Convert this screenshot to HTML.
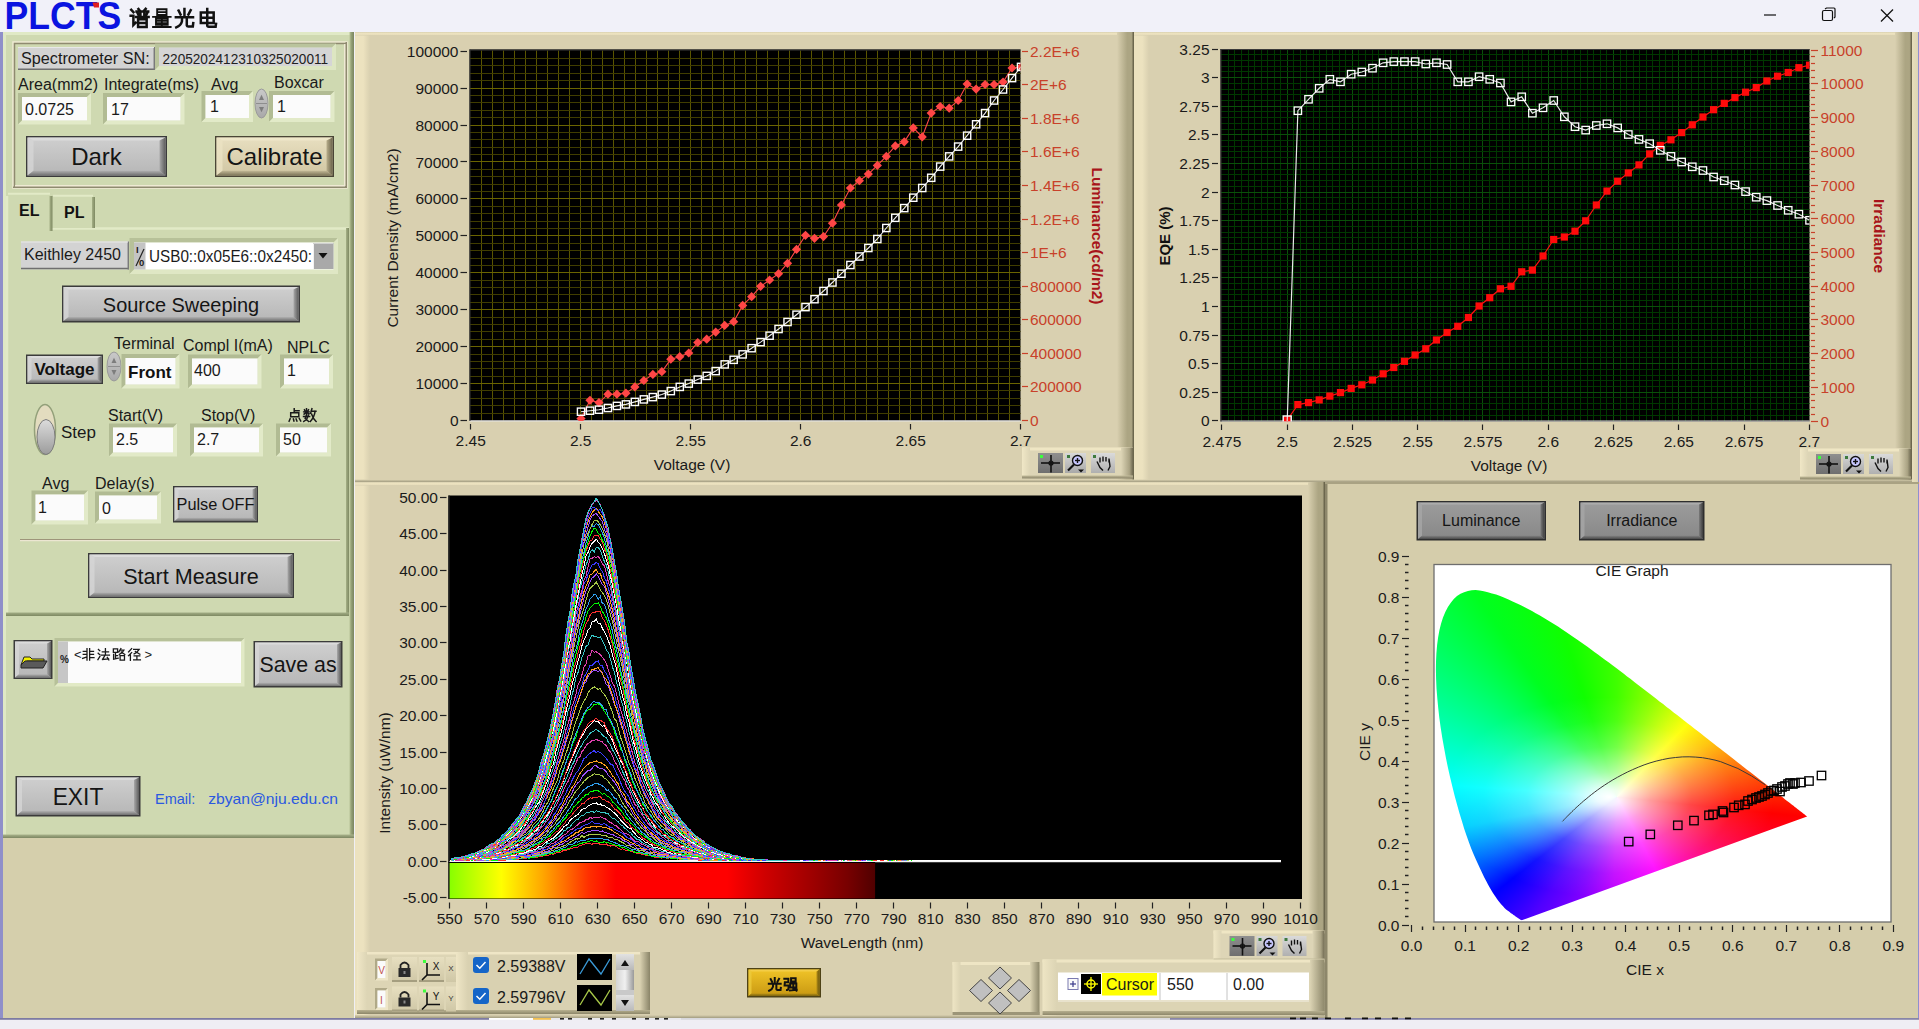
<!DOCTYPE html><html><head><meta charset="utf-8"><style>*{margin:0;padding:0}html,body{width:1919px;height:1029px;overflow:hidden;background:#f0eff5}svg text{font-family:"Liberation Sans",sans-serif}</style></head><body><svg width="1919" height="1029" viewBox="0 0 1919 1029" style="position:absolute;left:0;top:0"><defs><linearGradient id="g1" x1="0" y1="0" x2="1" y2="0"><stop offset="0" stop-color="#b7c297"/><stop offset="0.5" stop-color="#8e9a70"/><stop offset="1" stop-color="#7b8560"/></linearGradient><linearGradient id="g2" x1="0" y1="0" x2="0" y2="1"><stop offset="0" stop-color="#a9b38b"/><stop offset="1" stop-color="#7d8762"/></linearGradient><linearGradient id="g3" x1="0" y1="0" x2="0" y2="1"><stop offset="0" stop-color="#c9c9c9"/><stop offset="1" stop-color="#a9a9a9"/></linearGradient><linearGradient id="g4" x1="0" y1="0" x2="0" y2="1"><stop offset="0" stop-color="#cfcfcf"/><stop offset="1" stop-color="#b6b6b6"/></linearGradient><linearGradient id="g5" x1="0" y1="0" x2="1" y2="0"><stop offset="0" stop-color="#a8a8a8"/><stop offset="1" stop-color="#5c5c5c"/></linearGradient><linearGradient id="g6" x1="0" y1="0" x2="0" y2="1"><stop offset="0" stop-color="#b0b0b0"/><stop offset="1" stop-color="#707070"/></linearGradient><linearGradient id="g7" x1="0" y1="0" x2="0" y2="1"><stop offset="0" stop-color="#e8dfc0"/><stop offset="1" stop-color="#d0c6a3"/></linearGradient><linearGradient id="g8" x1="0" y1="0" x2="1" y2="0"><stop offset="0" stop-color="#b8ae8c"/><stop offset="1" stop-color="#6c654c"/></linearGradient><linearGradient id="g9" x1="0" y1="0" x2="0" y2="1"><stop offset="0" stop-color="#c2b896"/><stop offset="1" stop-color="#7c7458"/></linearGradient><linearGradient id="g10" x1="0" y1="0" x2="1" y2="0"><stop offset="0" stop-color="#a5b086"/><stop offset="1" stop-color="#7e8962"/></linearGradient><linearGradient id="g11" x1="0" y1="0" x2="0" y2="1"><stop offset="0" stop-color="#a2ad85"/><stop offset="1" stop-color="#7e8962"/></linearGradient><linearGradient id="g12" x1="0" y1="0" x2="1" y2="0"><stop offset="0" stop-color="#a5b086"/><stop offset="1" stop-color="#7e8962"/></linearGradient><linearGradient id="g13" x1="0" y1="0" x2="1" y2="0"><stop offset="0" stop-color="#a5b086"/><stop offset="1" stop-color="#7e8962"/></linearGradient><linearGradient id="g14" x1="0" y1="0" x2="0" y2="1"><stop offset="0" stop-color="#c9c9c9"/><stop offset="1" stop-color="#a9a9a9"/></linearGradient><linearGradient id="g15" x1="0" y1="0" x2="0" y2="1"><stop offset="0" stop-color="#dcdcdc"/><stop offset="1" stop-color="#9c9c9c"/></linearGradient><linearGradient id="g16" x1="0" y1="0" x2="1" y2="0"><stop offset="0" stop-color="#ece2bf"/><stop offset="0.55" stop-color="#ece2bf"/><stop offset="1" stop-color="#d9d0b0"/></linearGradient><linearGradient id="g17" x1="0" y1="0" x2="0" y2="1"><stop offset="0" stop-color="#d9d0b0"/><stop offset="0.4" stop-color="#ece2bf"/><stop offset="0.65" stop-color="#ece2bf"/><stop offset="1" stop-color="#d9d0b0"/></linearGradient><linearGradient id="g18" x1="0" y1="0" x2="1" y2="0"><stop offset="0" stop-color="#d9d0b0"/><stop offset="0.6" stop-color="#aca583"/><stop offset="0.85" stop-color="#aca583"/><stop offset="1" stop-color="#5c5740"/></linearGradient><linearGradient id="g19" x1="0" y1="0" x2="0" y2="1"><stop offset="0" stop-color="#d9d0b0"/><stop offset="1" stop-color="#a29c80"/></linearGradient><linearGradient id="g20" x1="0" y1="0" x2="1" y2="0"><stop offset="0" stop-color="#ece2bf"/><stop offset="0.55" stop-color="#ece2bf"/><stop offset="1" stop-color="#d9d0b0"/></linearGradient><linearGradient id="g21" x1="0" y1="0" x2="0" y2="1"><stop offset="0" stop-color="#d9d0b0"/><stop offset="0.4" stop-color="#ece2bf"/><stop offset="0.65" stop-color="#ece2bf"/><stop offset="1" stop-color="#d9d0b0"/></linearGradient><linearGradient id="g22" x1="0" y1="0" x2="1" y2="0"><stop offset="0" stop-color="#d9d0b0"/><stop offset="0.6" stop-color="#aca583"/><stop offset="0.85" stop-color="#aca583"/><stop offset="1" stop-color="#5c5740"/></linearGradient><linearGradient id="g23" x1="0" y1="0" x2="0" y2="1"><stop offset="0" stop-color="#d9d0b0"/><stop offset="1" stop-color="#a29c80"/></linearGradient><linearGradient id="g24" x1="0" y1="0" x2="1" y2="0"><stop offset="0" stop-color="#e8dfbd"/><stop offset="1" stop-color="#ddd5b3"/></linearGradient><linearGradient id="g25" x1="0" y1="0" x2="1" y2="0"><stop offset="0" stop-color="#ece2bf"/><stop offset="0.55" stop-color="#ece2bf"/><stop offset="1" stop-color="#d9d0b0"/></linearGradient><linearGradient id="g26" x1="0" y1="0" x2="0" y2="1"><stop offset="0" stop-color="#d9d0b0"/><stop offset="0.4" stop-color="#ece2bf"/><stop offset="0.65" stop-color="#ece2bf"/><stop offset="1" stop-color="#d9d0b0"/></linearGradient><linearGradient id="g27" x1="0" y1="0" x2="1" y2="0"><stop offset="0" stop-color="#d9d0b0"/><stop offset="0.6" stop-color="#aca583"/><stop offset="0.85" stop-color="#aca583"/><stop offset="1" stop-color="#5c5740"/></linearGradient><linearGradient id="g28" x1="0" y1="0" x2="0" y2="1"><stop offset="0" stop-color="#d9d0b0"/><stop offset="1" stop-color="#a29c80"/></linearGradient><linearGradient id="g29" x1="0" y1="0" x2="1" y2="0"><stop offset="0" stop-color="#f0e7c6"/><stop offset="1" stop-color="#ddd5b6"/></linearGradient><linearGradient id="g30" x1="0" y1="0" x2="1" y2="0"><stop offset="0" stop-color="#ddd5b6"/><stop offset="0.7" stop-color="#aaa384"/><stop offset="1" stop-color="#6e6850"/></linearGradient><linearGradient id="g31" x1="0" y1="0" x2="0" y2="1"><stop offset="0" stop-color="#c2bb9a"/><stop offset="1" stop-color="#8a8468"/></linearGradient><linearGradient id="g32" x1="0" y1="0" x2="0" y2="1"><stop offset="0" stop-color="#8f8f8f"/><stop offset="1" stop-color="#6f6f6f"/></linearGradient><linearGradient id="g33" x1="0" y1="0" x2="0" y2="1"><stop offset="0" stop-color="#d8d8d8"/><stop offset="1" stop-color="#a8a8a8"/></linearGradient><linearGradient id="g34" x1="0" y1="0" x2="0" y2="1"><stop offset="0" stop-color="#dadada"/><stop offset="1" stop-color="#b0b0b0"/></linearGradient><linearGradient id="g35" x1="0" y1="0" x2="1" y2="0"><stop offset="0" stop-color="#f0e7c6"/><stop offset="1" stop-color="#ddd5b6"/></linearGradient><linearGradient id="g36" x1="0" y1="0" x2="1" y2="0"><stop offset="0" stop-color="#ddd5b6"/><stop offset="0.7" stop-color="#aaa384"/><stop offset="1" stop-color="#6e6850"/></linearGradient><linearGradient id="g37" x1="0" y1="0" x2="0" y2="1"><stop offset="0" stop-color="#c2bb9a"/><stop offset="1" stop-color="#8a8468"/></linearGradient><linearGradient id="g38" x1="0" y1="0" x2="0" y2="1"><stop offset="0" stop-color="#8f8f8f"/><stop offset="1" stop-color="#6f6f6f"/></linearGradient><linearGradient id="g39" x1="0" y1="0" x2="0" y2="1"><stop offset="0" stop-color="#d8d8d8"/><stop offset="1" stop-color="#a8a8a8"/></linearGradient><linearGradient id="g40" x1="0" y1="0" x2="0" y2="1"><stop offset="0" stop-color="#dadada"/><stop offset="1" stop-color="#b0b0b0"/></linearGradient><linearGradient id="g41" x1="0" y1="0" x2="1" y2="0"><stop offset="0" stop-color="#f0e7c6"/><stop offset="1" stop-color="#ddd5b6"/></linearGradient><linearGradient id="g42" x1="0" y1="0" x2="1" y2="0"><stop offset="0" stop-color="#ddd5b6"/><stop offset="0.7" stop-color="#aaa384"/><stop offset="1" stop-color="#6e6850"/></linearGradient><linearGradient id="g43" x1="0" y1="0" x2="0" y2="1"><stop offset="0" stop-color="#c2bb9a"/><stop offset="1" stop-color="#8a8468"/></linearGradient><linearGradient id="g44" x1="0" y1="0" x2="0" y2="1"><stop offset="0" stop-color="#8f8f8f"/><stop offset="1" stop-color="#6f6f6f"/></linearGradient><linearGradient id="g45" x1="0" y1="0" x2="0" y2="1"><stop offset="0" stop-color="#d8d8d8"/><stop offset="1" stop-color="#a8a8a8"/></linearGradient><linearGradient id="g46" x1="0" y1="0" x2="0" y2="1"><stop offset="0" stop-color="#dadada"/><stop offset="1" stop-color="#b0b0b0"/></linearGradient><linearGradient id="g47" x1="0" y1="0" x2="1" y2="0"><stop offset="0.0" stop-color="#88ff00"/><stop offset="0.06521739130434782" stop-color="#c8ff00"/><stop offset="0.12173913043478261" stop-color="#ffff00"/><stop offset="0.17391304347826086" stop-color="#ffd000"/><stop offset="0.21739130434782608" stop-color="#ffa800"/><stop offset="0.26956521739130435" stop-color="#ff7000"/><stop offset="0.32608695652173914" stop-color="#ff3000"/><stop offset="0.391304347826087" stop-color="#ff0000"/><stop offset="0.6521739130434783" stop-color="#ff0000"/><stop offset="0.7391304347826086" stop-color="#d00000"/><stop offset="0.8478260869565217" stop-color="#a00000"/><stop offset="0.9347826086956522" stop-color="#780000"/><stop offset="1.0" stop-color="#500000"/></linearGradient><clipPath id="spclip"><rect x="449.5" y="495.5" width="852.5" height="367.0"/></clipPath><linearGradient id="g48" x1="0" y1="0" x2="1" y2="0"><stop offset="0" stop-color="#f0e7c7"/><stop offset="1" stop-color="#ddd5b5"/></linearGradient><linearGradient id="g49" x1="0" y1="0" x2="0" y2="1"><stop offset="0" stop-color="#b8b190"/><stop offset="1" stop-color="#8c8669"/></linearGradient><linearGradient id="g50" x1="0" y1="0" x2="0" y2="1"><stop offset="0" stop-color="#e7dfc0"/><stop offset="1" stop-color="#cfc7a6"/></linearGradient><linearGradient id="g51" x1="0" y1="0" x2="0" y2="1"><stop offset="0" stop-color="#e7dfc0"/><stop offset="1" stop-color="#cfc7a6"/></linearGradient><linearGradient id="g52" x1="0" y1="0" x2="0" y2="1"><stop offset="0" stop-color="#e7dfc0"/><stop offset="1" stop-color="#cfc7a6"/></linearGradient><linearGradient id="g53" x1="0" y1="0" x2="0" y2="1"><stop offset="0" stop-color="#e7dfc0"/><stop offset="1" stop-color="#cfc7a6"/></linearGradient><linearGradient id="g54" x1="0" y1="0" x2="0" y2="1"><stop offset="0" stop-color="#e7dfc0"/><stop offset="1" stop-color="#cfc7a6"/></linearGradient><linearGradient id="g55" x1="0" y1="0" x2="0" y2="1"><stop offset="0" stop-color="#e7dfc0"/><stop offset="1" stop-color="#cfc7a6"/></linearGradient><linearGradient id="g56" x1="0" y1="0" x2="1" y2="0"><stop offset="0" stop-color="#efe6c6"/><stop offset="1" stop-color="#d9d1b1"/></linearGradient><linearGradient id="g57" x1="0" y1="0" x2="1" y2="0"><stop offset="0" stop-color="#d9d1b1"/><stop offset="1" stop-color="#8a8468"/></linearGradient><linearGradient id="g58" x1="0" y1="0" x2="0" y2="1"><stop offset="0" stop-color="#b8b190"/><stop offset="1" stop-color="#8c8669"/></linearGradient><linearGradient id="g59" x1="0" y1="0" x2="0" y2="1"><stop offset="0" stop-color="#e2e2e2"/><stop offset="1" stop-color="#b9b9b9"/></linearGradient><linearGradient id="g60" x1="0" y1="0" x2="1" y2="0"><stop offset="0" stop-color="#d4d4d4"/><stop offset="0.5" stop-color="#f0f0f0"/><stop offset="1" stop-color="#9a9a9a"/></linearGradient><linearGradient id="g61" x1="0" y1="0" x2="0" y2="1"><stop offset="0" stop-color="#e2e2e2"/><stop offset="1" stop-color="#b9b9b9"/></linearGradient><linearGradient id="g62" x1="0" y1="0" x2="0" y2="1"><stop offset="0" stop-color="#f0c428"/><stop offset="1" stop-color="#c89812"/></linearGradient><linearGradient id="g63" x1="0" y1="0" x2="1" y2="0"><stop offset="0" stop-color="#b08a14"/><stop offset="1" stop-color="#6c5810"/></linearGradient><linearGradient id="g64" x1="0" y1="0" x2="0" y2="1"><stop offset="0" stop-color="#b89014"/><stop offset="1" stop-color="#7c6410"/></linearGradient><linearGradient id="g65" x1="0" y1="0" x2="1" y2="0"><stop offset="0" stop-color="#eee5c4"/><stop offset="1" stop-color="#dcd4b4"/></linearGradient><linearGradient id="g66" x1="0" y1="0" x2="1" y2="0"><stop offset="0" stop-color="#dcd4b4"/><stop offset="1" stop-color="#8e886b"/></linearGradient><linearGradient id="g67" x1="0" y1="0" x2="1" y2="0"><stop offset="0" stop-color="#eee5c4"/><stop offset="1" stop-color="#dcd4b4"/></linearGradient><linearGradient id="g68" x1="0" y1="0" x2="1" y2="0"><stop offset="0" stop-color="#dcd4b4"/><stop offset="1" stop-color="#8e886b"/></linearGradient><linearGradient id="g69" x1="0" y1="0" x2="0" y2="1"><stop offset="0" stop-color="#b5ae8e"/><stop offset="1" stop-color="#8e886b"/></linearGradient><linearGradient id="g70" x1="0" y1="0" x2="0" y2="1"><stop offset="0" stop-color="#9c9c9c"/><stop offset="1" stop-color="#888888"/></linearGradient><linearGradient id="g71" x1="0" y1="0" x2="1" y2="0"><stop offset="0" stop-color="#7a7a7a"/><stop offset="1" stop-color="#3e3e3e"/></linearGradient><linearGradient id="g72" x1="0" y1="0" x2="0" y2="1"><stop offset="0" stop-color="#808080"/><stop offset="1" stop-color="#4a4a4a"/></linearGradient></defs><rect x="0.00" y="0.00" width="1919.00" height="1029.00" fill="#f0eff5" />
<rect x="0.00" y="0.00" width="1919.00" height="32.00" fill="#f1f1f9" />
<rect x="0.00" y="32.00" width="3.50" height="986.00" fill="#8f8fc9" />
<rect x="3.00" y="32.00" width="351.00" height="806.00" fill="#cfd9b1" />
<rect x="3.00" y="32.00" width="351.00" height="3.00" fill="#e0e9c6" />
<rect x="3.00" y="32.00" width="3.00" height="806.00" fill="#dfe8c5" />
<rect x="349.50" y="32.00" width="4.50" height="806.00" fill="url(#g1)" />
<rect x="3.00" y="834.50" width="351.00" height="3.50" fill="url(#g2)" />
<rect x="3.00" y="838.00" width="351.00" height="180.00" fill="#d5cfac" />
<rect x="13.00" y="42.00" width="334.00" height="146.00" fill="none" stroke="#efe9d4" stroke-width="1.5"/>
<rect x="14.50" y="43.50" width="331.00" height="143.00" fill="none" stroke="#8f8a70" stroke-width="1.5"/>
<line x1="346.25" y1="42.00" x2="346.25" y2="188.00" stroke="#8f8a70" stroke-width="1.5" />
<line x1="13.00" y1="187.25" x2="347.00" y2="187.25" stroke="#8f8a70" stroke-width="1.5" />
<line x1="344.75" y1="44.00" x2="344.75" y2="186.00" stroke="#efe9d4" stroke-width="1.5" />
<line x1="15.00" y1="185.75" x2="345.00" y2="185.75" stroke="#efe9d4" stroke-width="1.5" />
<rect x="18.00" y="47.00" width="137.00" height="23.00" fill="#d3d3d3" />
<line x1="18.00" y1="69.30" x2="155.00" y2="69.30" stroke="#6f6f6f" stroke-width="1.5" />
<line x1="154.30" y1="47.00" x2="154.30" y2="70.00" stroke="#7a7a7a" stroke-width="1.5" />
<line x1="18.00" y1="47.50" x2="154.00" y2="47.50" stroke="#e8e8e8" stroke-width="1" />
<polygon points="155.00,43.50 336.00,43.50 332.00,47.50 159.00,47.50 159.00,66.00 155.00,70.00" fill="#bac49c" />
<polygon points="336.00,43.50 336.00,70.00 155.00,70.00 159.00,66.00 332.00,66.00 332.00,47.50" fill="#dde6c2" />
<rect x="159.00" y="47.50" width="173.00" height="18.50" fill="#d5d5d5" />
<polygon points="18.00,93.00 91.00,93.00 87.00,97.00 22.00,97.00 22.00,120.50 18.00,124.50" fill="#b1bb93" />
<polygon points="91.00,93.00 91.00,124.50 18.00,124.50 22.00,120.50 87.00,120.50 87.00,97.00" fill="#e2eac8" />
<rect x="22.00" y="97.00" width="65.00" height="23.50" fill="#fbfbfb" />
<polygon points="103.00,93.00 184.50,93.00 180.50,97.00 107.00,97.00 107.00,120.50 103.00,124.50" fill="#b1bb93" />
<polygon points="184.50,93.00 184.50,124.50 103.00,124.50 107.00,120.50 180.50,120.50 180.50,97.00" fill="#e2eac8" />
<rect x="107.00" y="97.00" width="73.50" height="23.50" fill="#fbfbfb" />
<polygon points="201.50,91.00 253.00,91.00 249.00,95.00 205.50,95.00 205.50,118.00 201.50,122.00" fill="#b1bb93" />
<polygon points="253.00,91.00 253.00,122.00 201.50,122.00 205.50,118.00 249.00,118.00 249.00,95.00" fill="#e2eac8" />
<rect x="205.50" y="95.00" width="43.50" height="23.00" fill="#fbfbfb" />
<polygon points="269.00,91.00 334.50,91.00 330.50,95.00 273.00,95.00 273.00,118.00 269.00,122.00" fill="#b1bb93" />
<polygon points="334.50,91.00 334.50,122.00 269.00,122.00 273.00,118.00 330.50,118.00 330.50,95.00" fill="#e2eac8" />
<rect x="273.00" y="95.00" width="57.50" height="23.00" fill="#fbfbfb" />
<ellipse cx="261.50" cy="103.50" rx="6.50" ry="14.50" fill="url(#g3)" stroke="#9a9a9a" stroke-width="1"/>
<line x1="256.00" y1="103.50" x2="267.00" y2="103.50" stroke="#8e8e8e" stroke-width="1" />
<polygon points="261.50,94.80 259.00,100.02 264.00,100.02" fill="#7d7d7d" />
<polygon points="261.50,112.20 259.00,106.98 264.00,106.98" fill="#7d7d7d" />
<rect x="26.00" y="136.00" width="141.00" height="41.00" fill="#3b3b3b" />
<rect x="27.50" y="137.50" width="138.00" height="38.00" fill="url(#g4)" />
<polygon points="27.50,137.50 165.50,137.50 159.50,140.50 33.50,140.50" fill="#dedede" opacity="0.8"/>
<polygon points="27.50,137.50 33.50,140.50 33.50,170.70 27.50,175.50" fill="#d6d6d6" opacity="0.8"/>
<polygon points="27.50,175.50 165.50,175.50 159.50,170.70 33.50,170.70" fill="url(#g6)" />
<polygon points="165.50,137.50 165.50,175.50 159.50,170.70 159.50,140.50" fill="url(#g5)" />
<rect x="215.00" y="136.00" width="119.00" height="41.00" fill="#4a4636" />
<rect x="216.50" y="137.50" width="116.00" height="38.00" fill="url(#g7)" />
<polygon points="216.50,137.50 332.50,137.50 326.50,140.50 222.50,140.50" fill="#f0e8cc" opacity="0.8"/>
<polygon points="216.50,137.50 222.50,140.50 222.50,170.70 216.50,175.50" fill="#ebe2c3" opacity="0.8"/>
<polygon points="216.50,175.50 332.50,175.50 326.50,170.70 222.50,170.70" fill="url(#g9)" />
<polygon points="332.50,137.50 332.50,175.50 326.50,170.70 326.50,140.50" fill="url(#g8)" />
<rect x="6.00" y="228.00" width="343.00" height="388.00" fill="#cfd9b1" />
<line x1="6.00" y1="228.50" x2="349.00" y2="228.50" stroke="#e2eac7" stroke-width="2.5" />
<line x1="7.00" y1="228.00" x2="7.00" y2="616.00" stroke="#e2eac7" stroke-width="2.5" />
<rect x="346.00" y="228.00" width="3.00" height="388.00" fill="url(#g10)" />
<rect x="6.00" y="612.50" width="343.00" height="3.50" fill="url(#g11)" />
<path d="M52,228 L52,198 Q52,195 55,195 L92,195 Q95,195 95,198 L95,228 Z" fill="#cfd9b1"/>
<line x1="53.00" y1="195.80" x2="93.00" y2="195.80" stroke="#e2eac7" stroke-width="2" />
<rect x="92.00" y="197.00" width="3.00" height="31.00" fill="url(#g12)" />
<path d="M6,232 L6,197 Q6,193 10,193 L49,193 Q52,193 52,197 L52,232 Z" fill="#cfd9b1"/>
<line x1="8.00" y1="193.80" x2="50.00" y2="193.80" stroke="#e2eac7" stroke-width="2" />
<line x1="7.00" y1="196.00" x2="7.00" y2="232.00" stroke="#e2eac7" stroke-width="2.5" />
<rect x="49.50" y="196.00" width="3.00" height="35.00" fill="url(#g13)" />
<rect x="21.00" y="241.50" width="108.00" height="28.00" fill="#d3d3d3" />
<line x1="21.00" y1="268.50" x2="129.00" y2="268.50" stroke="#6f6f6f" stroke-width="1.5" />
<line x1="128.30" y1="241.50" x2="128.30" y2="269.50" stroke="#7a7a7a" stroke-width="1.5" />
<line x1="21.00" y1="242.00" x2="128.00" y2="242.00" stroke="#e9e9e9" stroke-width="1" />
<polygon points="129.50,238.00 338.00,238.00 333.50,242.50 134.00,242.50 134.00,269.50 129.50,274.00" fill="#b7c199" />
<polygon points="338.00,238.00 338.00,274.00 129.50,274.00 134.00,269.50 333.50,269.50 333.50,242.50" fill="#dfe7c4" />
<rect x="134.00" y="242.50" width="199.50" height="27.00" fill="#ffffff" />
<rect x="134.00" y="242.50" width="11.50" height="27.00" fill="#c4c4c4" />
<line x1="136.00" y1="266.00" x2="144.00" y2="249.00" stroke="#222" stroke-width="1.2" />
<rect x="313.00" y="243.00" width="20.50" height="26.00" fill="#a9a9a9" />
<line x1="313.50" y1="243.00" x2="313.50" y2="269.00" stroke="#f2f2f2" stroke-width="1" />
<line x1="313.00" y1="243.50" x2="333.00" y2="243.50" stroke="#d0d0d0" stroke-width="1" />
<polygon points="318.50,253.00 327.50,253.00 323.00,258.50" fill="#111" />
<rect x="62.00" y="285.50" width="238.00" height="37.00" fill="#3b3b3b" />
<rect x="63.50" y="287.00" width="235.00" height="34.00" fill="url(#g4)" />
<polygon points="63.50,287.00 298.50,287.00 293.50,289.50 68.50,289.50" fill="#dedede" opacity="0.8"/>
<polygon points="63.50,287.00 68.50,289.50 68.50,317.00 63.50,321.00" fill="#d6d6d6" opacity="0.8"/>
<polygon points="63.50,321.00 298.50,321.00 293.50,317.00 68.50,317.00" fill="url(#g6)" />
<polygon points="298.50,287.00 298.50,321.00 293.50,317.00 293.50,289.50" fill="url(#g5)" />
<rect x="26.00" y="354.50" width="77.00" height="29.50" fill="#3b3b3b" />
<rect x="27.50" y="356.00" width="74.00" height="26.50" fill="url(#g4)" />
<polygon points="27.50,356.00 101.50,356.00 97.50,358.00 31.50,358.00" fill="#dedede" opacity="0.8"/>
<polygon points="27.50,356.00 31.50,358.00 31.50,379.30 27.50,382.50" fill="#d6d6d6" opacity="0.8"/>
<polygon points="27.50,382.50 101.50,382.50 97.50,379.30 31.50,379.30" fill="url(#g6)" />
<polygon points="101.50,356.00 101.50,382.50 97.50,379.30 97.50,358.00" fill="url(#g5)" />
<ellipse cx="114.00" cy="366.50" rx="7.00" ry="14.50" fill="url(#g14)" stroke="#9a9a9a" stroke-width="1"/>
<line x1="108.00" y1="366.50" x2="120.00" y2="366.50" stroke="#8e8e8e" stroke-width="1" />
<polygon points="114.00,357.80 111.50,363.02 116.50,363.02" fill="#7d7d7d" />
<polygon points="114.00,375.20 111.50,369.98 116.50,369.98" fill="#7d7d7d" />
<polygon points="121.50,354.00 179.50,354.00 175.50,358.00 125.50,358.00 125.50,384.50 121.50,388.50" fill="#b1bb93" />
<polygon points="179.50,354.00 179.50,388.50 121.50,388.50 125.50,384.50 175.50,384.50 175.50,358.00" fill="#e2eac8" />
<rect x="125.50" y="358.00" width="50.00" height="26.50" fill="#fbfbfb" />
<polygon points="188.00,354.50 261.50,354.50 257.50,358.50 192.00,358.50 192.00,384.50 188.00,388.50" fill="#b1bb93" />
<polygon points="261.50,354.50 261.50,388.50 188.00,388.50 192.00,384.50 257.50,384.50 257.50,358.50" fill="#e2eac8" />
<rect x="192.00" y="358.50" width="65.50" height="26.00" fill="#fbfbfb" />
<polygon points="280.00,354.50 333.00,354.50 329.00,358.50 284.00,358.50 284.00,384.50 280.00,388.50" fill="#b1bb93" />
<polygon points="333.00,354.50 333.00,388.50 280.00,388.50 284.00,384.50 329.00,384.50 329.00,358.50" fill="#e2eac8" />
<rect x="284.00" y="358.50" width="45.00" height="26.00" fill="#fbfbfb" />
<ellipse cx="45" cy="429.5" rx="10.5" ry="25" fill="#e3dcbf" stroke="#93a07a" stroke-width="1.5"/>
<ellipse cx="46" cy="437" rx="9" ry="17.5" fill="url(#g15)" stroke="#7c7c7c" stroke-width="1"/>
<polygon points="109.00,423.50 177.00,423.50 173.00,427.50 113.00,427.50 113.00,452.50 109.00,456.50" fill="#b1bb93" />
<polygon points="177.00,423.50 177.00,456.50 109.00,456.50 113.00,452.50 173.00,452.50 173.00,427.50" fill="#e2eac8" />
<rect x="113.00" y="427.50" width="60.00" height="25.00" fill="#fbfbfb" />
<polygon points="190.00,423.50 263.00,423.50 259.00,427.50 194.00,427.50 194.00,452.50 190.00,456.50" fill="#b1bb93" />
<polygon points="263.00,423.50 263.00,456.50 190.00,456.50 194.00,452.50 259.00,452.50 259.00,427.50" fill="#e2eac8" />
<rect x="194.00" y="427.50" width="65.00" height="25.00" fill="#fbfbfb" />
<polygon points="276.00,423.50 331.00,423.50 327.00,427.50 280.00,427.50 280.00,452.50 276.00,456.50" fill="#b1bb93" />
<polygon points="331.00,423.50 331.00,456.50 276.00,456.50 280.00,452.50 327.00,452.50 327.00,427.50" fill="#e2eac8" />
<rect x="280.00" y="427.50" width="47.00" height="25.00" fill="#fbfbfb" />
<polygon points="31.50,490.50 88.00,490.50 84.00,494.50 35.50,494.50 35.50,520.50 31.50,524.50" fill="#b1bb93" />
<polygon points="88.00,490.50 88.00,524.50 31.50,524.50 35.50,520.50 84.00,520.50 84.00,494.50" fill="#e2eac8" />
<rect x="35.50" y="494.50" width="48.50" height="26.00" fill="#fbfbfb" />
<polygon points="95.00,491.50 161.00,491.50 157.00,495.50 99.00,495.50 99.00,519.50 95.00,523.50" fill="#b1bb93" />
<polygon points="161.00,491.50 161.00,523.50 95.00,523.50 99.00,519.50 157.00,519.50 157.00,495.50" fill="#e2eac8" />
<rect x="99.00" y="495.50" width="58.00" height="24.00" fill="#fbfbfb" />
<rect x="173.00" y="486.00" width="85.00" height="36.50" fill="#3b3b3b" />
<rect x="174.50" y="487.50" width="82.00" height="33.50" fill="url(#g4)" />
<polygon points="174.50,487.50 256.50,487.50 252.50,489.50 178.50,489.50" fill="#dedede" opacity="0.8"/>
<polygon points="174.50,487.50 178.50,489.50 178.50,517.80 174.50,521.00" fill="#d6d6d6" opacity="0.8"/>
<polygon points="174.50,521.00 256.50,521.00 252.50,517.80 178.50,517.80" fill="url(#g6)" />
<polygon points="256.50,487.50 256.50,521.00 252.50,517.80 252.50,489.50" fill="url(#g5)" />
<line x1="20.00" y1="539.50" x2="340.00" y2="539.50" stroke="#9e957a" stroke-width="1.2" />
<line x1="20.00" y1="540.70" x2="340.00" y2="540.70" stroke="#ece6d2" stroke-width="1.2" />
<rect x="88.00" y="553.00" width="206.00" height="45.00" fill="#3b3b3b" />
<rect x="89.50" y="554.50" width="203.00" height="42.00" fill="url(#g4)" />
<polygon points="89.50,554.50 292.50,554.50 287.50,557.00 94.50,557.00" fill="#dedede" opacity="0.8"/>
<polygon points="89.50,554.50 94.50,557.00 94.50,592.50 89.50,596.50" fill="#d6d6d6" opacity="0.8"/>
<polygon points="89.50,596.50 292.50,596.50 287.50,592.50 94.50,592.50" fill="url(#g6)" />
<polygon points="292.50,554.50 292.50,596.50 287.50,592.50 287.50,557.00" fill="url(#g5)" />
<rect x="13.50" y="640.00" width="39.00" height="39.00" fill="#3b3b3b" />
<rect x="15.00" y="641.50" width="36.00" height="36.00" fill="url(#g4)" />
<polygon points="15.00,641.50 51.00,641.50 47.00,643.50 19.00,643.50" fill="#dedede" opacity="0.8"/>
<polygon points="15.00,641.50 19.00,643.50 19.00,674.30 15.00,677.50" fill="#d6d6d6" opacity="0.8"/>
<polygon points="15.00,677.50 51.00,677.50 47.00,674.30 19.00,674.30" fill="url(#g6)" />
<polygon points="51.00,641.50 51.00,677.50 47.00,674.30 47.00,643.50" fill="url(#g5)" />
<path d="M21,665 L24,657 L30,657 L32,659 L44,659 L44,661 L27,661 Z" fill="#f4f000" stroke="#222" stroke-width="1"/>
<path d="M21,665 L25,661 L47,661 L43,668 L21,668 Z" fill="#5a5a5a" stroke="#222" stroke-width="1"/>
<polygon points="54.50,638.00 244.50,638.00 241.00,641.50 58.00,641.50 58.00,683.00 54.50,686.50" fill="#b7c199" />
<polygon points="244.50,638.00 244.50,686.50 54.50,686.50 58.00,683.00 241.00,683.00 241.00,641.50" fill="#e2eac6" />
<rect x="58.00" y="641.50" width="183.00" height="41.50" fill="#fbfbfb" />
<rect x="58.00" y="641.50" width="10.00" height="41.50" fill="#c6c6c6" />
<rect x="253.50" y="641.00" width="89.00" height="46.50" fill="#3b3b3b" />
<rect x="255.00" y="642.50" width="86.00" height="43.50" fill="url(#g4)" />
<polygon points="255.00,642.50 341.00,642.50 337.00,644.50 259.00,644.50" fill="#dedede" opacity="0.8"/>
<polygon points="255.00,642.50 259.00,644.50 259.00,682.80 255.00,686.00" fill="#d6d6d6" opacity="0.8"/>
<polygon points="255.00,686.00 341.00,686.00 337.00,682.80 259.00,682.80" fill="url(#g6)" />
<polygon points="341.00,642.50 341.00,686.00 337.00,682.80 337.00,644.50" fill="url(#g5)" />
<rect x="15.50" y="776.00" width="125.00" height="40.50" fill="#3b3b3b" />
<rect x="17.00" y="777.50" width="122.00" height="37.50" fill="url(#g4)" />
<polygon points="17.00,777.50 139.00,777.50 134.00,780.00 22.00,780.00" fill="#dedede" opacity="0.8"/>
<polygon points="17.00,777.50 22.00,780.00 22.00,811.00 17.00,815.00" fill="#d6d6d6" opacity="0.8"/>
<polygon points="17.00,815.00 139.00,815.00 134.00,811.00 22.00,811.00" fill="url(#g6)" />
<polygon points="139.00,777.50 139.00,815.00 134.00,811.00 134.00,780.00" fill="url(#g5)" />
<rect x="355.00" y="32.00" width="779.00" height="450.00" fill="#d9d0b0" />
<rect x="355.00" y="32.00" width="15.00" height="450.00" fill="url(#g16)" />
<rect x="355.00" y="32.00" width="779.00" height="3.50" fill="url(#g17)" />
<rect x="1117.00" y="32.00" width="17.00" height="450.00" fill="url(#g18)" />
<rect x="355.00" y="479.50" width="779.00" height="2.50" fill="url(#g19)" />
<rect x="1134.00" y="32.00" width="778.00" height="450.00" fill="#d9d0b0" />
<rect x="1134.00" y="32.00" width="15.00" height="450.00" fill="url(#g20)" />
<rect x="1134.00" y="32.00" width="778.00" height="3.50" fill="url(#g21)" />
<rect x="1895.00" y="32.00" width="17.00" height="450.00" fill="url(#g22)" />
<rect x="1134.00" y="479.50" width="778.00" height="2.50" fill="url(#g23)" />
<rect x="1912.00" y="32.00" width="6.00" height="450.00" fill="url(#g24)" />
<rect x="355.00" y="482.00" width="970.00" height="536.00" fill="#d9d0b0" />
<rect x="355.00" y="482.00" width="15.00" height="536.00" fill="url(#g25)" />
<rect x="355.00" y="482.00" width="970.00" height="3.50" fill="url(#g26)" />
<rect x="1308.00" y="482.00" width="17.00" height="536.00" fill="url(#g27)" />
<rect x="355.00" y="1015.00" width="970.00" height="3.00" fill="url(#g28)" />
<rect x="1325.00" y="482.00" width="594.00" height="536.00" fill="#d5cdab" />
<rect x="1325.00" y="482.00" width="2.50" height="536.00" fill="#8d876b" />
<rect x="1918.00" y="32.00" width="1.50" height="986.00" fill="#8f8fd0" />
<rect x="1325.00" y="482.00" width="594.00" height="2.00" fill="#a9a283" />
<rect x="469.50" y="49.50" width="551.00" height="371.50" fill="#000" />
<line x1="481.50" y1="50.50" x2="481.50" y2="420.50" stroke="#5a5500" stroke-width="1" />
<line x1="492.50" y1="50.50" x2="492.50" y2="420.50" stroke="#5a5500" stroke-width="1" />
<line x1="503.50" y1="50.50" x2="503.50" y2="420.50" stroke="#5a5500" stroke-width="1" />
<line x1="514.50" y1="50.50" x2="514.50" y2="420.50" stroke="#5a5500" stroke-width="1" />
<line x1="525.50" y1="50.50" x2="525.50" y2="420.50" stroke="#5a5500" stroke-width="1" />
<line x1="536.50" y1="50.50" x2="536.50" y2="420.50" stroke="#5a5500" stroke-width="1" />
<line x1="547.50" y1="50.50" x2="547.50" y2="420.50" stroke="#5a5500" stroke-width="1" />
<line x1="558.50" y1="50.50" x2="558.50" y2="420.50" stroke="#5a5500" stroke-width="1" />
<line x1="569.50" y1="50.50" x2="569.50" y2="420.50" stroke="#5a5500" stroke-width="1" />
<line x1="580.50" y1="50.50" x2="580.50" y2="420.50" stroke="#5a5500" stroke-width="1" />
<line x1="591.50" y1="50.50" x2="591.50" y2="420.50" stroke="#5a5500" stroke-width="1" />
<line x1="602.50" y1="50.50" x2="602.50" y2="420.50" stroke="#5a5500" stroke-width="1" />
<line x1="613.50" y1="50.50" x2="613.50" y2="420.50" stroke="#5a5500" stroke-width="1" />
<line x1="624.50" y1="50.50" x2="624.50" y2="420.50" stroke="#5a5500" stroke-width="1" />
<line x1="635.50" y1="50.50" x2="635.50" y2="420.50" stroke="#5a5500" stroke-width="1" />
<line x1="646.50" y1="50.50" x2="646.50" y2="420.50" stroke="#5a5500" stroke-width="1" />
<line x1="657.50" y1="50.50" x2="657.50" y2="420.50" stroke="#5a5500" stroke-width="1" />
<line x1="668.50" y1="50.50" x2="668.50" y2="420.50" stroke="#5a5500" stroke-width="1" />
<line x1="679.50" y1="50.50" x2="679.50" y2="420.50" stroke="#5a5500" stroke-width="1" />
<line x1="690.50" y1="50.50" x2="690.50" y2="420.50" stroke="#5a5500" stroke-width="1" />
<line x1="701.50" y1="50.50" x2="701.50" y2="420.50" stroke="#5a5500" stroke-width="1" />
<line x1="712.50" y1="50.50" x2="712.50" y2="420.50" stroke="#5a5500" stroke-width="1" />
<line x1="723.50" y1="50.50" x2="723.50" y2="420.50" stroke="#5a5500" stroke-width="1" />
<line x1="734.50" y1="50.50" x2="734.50" y2="420.50" stroke="#5a5500" stroke-width="1" />
<line x1="745.50" y1="50.50" x2="745.50" y2="420.50" stroke="#5a5500" stroke-width="1" />
<line x1="756.50" y1="50.50" x2="756.50" y2="420.50" stroke="#5a5500" stroke-width="1" />
<line x1="767.50" y1="50.50" x2="767.50" y2="420.50" stroke="#5a5500" stroke-width="1" />
<line x1="778.50" y1="50.50" x2="778.50" y2="420.50" stroke="#5a5500" stroke-width="1" />
<line x1="789.50" y1="50.50" x2="789.50" y2="420.50" stroke="#5a5500" stroke-width="1" />
<line x1="800.50" y1="50.50" x2="800.50" y2="420.50" stroke="#5a5500" stroke-width="1" />
<line x1="811.50" y1="50.50" x2="811.50" y2="420.50" stroke="#5a5500" stroke-width="1" />
<line x1="822.50" y1="50.50" x2="822.50" y2="420.50" stroke="#5a5500" stroke-width="1" />
<line x1="833.50" y1="50.50" x2="833.50" y2="420.50" stroke="#5a5500" stroke-width="1" />
<line x1="844.50" y1="50.50" x2="844.50" y2="420.50" stroke="#5a5500" stroke-width="1" />
<line x1="855.50" y1="50.50" x2="855.50" y2="420.50" stroke="#5a5500" stroke-width="1" />
<line x1="866.50" y1="50.50" x2="866.50" y2="420.50" stroke="#5a5500" stroke-width="1" />
<line x1="877.50" y1="50.50" x2="877.50" y2="420.50" stroke="#5a5500" stroke-width="1" />
<line x1="888.50" y1="50.50" x2="888.50" y2="420.50" stroke="#5a5500" stroke-width="1" />
<line x1="899.50" y1="50.50" x2="899.50" y2="420.50" stroke="#5a5500" stroke-width="1" />
<line x1="910.50" y1="50.50" x2="910.50" y2="420.50" stroke="#5a5500" stroke-width="1" />
<line x1="921.50" y1="50.50" x2="921.50" y2="420.50" stroke="#5a5500" stroke-width="1" />
<line x1="932.50" y1="50.50" x2="932.50" y2="420.50" stroke="#5a5500" stroke-width="1" />
<line x1="943.50" y1="50.50" x2="943.50" y2="420.50" stroke="#5a5500" stroke-width="1" />
<line x1="954.50" y1="50.50" x2="954.50" y2="420.50" stroke="#5a5500" stroke-width="1" />
<line x1="965.50" y1="50.50" x2="965.50" y2="420.50" stroke="#5a5500" stroke-width="1" />
<line x1="976.50" y1="50.50" x2="976.50" y2="420.50" stroke="#5a5500" stroke-width="1" />
<line x1="987.50" y1="50.50" x2="987.50" y2="420.50" stroke="#5a5500" stroke-width="1" />
<line x1="998.50" y1="50.50" x2="998.50" y2="420.50" stroke="#5a5500" stroke-width="1" />
<line x1="1009.50" y1="50.50" x2="1009.50" y2="420.50" stroke="#5a5500" stroke-width="1" />
<line x1="470.00" y1="413.50" x2="1020.50" y2="413.50" stroke="#403d00" stroke-width="1" />
<line x1="470.00" y1="405.50" x2="1020.50" y2="405.50" stroke="#403d00" stroke-width="1" />
<line x1="470.00" y1="398.50" x2="1020.50" y2="398.50" stroke="#403d00" stroke-width="1" />
<line x1="470.00" y1="390.50" x2="1020.50" y2="390.50" stroke="#403d00" stroke-width="1" />
<line x1="470.00" y1="383.50" x2="1020.50" y2="383.50" stroke="#6a6400" stroke-width="1" />
<line x1="470.00" y1="376.50" x2="1020.50" y2="376.50" stroke="#403d00" stroke-width="1" />
<line x1="470.00" y1="368.50" x2="1020.50" y2="368.50" stroke="#403d00" stroke-width="1" />
<line x1="470.00" y1="361.50" x2="1020.50" y2="361.50" stroke="#403d00" stroke-width="1" />
<line x1="470.00" y1="354.50" x2="1020.50" y2="354.50" stroke="#403d00" stroke-width="1" />
<line x1="470.00" y1="346.50" x2="1020.50" y2="346.50" stroke="#6a6400" stroke-width="1" />
<line x1="470.00" y1="339.50" x2="1020.50" y2="339.50" stroke="#403d00" stroke-width="1" />
<line x1="470.00" y1="331.50" x2="1020.50" y2="331.50" stroke="#403d00" stroke-width="1" />
<line x1="470.00" y1="324.50" x2="1020.50" y2="324.50" stroke="#403d00" stroke-width="1" />
<line x1="470.00" y1="317.50" x2="1020.50" y2="317.50" stroke="#403d00" stroke-width="1" />
<line x1="470.00" y1="309.50" x2="1020.50" y2="309.50" stroke="#6a6400" stroke-width="1" />
<line x1="470.00" y1="302.50" x2="1020.50" y2="302.50" stroke="#403d00" stroke-width="1" />
<line x1="470.00" y1="294.50" x2="1020.50" y2="294.50" stroke="#403d00" stroke-width="1" />
<line x1="470.00" y1="287.50" x2="1020.50" y2="287.50" stroke="#403d00" stroke-width="1" />
<line x1="470.00" y1="280.50" x2="1020.50" y2="280.50" stroke="#403d00" stroke-width="1" />
<line x1="470.00" y1="272.50" x2="1020.50" y2="272.50" stroke="#6a6400" stroke-width="1" />
<line x1="470.00" y1="265.50" x2="1020.50" y2="265.50" stroke="#403d00" stroke-width="1" />
<line x1="470.00" y1="258.50" x2="1020.50" y2="258.50" stroke="#403d00" stroke-width="1" />
<line x1="470.00" y1="250.50" x2="1020.50" y2="250.50" stroke="#403d00" stroke-width="1" />
<line x1="470.00" y1="243.50" x2="1020.50" y2="243.50" stroke="#403d00" stroke-width="1" />
<line x1="470.00" y1="235.50" x2="1020.50" y2="235.50" stroke="#6a6400" stroke-width="1" />
<line x1="470.00" y1="228.50" x2="1020.50" y2="228.50" stroke="#403d00" stroke-width="1" />
<line x1="470.00" y1="221.50" x2="1020.50" y2="221.50" stroke="#403d00" stroke-width="1" />
<line x1="470.00" y1="213.50" x2="1020.50" y2="213.50" stroke="#403d00" stroke-width="1" />
<line x1="470.00" y1="206.50" x2="1020.50" y2="206.50" stroke="#403d00" stroke-width="1" />
<line x1="470.00" y1="198.50" x2="1020.50" y2="198.50" stroke="#6a6400" stroke-width="1" />
<line x1="470.00" y1="191.50" x2="1020.50" y2="191.50" stroke="#403d00" stroke-width="1" />
<line x1="470.00" y1="184.50" x2="1020.50" y2="184.50" stroke="#403d00" stroke-width="1" />
<line x1="470.00" y1="176.50" x2="1020.50" y2="176.50" stroke="#403d00" stroke-width="1" />
<line x1="470.00" y1="169.50" x2="1020.50" y2="169.50" stroke="#403d00" stroke-width="1" />
<line x1="470.00" y1="161.50" x2="1020.50" y2="161.50" stroke="#6a6400" stroke-width="1" />
<line x1="470.00" y1="154.50" x2="1020.50" y2="154.50" stroke="#403d00" stroke-width="1" />
<line x1="470.00" y1="147.50" x2="1020.50" y2="147.50" stroke="#403d00" stroke-width="1" />
<line x1="470.00" y1="139.50" x2="1020.50" y2="139.50" stroke="#403d00" stroke-width="1" />
<line x1="470.00" y1="132.50" x2="1020.50" y2="132.50" stroke="#403d00" stroke-width="1" />
<line x1="470.00" y1="125.50" x2="1020.50" y2="125.50" stroke="#6a6400" stroke-width="1" />
<line x1="470.00" y1="117.50" x2="1020.50" y2="117.50" stroke="#403d00" stroke-width="1" />
<line x1="470.00" y1="110.50" x2="1020.50" y2="110.50" stroke="#403d00" stroke-width="1" />
<line x1="470.00" y1="102.50" x2="1020.50" y2="102.50" stroke="#403d00" stroke-width="1" />
<line x1="470.00" y1="95.50" x2="1020.50" y2="95.50" stroke="#403d00" stroke-width="1" />
<line x1="470.00" y1="88.50" x2="1020.50" y2="88.50" stroke="#6a6400" stroke-width="1" />
<line x1="470.00" y1="80.50" x2="1020.50" y2="80.50" stroke="#403d00" stroke-width="1" />
<line x1="470.00" y1="73.50" x2="1020.50" y2="73.50" stroke="#403d00" stroke-width="1" />
<line x1="470.00" y1="65.50" x2="1020.50" y2="65.50" stroke="#403d00" stroke-width="1" />
<line x1="470.00" y1="58.50" x2="1020.50" y2="58.50" stroke="#403d00" stroke-width="1" />
<line x1="469.50" y1="420.80" x2="1020.50" y2="420.80" stroke="#e6e6e6" stroke-width="1.2" />
<line x1="470.00" y1="49.50" x2="470.00" y2="421.00" stroke="#3a3a3a" stroke-width="1" />
<line x1="469.50" y1="50.00" x2="1020.50" y2="50.00" stroke="#3a3a3a" stroke-width="1" />
<line x1="460.50" y1="420.50" x2="467.00" y2="420.50" stroke="#222" stroke-width="1.2" />
<line x1="460.50" y1="383.50" x2="467.00" y2="383.50" stroke="#222" stroke-width="1.2" />
<line x1="460.50" y1="346.50" x2="467.00" y2="346.50" stroke="#222" stroke-width="1.2" />
<line x1="460.50" y1="309.50" x2="467.00" y2="309.50" stroke="#222" stroke-width="1.2" />
<line x1="460.50" y1="272.50" x2="467.00" y2="272.50" stroke="#222" stroke-width="1.2" />
<line x1="460.50" y1="235.50" x2="467.00" y2="235.50" stroke="#222" stroke-width="1.2" />
<line x1="460.50" y1="198.50" x2="467.00" y2="198.50" stroke="#222" stroke-width="1.2" />
<line x1="460.50" y1="161.50" x2="467.00" y2="161.50" stroke="#222" stroke-width="1.2" />
<line x1="460.50" y1="125.50" x2="467.00" y2="125.50" stroke="#222" stroke-width="1.2" />
<line x1="460.50" y1="88.50" x2="467.00" y2="88.50" stroke="#222" stroke-width="1.2" />
<line x1="460.50" y1="51.50" x2="467.00" y2="51.50" stroke="#222" stroke-width="1.2" />
<line x1="470.50" y1="424.00" x2="470.50" y2="429.50" stroke="#222" stroke-width="1.2" />
<line x1="580.50" y1="424.00" x2="580.50" y2="429.50" stroke="#222" stroke-width="1.2" />
<line x1="690.50" y1="424.00" x2="690.50" y2="429.50" stroke="#222" stroke-width="1.2" />
<line x1="800.50" y1="424.00" x2="800.50" y2="429.50" stroke="#222" stroke-width="1.2" />
<line x1="910.50" y1="424.00" x2="910.50" y2="429.50" stroke="#222" stroke-width="1.2" />
<line x1="1020.50" y1="424.00" x2="1020.50" y2="429.50" stroke="#222" stroke-width="1.2" />
<line x1="1022.00" y1="420.50" x2="1028.00" y2="420.50" stroke="#c8412a" stroke-width="1.2" />
<line x1="1022.00" y1="386.50" x2="1028.00" y2="386.50" stroke="#c8412a" stroke-width="1.2" />
<line x1="1022.00" y1="353.50" x2="1028.00" y2="353.50" stroke="#c8412a" stroke-width="1.2" />
<line x1="1022.00" y1="319.50" x2="1028.00" y2="319.50" stroke="#c8412a" stroke-width="1.2" />
<line x1="1022.00" y1="286.50" x2="1028.00" y2="286.50" stroke="#c8412a" stroke-width="1.2" />
<line x1="1022.00" y1="252.50" x2="1028.00" y2="252.50" stroke="#c8412a" stroke-width="1.2" />
<line x1="1022.00" y1="219.50" x2="1028.00" y2="219.50" stroke="#c8412a" stroke-width="1.2" />
<line x1="1022.00" y1="185.50" x2="1028.00" y2="185.50" stroke="#c8412a" stroke-width="1.2" />
<line x1="1022.00" y1="151.50" x2="1028.00" y2="151.50" stroke="#c8412a" stroke-width="1.2" />
<line x1="1022.00" y1="118.50" x2="1028.00" y2="118.50" stroke="#c8412a" stroke-width="1.2" />
<line x1="1022.00" y1="84.50" x2="1028.00" y2="84.50" stroke="#c8412a" stroke-width="1.2" />
<line x1="1022.00" y1="51.50" x2="1028.00" y2="51.50" stroke="#c8412a" stroke-width="1.2" />
<rect x="1022.00" y="447.50" width="111.00" height="31.00" fill="#ddd5b6" />
<rect x="1022.00" y="447.50" width="111.00" height="3.00" fill="#efe6c4" />
<rect x="1022.00" y="447.50" width="8.00" height="31.00" fill="url(#g29)" />
<rect x="1121.00" y="447.50" width="12.00" height="31.00" fill="url(#g30)" />
<rect x="1022.00" y="475.50" width="111.00" height="3.00" fill="url(#g31)" />
<rect x="1038.00" y="453.00" width="25.00" height="20.00" fill="url(#g32)" />
<line x1="1041.00" y1="463.00" x2="1060.00" y2="463.00" stroke="#111" stroke-width="1.6" />
<line x1="1051.00" y1="455.00" x2="1051.00" y2="472.50" stroke="#111" stroke-width="1.6" />
<circle cx="1051" cy="463" r="2" fill="none" stroke="#111" stroke-width="1.2"/>
<rect x="1040.00" y="455.00" width="3.00" height="3.00" fill="#3cff3c" />
<rect x="1065.00" y="453.00" width="21.00" height="20.00" fill="url(#g33)" />
<circle cx="1077.5" cy="460.5" r="5" fill="#c8c8ff" stroke="#111" stroke-width="1.4"/>
<line x1="1075.00" y1="460.50" x2="1080.00" y2="460.50" stroke="#111" stroke-width="1.4" />
<line x1="1077.50" y1="458.00" x2="1077.50" y2="463.00" stroke="#111" stroke-width="1.4" />
<line x1="1068.00" y1="470.50" x2="1074.00" y2="464.50" stroke="#111" stroke-width="2.2" />
<polygon points="1078.00,469.50 1084.00,469.50 1081.00,472.50" fill="#111" />
<rect x="1067.00" y="455.00" width="3.00" height="3.00" fill="#3e7a3e" />
<rect x="1091.00" y="453.00" width="24.00" height="20.00" fill="url(#g34)" />
<path d="M1097,461.5 L1100,467.5 L1103,470.5 M1100,462.5 L1100,457.5 M1103,461.5 L1103,456.5 M1106,461.5 L1106,457 M1109,462.5 L1109,458.5 L1110,466.5 L1108,470.5" fill="none" stroke="#111" stroke-width="1.4"/>
<rect x="1093.00" y="455.00" width="3.00" height="3.00" fill="#3e7a3e" />
<svg x="469.5" y="49.5" width="551.0" height="371.5" viewBox="469.5 49.5 551.0 371.5" overflow="hidden">
<polyline points="581.0,418.6 590.0,400.3 599.0,402.6 607.9,394.2 616.9,394.2 625.9,393.2 634.9,386.9 643.9,380.5 652.8,374.4 661.8,371.7 670.8,359.2 679.8,356.7 688.8,353.0 697.7,342.5 706.7,339.2 715.7,332.1 724.7,325.4 733.7,321.7 742.6,305.4 751.6,296.7 760.6,286.3 769.6,280.0 778.6,273.7 787.5,263.3 796.5,249.4 805.5,235.3 814.5,238.3 823.5,236.6 832.4,223.2 841.4,205.0 850.4,188.0 859.4,180.7 868.4,174.1 877.3,165.4 886.3,156.4 895.3,145.9 904.3,141.8 913.3,127.9 922.2,136.9 931.2,113.1 940.2,106.5 949.2,108.2 958.2,100.5 967.1,84.0 976.1,89.1 985.1,84.5 994.1,84.5 1003.1,82.1 1012.0,68.0 1021.0,66.9" fill="none" stroke="#ff4848" stroke-width="1.1"/>
<polygon points="581.00,414.00 585.60,418.60 581.00,423.20 576.40,418.60" fill="#ff4646" />
<polygon points="589.98,395.70 594.58,400.30 589.98,404.90 585.38,400.30" fill="#ff4646" />
<polygon points="598.96,398.00 603.56,402.60 598.96,407.20 594.36,402.60" fill="#ff4646" />
<polygon points="607.94,389.60 612.54,394.20 607.94,398.80 603.34,394.20" fill="#ff4646" />
<polygon points="616.92,389.60 621.52,394.20 616.92,398.80 612.32,394.20" fill="#ff4646" />
<polygon points="625.90,388.60 630.50,393.20 625.90,397.80 621.30,393.20" fill="#ff4646" />
<polygon points="634.88,382.30 639.48,386.90 634.88,391.50 630.28,386.90" fill="#ff4646" />
<polygon points="643.86,375.90 648.46,380.50 643.86,385.10 639.26,380.50" fill="#ff4646" />
<polygon points="652.84,369.80 657.44,374.40 652.84,379.00 648.24,374.40" fill="#ff4646" />
<polygon points="661.82,367.10 666.42,371.70 661.82,376.30 657.22,371.70" fill="#ff4646" />
<polygon points="670.80,354.60 675.40,359.20 670.80,363.80 666.20,359.20" fill="#ff4646" />
<polygon points="679.78,352.10 684.38,356.70 679.78,361.30 675.18,356.70" fill="#ff4646" />
<polygon points="688.76,348.40 693.36,353.00 688.76,357.60 684.16,353.00" fill="#ff4646" />
<polygon points="697.74,337.90 702.34,342.50 697.74,347.10 693.14,342.50" fill="#ff4646" />
<polygon points="706.72,334.60 711.32,339.20 706.72,343.80 702.12,339.20" fill="#ff4646" />
<polygon points="715.70,327.50 720.30,332.10 715.70,336.70 711.10,332.10" fill="#ff4646" />
<polygon points="724.68,320.80 729.28,325.40 724.68,330.00 720.08,325.40" fill="#ff4646" />
<polygon points="733.66,317.10 738.26,321.70 733.66,326.30 729.06,321.70" fill="#ff4646" />
<polygon points="742.64,300.80 747.24,305.40 742.64,310.00 738.04,305.40" fill="#ff4646" />
<polygon points="751.62,292.10 756.22,296.70 751.62,301.30 747.02,296.70" fill="#ff4646" />
<polygon points="760.60,281.70 765.20,286.30 760.60,290.90 756.00,286.30" fill="#ff4646" />
<polygon points="769.58,275.40 774.18,280.00 769.58,284.60 764.98,280.00" fill="#ff4646" />
<polygon points="778.56,269.10 783.16,273.70 778.56,278.30 773.96,273.70" fill="#ff4646" />
<polygon points="787.54,258.70 792.14,263.30 787.54,267.90 782.94,263.30" fill="#ff4646" />
<polygon points="796.52,244.80 801.12,249.40 796.52,254.00 791.92,249.40" fill="#ff4646" />
<polygon points="805.50,230.70 810.10,235.30 805.50,239.90 800.90,235.30" fill="#ff4646" />
<polygon points="814.48,233.70 819.08,238.30 814.48,242.90 809.88,238.30" fill="#ff4646" />
<polygon points="823.46,232.00 828.06,236.60 823.46,241.20 818.86,236.60" fill="#ff4646" />
<polygon points="832.44,218.60 837.04,223.20 832.44,227.80 827.84,223.20" fill="#ff4646" />
<polygon points="841.42,200.40 846.02,205.00 841.42,209.60 836.82,205.00" fill="#ff4646" />
<polygon points="850.40,183.40 855.00,188.00 850.40,192.60 845.80,188.00" fill="#ff4646" />
<polygon points="859.38,176.10 863.98,180.70 859.38,185.30 854.78,180.70" fill="#ff4646" />
<polygon points="868.36,169.50 872.96,174.10 868.36,178.70 863.76,174.10" fill="#ff4646" />
<polygon points="877.34,160.80 881.94,165.40 877.34,170.00 872.74,165.40" fill="#ff4646" />
<polygon points="886.32,151.80 890.92,156.40 886.32,161.00 881.72,156.40" fill="#ff4646" />
<polygon points="895.30,141.30 899.90,145.90 895.30,150.50 890.70,145.90" fill="#ff4646" />
<polygon points="904.28,137.20 908.88,141.80 904.28,146.40 899.68,141.80" fill="#ff4646" />
<polygon points="913.26,123.30 917.86,127.90 913.26,132.50 908.66,127.90" fill="#ff4646" />
<polygon points="922.24,132.30 926.84,136.90 922.24,141.50 917.64,136.90" fill="#ff4646" />
<polygon points="931.22,108.50 935.82,113.10 931.22,117.70 926.62,113.10" fill="#ff4646" />
<polygon points="940.20,101.90 944.80,106.50 940.20,111.10 935.60,106.50" fill="#ff4646" />
<polygon points="949.18,103.60 953.78,108.20 949.18,112.80 944.58,108.20" fill="#ff4646" />
<polygon points="958.16,95.90 962.76,100.50 958.16,105.10 953.56,100.50" fill="#ff4646" />
<polygon points="967.14,79.40 971.74,84.00 967.14,88.60 962.54,84.00" fill="#ff4646" />
<polygon points="976.12,84.50 980.72,89.10 976.12,93.70 971.52,89.10" fill="#ff4646" />
<polygon points="985.10,79.90 989.70,84.50 985.10,89.10 980.50,84.50" fill="#ff4646" />
<polygon points="994.08,79.90 998.68,84.50 994.08,89.10 989.48,84.50" fill="#ff4646" />
<polygon points="1003.06,77.50 1007.66,82.10 1003.06,86.70 998.46,82.10" fill="#ff4646" />
<polygon points="1012.04,63.40 1016.64,68.00 1012.04,72.60 1007.44,68.00" fill="#ff4646" />
<polygon points="1021.02,62.30 1025.62,66.90 1021.02,71.50 1016.42,66.90" fill="#ff4646" />
<polyline points="581.0,411.7 590.0,410.7 599.0,409.7 607.9,408.0 616.9,405.9 625.9,404.4 634.9,401.9 643.9,399.4 652.8,397.1 661.8,394.6 670.8,391.1 679.8,386.9 688.8,383.6 697.7,379.6 706.7,375.9 715.7,371.1 724.7,364.4 733.7,359.8 742.6,354.4 751.6,348.2 760.6,342.1 769.6,335.7 778.6,329.0 787.5,322.0 796.5,314.7 805.5,307.1 814.5,299.2 823.5,291.0 832.4,282.5 841.4,273.7 850.4,265.0 859.4,256.5 868.4,248.0 877.3,239.0 886.3,228.0 895.3,217.8 904.3,208.1 913.3,197.7 922.2,188.0 931.2,177.8 940.2,166.6 949.2,156.4 958.2,146.6 967.1,135.7 976.1,124.3 985.1,113.1 994.1,100.5 1003.1,89.5 1012.0,78.1 1021.0,66.9" fill="none" stroke="#f0f0f0" stroke-width="1.1"/>
<rect x="577.40" y="408.10" width="7.20" height="7.20" fill="none" stroke="#ffffff" stroke-width="1.4"/>
<rect x="586.38" y="407.10" width="7.20" height="7.20" fill="none" stroke="#ffffff" stroke-width="1.4"/>
<rect x="595.36" y="406.10" width="7.20" height="7.20" fill="none" stroke="#ffffff" stroke-width="1.4"/>
<rect x="604.34" y="404.40" width="7.20" height="7.20" fill="none" stroke="#ffffff" stroke-width="1.4"/>
<rect x="613.32" y="402.30" width="7.20" height="7.20" fill="none" stroke="#ffffff" stroke-width="1.4"/>
<rect x="622.30" y="400.80" width="7.20" height="7.20" fill="none" stroke="#ffffff" stroke-width="1.4"/>
<rect x="631.28" y="398.30" width="7.20" height="7.20" fill="none" stroke="#ffffff" stroke-width="1.4"/>
<rect x="640.26" y="395.80" width="7.20" height="7.20" fill="none" stroke="#ffffff" stroke-width="1.4"/>
<rect x="649.24" y="393.50" width="7.20" height="7.20" fill="none" stroke="#ffffff" stroke-width="1.4"/>
<rect x="658.22" y="391.00" width="7.20" height="7.20" fill="none" stroke="#ffffff" stroke-width="1.4"/>
<rect x="667.20" y="387.50" width="7.20" height="7.20" fill="none" stroke="#ffffff" stroke-width="1.4"/>
<rect x="676.18" y="383.30" width="7.20" height="7.20" fill="none" stroke="#ffffff" stroke-width="1.4"/>
<rect x="685.16" y="380.00" width="7.20" height="7.20" fill="none" stroke="#ffffff" stroke-width="1.4"/>
<rect x="694.14" y="376.00" width="7.20" height="7.20" fill="none" stroke="#ffffff" stroke-width="1.4"/>
<rect x="703.12" y="372.30" width="7.20" height="7.20" fill="none" stroke="#ffffff" stroke-width="1.4"/>
<rect x="712.10" y="367.50" width="7.20" height="7.20" fill="none" stroke="#ffffff" stroke-width="1.4"/>
<rect x="721.08" y="360.80" width="7.20" height="7.20" fill="none" stroke="#ffffff" stroke-width="1.4"/>
<rect x="730.06" y="356.20" width="7.20" height="7.20" fill="none" stroke="#ffffff" stroke-width="1.4"/>
<rect x="739.04" y="350.80" width="7.20" height="7.20" fill="none" stroke="#ffffff" stroke-width="1.4"/>
<rect x="748.02" y="344.60" width="7.20" height="7.20" fill="none" stroke="#ffffff" stroke-width="1.4"/>
<rect x="757.00" y="338.50" width="7.20" height="7.20" fill="none" stroke="#ffffff" stroke-width="1.4"/>
<rect x="765.98" y="332.10" width="7.20" height="7.20" fill="none" stroke="#ffffff" stroke-width="1.4"/>
<rect x="774.96" y="325.40" width="7.20" height="7.20" fill="none" stroke="#ffffff" stroke-width="1.4"/>
<rect x="783.94" y="318.40" width="7.20" height="7.20" fill="none" stroke="#ffffff" stroke-width="1.4"/>
<rect x="792.92" y="311.10" width="7.20" height="7.20" fill="none" stroke="#ffffff" stroke-width="1.4"/>
<rect x="801.90" y="303.50" width="7.20" height="7.20" fill="none" stroke="#ffffff" stroke-width="1.4"/>
<rect x="810.88" y="295.60" width="7.20" height="7.20" fill="none" stroke="#ffffff" stroke-width="1.4"/>
<rect x="819.86" y="287.40" width="7.20" height="7.20" fill="none" stroke="#ffffff" stroke-width="1.4"/>
<rect x="828.84" y="278.90" width="7.20" height="7.20" fill="none" stroke="#ffffff" stroke-width="1.4"/>
<rect x="837.82" y="270.10" width="7.20" height="7.20" fill="none" stroke="#ffffff" stroke-width="1.4"/>
<rect x="846.80" y="261.40" width="7.20" height="7.20" fill="none" stroke="#ffffff" stroke-width="1.4"/>
<rect x="855.78" y="252.90" width="7.20" height="7.20" fill="none" stroke="#ffffff" stroke-width="1.4"/>
<rect x="864.76" y="244.40" width="7.20" height="7.20" fill="none" stroke="#ffffff" stroke-width="1.4"/>
<rect x="873.74" y="235.40" width="7.20" height="7.20" fill="none" stroke="#ffffff" stroke-width="1.4"/>
<rect x="882.72" y="224.40" width="7.20" height="7.20" fill="none" stroke="#ffffff" stroke-width="1.4"/>
<rect x="891.70" y="214.20" width="7.20" height="7.20" fill="none" stroke="#ffffff" stroke-width="1.4"/>
<rect x="900.68" y="204.50" width="7.20" height="7.20" fill="none" stroke="#ffffff" stroke-width="1.4"/>
<rect x="909.66" y="194.10" width="7.20" height="7.20" fill="none" stroke="#ffffff" stroke-width="1.4"/>
<rect x="918.64" y="184.40" width="7.20" height="7.20" fill="none" stroke="#ffffff" stroke-width="1.4"/>
<rect x="927.62" y="174.20" width="7.20" height="7.20" fill="none" stroke="#ffffff" stroke-width="1.4"/>
<rect x="936.60" y="163.00" width="7.20" height="7.20" fill="none" stroke="#ffffff" stroke-width="1.4"/>
<rect x="945.58" y="152.80" width="7.20" height="7.20" fill="none" stroke="#ffffff" stroke-width="1.4"/>
<rect x="954.56" y="143.00" width="7.20" height="7.20" fill="none" stroke="#ffffff" stroke-width="1.4"/>
<rect x="963.54" y="132.10" width="7.20" height="7.20" fill="none" stroke="#ffffff" stroke-width="1.4"/>
<rect x="972.52" y="120.70" width="7.20" height="7.20" fill="none" stroke="#ffffff" stroke-width="1.4"/>
<rect x="981.50" y="109.50" width="7.20" height="7.20" fill="none" stroke="#ffffff" stroke-width="1.4"/>
<rect x="990.48" y="96.90" width="7.20" height="7.20" fill="none" stroke="#ffffff" stroke-width="1.4"/>
<rect x="999.46" y="85.90" width="7.20" height="7.20" fill="none" stroke="#ffffff" stroke-width="1.4"/>
<rect x="1008.44" y="74.50" width="7.20" height="7.20" fill="none" stroke="#ffffff" stroke-width="1.4"/>
<rect x="1017.42" y="63.30" width="7.20" height="7.20" fill="none" stroke="#ffffff" stroke-width="1.4"/>
</svg>
<rect x="1220.50" y="49.00" width="589.00" height="372.50" fill="#000" />
<line x1="1228.50" y1="50.00" x2="1228.50" y2="421.00" stroke="#003800" stroke-width="1" />
<line x1="1234.50" y1="50.00" x2="1234.50" y2="421.00" stroke="#003800" stroke-width="1" />
<line x1="1241.50" y1="50.00" x2="1241.50" y2="421.00" stroke="#003800" stroke-width="1" />
<line x1="1248.50" y1="50.00" x2="1248.50" y2="421.00" stroke="#003800" stroke-width="1" />
<line x1="1254.50" y1="50.00" x2="1254.50" y2="421.00" stroke="#003800" stroke-width="1" />
<line x1="1261.50" y1="50.00" x2="1261.50" y2="421.00" stroke="#003800" stroke-width="1" />
<line x1="1267.50" y1="50.00" x2="1267.50" y2="421.00" stroke="#003800" stroke-width="1" />
<line x1="1274.50" y1="50.00" x2="1274.50" y2="421.00" stroke="#003800" stroke-width="1" />
<line x1="1280.50" y1="50.00" x2="1280.50" y2="421.00" stroke="#003800" stroke-width="1" />
<line x1="1287.50" y1="50.00" x2="1287.50" y2="421.00" stroke="#0a500a" stroke-width="1" />
<line x1="1293.50" y1="50.00" x2="1293.50" y2="421.00" stroke="#003800" stroke-width="1" />
<line x1="1300.50" y1="50.00" x2="1300.50" y2="421.00" stroke="#003800" stroke-width="1" />
<line x1="1306.50" y1="50.00" x2="1306.50" y2="421.00" stroke="#003800" stroke-width="1" />
<line x1="1313.50" y1="50.00" x2="1313.50" y2="421.00" stroke="#003800" stroke-width="1" />
<line x1="1319.50" y1="50.00" x2="1319.50" y2="421.00" stroke="#003800" stroke-width="1" />
<line x1="1326.50" y1="50.00" x2="1326.50" y2="421.00" stroke="#003800" stroke-width="1" />
<line x1="1332.50" y1="50.00" x2="1332.50" y2="421.00" stroke="#003800" stroke-width="1" />
<line x1="1339.50" y1="50.00" x2="1339.50" y2="421.00" stroke="#003800" stroke-width="1" />
<line x1="1345.50" y1="50.00" x2="1345.50" y2="421.00" stroke="#003800" stroke-width="1" />
<line x1="1352.50" y1="50.00" x2="1352.50" y2="421.00" stroke="#0a500a" stroke-width="1" />
<line x1="1358.50" y1="50.00" x2="1358.50" y2="421.00" stroke="#003800" stroke-width="1" />
<line x1="1365.50" y1="50.00" x2="1365.50" y2="421.00" stroke="#003800" stroke-width="1" />
<line x1="1372.50" y1="50.00" x2="1372.50" y2="421.00" stroke="#003800" stroke-width="1" />
<line x1="1378.50" y1="50.00" x2="1378.50" y2="421.00" stroke="#003800" stroke-width="1" />
<line x1="1385.50" y1="50.00" x2="1385.50" y2="421.00" stroke="#003800" stroke-width="1" />
<line x1="1391.50" y1="50.00" x2="1391.50" y2="421.00" stroke="#003800" stroke-width="1" />
<line x1="1398.50" y1="50.00" x2="1398.50" y2="421.00" stroke="#003800" stroke-width="1" />
<line x1="1404.50" y1="50.00" x2="1404.50" y2="421.00" stroke="#003800" stroke-width="1" />
<line x1="1411.50" y1="50.00" x2="1411.50" y2="421.00" stroke="#003800" stroke-width="1" />
<line x1="1417.50" y1="50.00" x2="1417.50" y2="421.00" stroke="#0a500a" stroke-width="1" />
<line x1="1424.50" y1="50.00" x2="1424.50" y2="421.00" stroke="#003800" stroke-width="1" />
<line x1="1430.50" y1="50.00" x2="1430.50" y2="421.00" stroke="#003800" stroke-width="1" />
<line x1="1437.50" y1="50.00" x2="1437.50" y2="421.00" stroke="#003800" stroke-width="1" />
<line x1="1443.50" y1="50.00" x2="1443.50" y2="421.00" stroke="#003800" stroke-width="1" />
<line x1="1450.50" y1="50.00" x2="1450.50" y2="421.00" stroke="#003800" stroke-width="1" />
<line x1="1456.50" y1="50.00" x2="1456.50" y2="421.00" stroke="#003800" stroke-width="1" />
<line x1="1463.50" y1="50.00" x2="1463.50" y2="421.00" stroke="#003800" stroke-width="1" />
<line x1="1469.50" y1="50.00" x2="1469.50" y2="421.00" stroke="#003800" stroke-width="1" />
<line x1="1476.50" y1="50.00" x2="1476.50" y2="421.00" stroke="#003800" stroke-width="1" />
<line x1="1482.50" y1="50.00" x2="1482.50" y2="421.00" stroke="#0a500a" stroke-width="1" />
<line x1="1489.50" y1="50.00" x2="1489.50" y2="421.00" stroke="#003800" stroke-width="1" />
<line x1="1496.50" y1="50.00" x2="1496.50" y2="421.00" stroke="#003800" stroke-width="1" />
<line x1="1502.50" y1="50.00" x2="1502.50" y2="421.00" stroke="#003800" stroke-width="1" />
<line x1="1509.50" y1="50.00" x2="1509.50" y2="421.00" stroke="#003800" stroke-width="1" />
<line x1="1515.50" y1="50.00" x2="1515.50" y2="421.00" stroke="#003800" stroke-width="1" />
<line x1="1522.50" y1="50.00" x2="1522.50" y2="421.00" stroke="#003800" stroke-width="1" />
<line x1="1528.50" y1="50.00" x2="1528.50" y2="421.00" stroke="#003800" stroke-width="1" />
<line x1="1535.50" y1="50.00" x2="1535.50" y2="421.00" stroke="#003800" stroke-width="1" />
<line x1="1541.50" y1="50.00" x2="1541.50" y2="421.00" stroke="#003800" stroke-width="1" />
<line x1="1548.50" y1="50.00" x2="1548.50" y2="421.00" stroke="#0a500a" stroke-width="1" />
<line x1="1554.50" y1="50.00" x2="1554.50" y2="421.00" stroke="#003800" stroke-width="1" />
<line x1="1561.50" y1="50.00" x2="1561.50" y2="421.00" stroke="#003800" stroke-width="1" />
<line x1="1567.50" y1="50.00" x2="1567.50" y2="421.00" stroke="#003800" stroke-width="1" />
<line x1="1574.50" y1="50.00" x2="1574.50" y2="421.00" stroke="#003800" stroke-width="1" />
<line x1="1580.50" y1="50.00" x2="1580.50" y2="421.00" stroke="#003800" stroke-width="1" />
<line x1="1587.50" y1="50.00" x2="1587.50" y2="421.00" stroke="#003800" stroke-width="1" />
<line x1="1593.50" y1="50.00" x2="1593.50" y2="421.00" stroke="#003800" stroke-width="1" />
<line x1="1600.50" y1="50.00" x2="1600.50" y2="421.00" stroke="#003800" stroke-width="1" />
<line x1="1606.50" y1="50.00" x2="1606.50" y2="421.00" stroke="#003800" stroke-width="1" />
<line x1="1613.50" y1="50.00" x2="1613.50" y2="421.00" stroke="#0a500a" stroke-width="1" />
<line x1="1620.50" y1="50.00" x2="1620.50" y2="421.00" stroke="#003800" stroke-width="1" />
<line x1="1626.50" y1="50.00" x2="1626.50" y2="421.00" stroke="#003800" stroke-width="1" />
<line x1="1633.50" y1="50.00" x2="1633.50" y2="421.00" stroke="#003800" stroke-width="1" />
<line x1="1639.50" y1="50.00" x2="1639.50" y2="421.00" stroke="#003800" stroke-width="1" />
<line x1="1646.50" y1="50.00" x2="1646.50" y2="421.00" stroke="#003800" stroke-width="1" />
<line x1="1652.50" y1="50.00" x2="1652.50" y2="421.00" stroke="#003800" stroke-width="1" />
<line x1="1659.50" y1="50.00" x2="1659.50" y2="421.00" stroke="#003800" stroke-width="1" />
<line x1="1665.50" y1="50.00" x2="1665.50" y2="421.00" stroke="#003800" stroke-width="1" />
<line x1="1672.50" y1="50.00" x2="1672.50" y2="421.00" stroke="#003800" stroke-width="1" />
<line x1="1678.50" y1="50.00" x2="1678.50" y2="421.00" stroke="#0a500a" stroke-width="1" />
<line x1="1685.50" y1="50.00" x2="1685.50" y2="421.00" stroke="#003800" stroke-width="1" />
<line x1="1691.50" y1="50.00" x2="1691.50" y2="421.00" stroke="#003800" stroke-width="1" />
<line x1="1698.50" y1="50.00" x2="1698.50" y2="421.00" stroke="#003800" stroke-width="1" />
<line x1="1704.50" y1="50.00" x2="1704.50" y2="421.00" stroke="#003800" stroke-width="1" />
<line x1="1711.50" y1="50.00" x2="1711.50" y2="421.00" stroke="#003800" stroke-width="1" />
<line x1="1717.50" y1="50.00" x2="1717.50" y2="421.00" stroke="#003800" stroke-width="1" />
<line x1="1724.50" y1="50.00" x2="1724.50" y2="421.00" stroke="#003800" stroke-width="1" />
<line x1="1731.50" y1="50.00" x2="1731.50" y2="421.00" stroke="#003800" stroke-width="1" />
<line x1="1737.50" y1="50.00" x2="1737.50" y2="421.00" stroke="#003800" stroke-width="1" />
<line x1="1744.50" y1="50.00" x2="1744.50" y2="421.00" stroke="#0a500a" stroke-width="1" />
<line x1="1750.50" y1="50.00" x2="1750.50" y2="421.00" stroke="#003800" stroke-width="1" />
<line x1="1757.50" y1="50.00" x2="1757.50" y2="421.00" stroke="#003800" stroke-width="1" />
<line x1="1763.50" y1="50.00" x2="1763.50" y2="421.00" stroke="#003800" stroke-width="1" />
<line x1="1770.50" y1="50.00" x2="1770.50" y2="421.00" stroke="#003800" stroke-width="1" />
<line x1="1776.50" y1="50.00" x2="1776.50" y2="421.00" stroke="#003800" stroke-width="1" />
<line x1="1783.50" y1="50.00" x2="1783.50" y2="421.00" stroke="#003800" stroke-width="1" />
<line x1="1789.50" y1="50.00" x2="1789.50" y2="421.00" stroke="#003800" stroke-width="1" />
<line x1="1796.50" y1="50.00" x2="1796.50" y2="421.00" stroke="#003800" stroke-width="1" />
<line x1="1802.50" y1="50.00" x2="1802.50" y2="421.00" stroke="#003800" stroke-width="1" />
<line x1="1221.00" y1="415.50" x2="1809.50" y2="415.50" stroke="#003800" stroke-width="1" />
<line x1="1221.00" y1="409.50" x2="1809.50" y2="409.50" stroke="#003800" stroke-width="1" />
<line x1="1221.00" y1="403.50" x2="1809.50" y2="403.50" stroke="#003800" stroke-width="1" />
<line x1="1221.00" y1="397.50" x2="1809.50" y2="397.50" stroke="#003800" stroke-width="1" />
<line x1="1221.00" y1="392.50" x2="1809.50" y2="392.50" stroke="#0a500a" stroke-width="1" />
<line x1="1221.00" y1="386.50" x2="1809.50" y2="386.50" stroke="#003800" stroke-width="1" />
<line x1="1221.00" y1="380.50" x2="1809.50" y2="380.50" stroke="#003800" stroke-width="1" />
<line x1="1221.00" y1="375.50" x2="1809.50" y2="375.50" stroke="#003800" stroke-width="1" />
<line x1="1221.00" y1="369.50" x2="1809.50" y2="369.50" stroke="#003800" stroke-width="1" />
<line x1="1221.00" y1="363.50" x2="1809.50" y2="363.50" stroke="#0a500a" stroke-width="1" />
<line x1="1221.00" y1="357.50" x2="1809.50" y2="357.50" stroke="#003800" stroke-width="1" />
<line x1="1221.00" y1="352.50" x2="1809.50" y2="352.50" stroke="#003800" stroke-width="1" />
<line x1="1221.00" y1="346.50" x2="1809.50" y2="346.50" stroke="#003800" stroke-width="1" />
<line x1="1221.00" y1="340.50" x2="1809.50" y2="340.50" stroke="#003800" stroke-width="1" />
<line x1="1221.00" y1="335.50" x2="1809.50" y2="335.50" stroke="#0a500a" stroke-width="1" />
<line x1="1221.00" y1="329.50" x2="1809.50" y2="329.50" stroke="#003800" stroke-width="1" />
<line x1="1221.00" y1="323.50" x2="1809.50" y2="323.50" stroke="#003800" stroke-width="1" />
<line x1="1221.00" y1="317.50" x2="1809.50" y2="317.50" stroke="#003800" stroke-width="1" />
<line x1="1221.00" y1="312.50" x2="1809.50" y2="312.50" stroke="#003800" stroke-width="1" />
<line x1="1221.00" y1="306.50" x2="1809.50" y2="306.50" stroke="#0a500a" stroke-width="1" />
<line x1="1221.00" y1="300.50" x2="1809.50" y2="300.50" stroke="#003800" stroke-width="1" />
<line x1="1221.00" y1="294.50" x2="1809.50" y2="294.50" stroke="#003800" stroke-width="1" />
<line x1="1221.00" y1="289.50" x2="1809.50" y2="289.50" stroke="#003800" stroke-width="1" />
<line x1="1221.00" y1="283.50" x2="1809.50" y2="283.50" stroke="#003800" stroke-width="1" />
<line x1="1221.00" y1="277.50" x2="1809.50" y2="277.50" stroke="#0a500a" stroke-width="1" />
<line x1="1221.00" y1="272.50" x2="1809.50" y2="272.50" stroke="#003800" stroke-width="1" />
<line x1="1221.00" y1="266.50" x2="1809.50" y2="266.50" stroke="#003800" stroke-width="1" />
<line x1="1221.00" y1="260.50" x2="1809.50" y2="260.50" stroke="#003800" stroke-width="1" />
<line x1="1221.00" y1="254.50" x2="1809.50" y2="254.50" stroke="#003800" stroke-width="1" />
<line x1="1221.00" y1="249.50" x2="1809.50" y2="249.50" stroke="#0a500a" stroke-width="1" />
<line x1="1221.00" y1="243.50" x2="1809.50" y2="243.50" stroke="#003800" stroke-width="1" />
<line x1="1221.00" y1="237.50" x2="1809.50" y2="237.50" stroke="#003800" stroke-width="1" />
<line x1="1221.00" y1="232.50" x2="1809.50" y2="232.50" stroke="#003800" stroke-width="1" />
<line x1="1221.00" y1="226.50" x2="1809.50" y2="226.50" stroke="#003800" stroke-width="1" />
<line x1="1221.00" y1="220.50" x2="1809.50" y2="220.50" stroke="#0a500a" stroke-width="1" />
<line x1="1221.00" y1="214.50" x2="1809.50" y2="214.50" stroke="#003800" stroke-width="1" />
<line x1="1221.00" y1="209.50" x2="1809.50" y2="209.50" stroke="#003800" stroke-width="1" />
<line x1="1221.00" y1="203.50" x2="1809.50" y2="203.50" stroke="#003800" stroke-width="1" />
<line x1="1221.00" y1="197.50" x2="1809.50" y2="197.50" stroke="#003800" stroke-width="1" />
<line x1="1221.00" y1="192.50" x2="1809.50" y2="192.50" stroke="#0a500a" stroke-width="1" />
<line x1="1221.00" y1="186.50" x2="1809.50" y2="186.50" stroke="#003800" stroke-width="1" />
<line x1="1221.00" y1="180.50" x2="1809.50" y2="180.50" stroke="#003800" stroke-width="1" />
<line x1="1221.00" y1="174.50" x2="1809.50" y2="174.50" stroke="#003800" stroke-width="1" />
<line x1="1221.00" y1="169.50" x2="1809.50" y2="169.50" stroke="#003800" stroke-width="1" />
<line x1="1221.00" y1="163.50" x2="1809.50" y2="163.50" stroke="#0a500a" stroke-width="1" />
<line x1="1221.00" y1="157.50" x2="1809.50" y2="157.50" stroke="#003800" stroke-width="1" />
<line x1="1221.00" y1="151.50" x2="1809.50" y2="151.50" stroke="#003800" stroke-width="1" />
<line x1="1221.00" y1="146.50" x2="1809.50" y2="146.50" stroke="#003800" stroke-width="1" />
<line x1="1221.00" y1="140.50" x2="1809.50" y2="140.50" stroke="#003800" stroke-width="1" />
<line x1="1221.00" y1="134.50" x2="1809.50" y2="134.50" stroke="#0a500a" stroke-width="1" />
<line x1="1221.00" y1="129.50" x2="1809.50" y2="129.50" stroke="#003800" stroke-width="1" />
<line x1="1221.00" y1="123.50" x2="1809.50" y2="123.50" stroke="#003800" stroke-width="1" />
<line x1="1221.00" y1="117.50" x2="1809.50" y2="117.50" stroke="#003800" stroke-width="1" />
<line x1="1221.00" y1="111.50" x2="1809.50" y2="111.50" stroke="#003800" stroke-width="1" />
<line x1="1221.00" y1="106.50" x2="1809.50" y2="106.50" stroke="#0a500a" stroke-width="1" />
<line x1="1221.00" y1="100.50" x2="1809.50" y2="100.50" stroke="#003800" stroke-width="1" />
<line x1="1221.00" y1="94.50" x2="1809.50" y2="94.50" stroke="#003800" stroke-width="1" />
<line x1="1221.00" y1="89.50" x2="1809.50" y2="89.50" stroke="#003800" stroke-width="1" />
<line x1="1221.00" y1="83.50" x2="1809.50" y2="83.50" stroke="#003800" stroke-width="1" />
<line x1="1221.00" y1="77.50" x2="1809.50" y2="77.50" stroke="#0a500a" stroke-width="1" />
<line x1="1221.00" y1="71.50" x2="1809.50" y2="71.50" stroke="#003800" stroke-width="1" />
<line x1="1221.00" y1="66.50" x2="1809.50" y2="66.50" stroke="#003800" stroke-width="1" />
<line x1="1221.00" y1="60.50" x2="1809.50" y2="60.50" stroke="#003800" stroke-width="1" />
<line x1="1221.00" y1="54.50" x2="1809.50" y2="54.50" stroke="#003800" stroke-width="1" />
<line x1="1220.50" y1="421.00" x2="1809.50" y2="421.00" stroke="#e6e6e6" stroke-width="1.2" />
<line x1="1221.00" y1="49.00" x2="1221.00" y2="421.50" stroke="#3a3a3a" stroke-width="1" />
<line x1="1220.50" y1="49.50" x2="1809.50" y2="49.50" stroke="#3a3a3a" stroke-width="1" />
<line x1="1212.00" y1="420.50" x2="1218.00" y2="420.50" stroke="#222" stroke-width="1.2" />
<line x1="1212.00" y1="392.50" x2="1218.00" y2="392.50" stroke="#222" stroke-width="1.2" />
<line x1="1212.00" y1="363.50" x2="1218.00" y2="363.50" stroke="#222" stroke-width="1.2" />
<line x1="1212.00" y1="335.50" x2="1218.00" y2="335.50" stroke="#222" stroke-width="1.2" />
<line x1="1212.00" y1="306.50" x2="1218.00" y2="306.50" stroke="#222" stroke-width="1.2" />
<line x1="1212.00" y1="277.50" x2="1218.00" y2="277.50" stroke="#222" stroke-width="1.2" />
<line x1="1212.00" y1="249.50" x2="1218.00" y2="249.50" stroke="#222" stroke-width="1.2" />
<line x1="1212.00" y1="220.50" x2="1218.00" y2="220.50" stroke="#222" stroke-width="1.2" />
<line x1="1212.00" y1="192.50" x2="1218.00" y2="192.50" stroke="#222" stroke-width="1.2" />
<line x1="1212.00" y1="163.50" x2="1218.00" y2="163.50" stroke="#222" stroke-width="1.2" />
<line x1="1212.00" y1="134.50" x2="1218.00" y2="134.50" stroke="#222" stroke-width="1.2" />
<line x1="1212.00" y1="106.50" x2="1218.00" y2="106.50" stroke="#222" stroke-width="1.2" />
<line x1="1212.00" y1="77.50" x2="1218.00" y2="77.50" stroke="#222" stroke-width="1.2" />
<line x1="1212.00" y1="49.50" x2="1218.00" y2="49.50" stroke="#222" stroke-width="1.2" />
<line x1="1221.50" y1="424.50" x2="1221.50" y2="430.00" stroke="#222" stroke-width="1.2" />
<line x1="1287.50" y1="424.50" x2="1287.50" y2="430.00" stroke="#222" stroke-width="1.2" />
<line x1="1352.50" y1="424.50" x2="1352.50" y2="430.00" stroke="#222" stroke-width="1.2" />
<line x1="1417.50" y1="424.50" x2="1417.50" y2="430.00" stroke="#222" stroke-width="1.2" />
<line x1="1482.50" y1="424.50" x2="1482.50" y2="430.00" stroke="#222" stroke-width="1.2" />
<line x1="1548.50" y1="424.50" x2="1548.50" y2="430.00" stroke="#222" stroke-width="1.2" />
<line x1="1613.50" y1="424.50" x2="1613.50" y2="430.00" stroke="#222" stroke-width="1.2" />
<line x1="1678.50" y1="424.50" x2="1678.50" y2="430.00" stroke="#222" stroke-width="1.2" />
<line x1="1744.50" y1="424.50" x2="1744.50" y2="430.00" stroke="#222" stroke-width="1.2" />
<line x1="1809.50" y1="424.50" x2="1809.50" y2="430.00" stroke="#222" stroke-width="1.2" />
<line x1="1811.00" y1="421.50" x2="1818.00" y2="421.50" stroke="#c8412a" stroke-width="1.2" />
<line x1="1811.00" y1="414.50" x2="1815.00" y2="414.50" stroke="#c8412a" stroke-width="1.2" />
<line x1="1811.00" y1="407.50" x2="1815.00" y2="407.50" stroke="#c8412a" stroke-width="1.2" />
<line x1="1811.00" y1="400.50" x2="1815.00" y2="400.50" stroke="#c8412a" stroke-width="1.2" />
<line x1="1811.00" y1="394.50" x2="1815.00" y2="394.50" stroke="#c8412a" stroke-width="1.2" />
<line x1="1811.00" y1="387.50" x2="1818.00" y2="387.50" stroke="#c8412a" stroke-width="1.2" />
<line x1="1811.00" y1="380.50" x2="1815.00" y2="380.50" stroke="#c8412a" stroke-width="1.2" />
<line x1="1811.00" y1="373.50" x2="1815.00" y2="373.50" stroke="#c8412a" stroke-width="1.2" />
<line x1="1811.00" y1="367.50" x2="1815.00" y2="367.50" stroke="#c8412a" stroke-width="1.2" />
<line x1="1811.00" y1="360.50" x2="1815.00" y2="360.50" stroke="#c8412a" stroke-width="1.2" />
<line x1="1811.00" y1="353.50" x2="1818.00" y2="353.50" stroke="#c8412a" stroke-width="1.2" />
<line x1="1811.00" y1="346.50" x2="1815.00" y2="346.50" stroke="#c8412a" stroke-width="1.2" />
<line x1="1811.00" y1="340.50" x2="1815.00" y2="340.50" stroke="#c8412a" stroke-width="1.2" />
<line x1="1811.00" y1="333.50" x2="1815.00" y2="333.50" stroke="#c8412a" stroke-width="1.2" />
<line x1="1811.00" y1="326.50" x2="1815.00" y2="326.50" stroke="#c8412a" stroke-width="1.2" />
<line x1="1811.00" y1="319.50" x2="1818.00" y2="319.50" stroke="#c8412a" stroke-width="1.2" />
<line x1="1811.00" y1="313.50" x2="1815.00" y2="313.50" stroke="#c8412a" stroke-width="1.2" />
<line x1="1811.00" y1="306.50" x2="1815.00" y2="306.50" stroke="#c8412a" stroke-width="1.2" />
<line x1="1811.00" y1="299.50" x2="1815.00" y2="299.50" stroke="#c8412a" stroke-width="1.2" />
<line x1="1811.00" y1="292.50" x2="1815.00" y2="292.50" stroke="#c8412a" stroke-width="1.2" />
<line x1="1811.00" y1="286.50" x2="1818.00" y2="286.50" stroke="#c8412a" stroke-width="1.2" />
<line x1="1811.00" y1="279.50" x2="1815.00" y2="279.50" stroke="#c8412a" stroke-width="1.2" />
<line x1="1811.00" y1="272.50" x2="1815.00" y2="272.50" stroke="#c8412a" stroke-width="1.2" />
<line x1="1811.00" y1="265.50" x2="1815.00" y2="265.50" stroke="#c8412a" stroke-width="1.2" />
<line x1="1811.00" y1="259.50" x2="1815.00" y2="259.50" stroke="#c8412a" stroke-width="1.2" />
<line x1="1811.00" y1="252.50" x2="1818.00" y2="252.50" stroke="#c8412a" stroke-width="1.2" />
<line x1="1811.00" y1="245.50" x2="1815.00" y2="245.50" stroke="#c8412a" stroke-width="1.2" />
<line x1="1811.00" y1="238.50" x2="1815.00" y2="238.50" stroke="#c8412a" stroke-width="1.2" />
<line x1="1811.00" y1="232.50" x2="1815.00" y2="232.50" stroke="#c8412a" stroke-width="1.2" />
<line x1="1811.00" y1="225.50" x2="1815.00" y2="225.50" stroke="#c8412a" stroke-width="1.2" />
<line x1="1811.00" y1="218.50" x2="1818.00" y2="218.50" stroke="#c8412a" stroke-width="1.2" />
<line x1="1811.00" y1="212.50" x2="1815.00" y2="212.50" stroke="#c8412a" stroke-width="1.2" />
<line x1="1811.00" y1="205.50" x2="1815.00" y2="205.50" stroke="#c8412a" stroke-width="1.2" />
<line x1="1811.00" y1="198.50" x2="1815.00" y2="198.50" stroke="#c8412a" stroke-width="1.2" />
<line x1="1811.00" y1="191.50" x2="1815.00" y2="191.50" stroke="#c8412a" stroke-width="1.2" />
<line x1="1811.00" y1="185.50" x2="1818.00" y2="185.50" stroke="#c8412a" stroke-width="1.2" />
<line x1="1811.00" y1="178.50" x2="1815.00" y2="178.50" stroke="#c8412a" stroke-width="1.2" />
<line x1="1811.00" y1="171.50" x2="1815.00" y2="171.50" stroke="#c8412a" stroke-width="1.2" />
<line x1="1811.00" y1="164.50" x2="1815.00" y2="164.50" stroke="#c8412a" stroke-width="1.2" />
<line x1="1811.00" y1="158.50" x2="1815.00" y2="158.50" stroke="#c8412a" stroke-width="1.2" />
<line x1="1811.00" y1="151.50" x2="1818.00" y2="151.50" stroke="#c8412a" stroke-width="1.2" />
<line x1="1811.00" y1="144.50" x2="1815.00" y2="144.50" stroke="#c8412a" stroke-width="1.2" />
<line x1="1811.00" y1="137.50" x2="1815.00" y2="137.50" stroke="#c8412a" stroke-width="1.2" />
<line x1="1811.00" y1="131.50" x2="1815.00" y2="131.50" stroke="#c8412a" stroke-width="1.2" />
<line x1="1811.00" y1="124.50" x2="1815.00" y2="124.50" stroke="#c8412a" stroke-width="1.2" />
<line x1="1811.00" y1="117.50" x2="1818.00" y2="117.50" stroke="#c8412a" stroke-width="1.2" />
<line x1="1811.00" y1="110.50" x2="1815.00" y2="110.50" stroke="#c8412a" stroke-width="1.2" />
<line x1="1811.00" y1="104.50" x2="1815.00" y2="104.50" stroke="#c8412a" stroke-width="1.2" />
<line x1="1811.00" y1="97.50" x2="1815.00" y2="97.50" stroke="#c8412a" stroke-width="1.2" />
<line x1="1811.00" y1="90.50" x2="1815.00" y2="90.50" stroke="#c8412a" stroke-width="1.2" />
<line x1="1811.00" y1="83.50" x2="1818.00" y2="83.50" stroke="#c8412a" stroke-width="1.2" />
<line x1="1811.00" y1="77.50" x2="1815.00" y2="77.50" stroke="#c8412a" stroke-width="1.2" />
<line x1="1811.00" y1="70.50" x2="1815.00" y2="70.50" stroke="#c8412a" stroke-width="1.2" />
<line x1="1811.00" y1="63.50" x2="1815.00" y2="63.50" stroke="#c8412a" stroke-width="1.2" />
<line x1="1811.00" y1="56.50" x2="1815.00" y2="56.50" stroke="#c8412a" stroke-width="1.2" />
<line x1="1811.00" y1="50.50" x2="1818.00" y2="50.50" stroke="#c8412a" stroke-width="1.2" />
<rect x="1800.00" y="448.50" width="111.00" height="31.00" fill="#ddd5b6" />
<rect x="1800.00" y="448.50" width="111.00" height="3.00" fill="#efe6c4" />
<rect x="1800.00" y="448.50" width="8.00" height="31.00" fill="url(#g35)" />
<rect x="1899.00" y="448.50" width="12.00" height="31.00" fill="url(#g36)" />
<rect x="1800.00" y="476.50" width="111.00" height="3.00" fill="url(#g37)" />
<rect x="1816.00" y="454.00" width="25.00" height="20.00" fill="url(#g38)" />
<line x1="1819.00" y1="464.00" x2="1838.00" y2="464.00" stroke="#111" stroke-width="1.6" />
<line x1="1829.00" y1="456.00" x2="1829.00" y2="473.50" stroke="#111" stroke-width="1.6" />
<circle cx="1829" cy="464" r="2" fill="none" stroke="#111" stroke-width="1.2"/>
<rect x="1818.00" y="456.00" width="3.00" height="3.00" fill="#3cff3c" />
<rect x="1843.00" y="454.00" width="21.00" height="20.00" fill="url(#g39)" />
<circle cx="1855.5" cy="461.5" r="5" fill="#c8c8ff" stroke="#111" stroke-width="1.4"/>
<line x1="1853.00" y1="461.50" x2="1858.00" y2="461.50" stroke="#111" stroke-width="1.4" />
<line x1="1855.50" y1="459.00" x2="1855.50" y2="464.00" stroke="#111" stroke-width="1.4" />
<line x1="1846.00" y1="471.50" x2="1852.00" y2="465.50" stroke="#111" stroke-width="2.2" />
<polygon points="1856.00,470.50 1862.00,470.50 1859.00,473.50" fill="#111" />
<rect x="1845.00" y="456.00" width="3.00" height="3.00" fill="#3e7a3e" />
<rect x="1869.00" y="454.00" width="24.00" height="20.00" fill="url(#g40)" />
<path d="M1875,462.5 L1878,468.5 L1881,471.5 M1878,463.5 L1878,458.5 M1881,462.5 L1881,457.5 M1884,462.5 L1884,458 M1887,463.5 L1887,459.5 L1888,467.5 L1886,471.5" fill="none" stroke="#111" stroke-width="1.4"/>
<rect x="1871.00" y="456.00" width="3.00" height="3.00" fill="#3e7a3e" />
<svg x="1220.5" y="49" width="589.0" height="372.5" viewBox="1220.5 49 589.0 372.5" overflow="hidden">
<polyline points="1287.2,420.0 1297.9,404.6 1308.5,402.6 1319.2,399.9 1329.8,396.1 1340.5,392.6 1351.2,388.4 1361.8,384.8 1372.5,380.0 1383.1,373.8 1393.8,367.5 1404.5,361.3 1415.1,355.0 1425.8,348.8 1436.4,340.0 1447.1,332.5 1457.8,326.3 1468.4,317.5 1479.1,306.0 1489.7,297.7 1500.4,288.8 1511.1,286.3 1521.7,271.8 1532.4,270.1 1543.0,256.0 1553.7,239.5 1564.4,237.0 1575.0,231.2 1585.7,220.8 1596.3,205.0 1607.0,191.1 1617.7,181.2 1628.3,172.9 1639.0,164.9 1649.6,153.9 1660.3,145.4 1671.0,139.8 1681.6,132.6 1692.3,124.8 1702.9,117.0 1713.6,109.7 1724.3,103.4 1734.9,97.6 1745.6,92.2 1756.2,87.6 1766.9,81.0 1777.6,76.2 1788.2,72.5 1798.9,67.7 1809.5,65.2" fill="none" stroke="#ff1010" stroke-width="1.2"/>
<rect x="1283.60" y="416.40" width="7.20" height="7.20" fill="#ff0a0a" />
<rect x="1294.26" y="401.00" width="7.20" height="7.20" fill="#ff0a0a" />
<rect x="1304.92" y="399.00" width="7.20" height="7.20" fill="#ff0a0a" />
<rect x="1315.58" y="396.30" width="7.20" height="7.20" fill="#ff0a0a" />
<rect x="1326.24" y="392.50" width="7.20" height="7.20" fill="#ff0a0a" />
<rect x="1336.90" y="389.00" width="7.20" height="7.20" fill="#ff0a0a" />
<rect x="1347.56" y="384.80" width="7.20" height="7.20" fill="#ff0a0a" />
<rect x="1358.22" y="381.20" width="7.20" height="7.20" fill="#ff0a0a" />
<rect x="1368.88" y="376.40" width="7.20" height="7.20" fill="#ff0a0a" />
<rect x="1379.54" y="370.20" width="7.20" height="7.20" fill="#ff0a0a" />
<rect x="1390.20" y="363.90" width="7.20" height="7.20" fill="#ff0a0a" />
<rect x="1400.86" y="357.70" width="7.20" height="7.20" fill="#ff0a0a" />
<rect x="1411.52" y="351.40" width="7.20" height="7.20" fill="#ff0a0a" />
<rect x="1422.18" y="345.20" width="7.20" height="7.20" fill="#ff0a0a" />
<rect x="1432.84" y="336.40" width="7.20" height="7.20" fill="#ff0a0a" />
<rect x="1443.50" y="328.90" width="7.20" height="7.20" fill="#ff0a0a" />
<rect x="1454.16" y="322.70" width="7.20" height="7.20" fill="#ff0a0a" />
<rect x="1464.82" y="313.90" width="7.20" height="7.20" fill="#ff0a0a" />
<rect x="1475.48" y="302.40" width="7.20" height="7.20" fill="#ff0a0a" />
<rect x="1486.14" y="294.10" width="7.20" height="7.20" fill="#ff0a0a" />
<rect x="1496.80" y="285.20" width="7.20" height="7.20" fill="#ff0a0a" />
<rect x="1507.46" y="282.70" width="7.20" height="7.20" fill="#ff0a0a" />
<rect x="1518.12" y="268.20" width="7.20" height="7.20" fill="#ff0a0a" />
<rect x="1528.78" y="266.50" width="7.20" height="7.20" fill="#ff0a0a" />
<rect x="1539.44" y="252.40" width="7.20" height="7.20" fill="#ff0a0a" />
<rect x="1550.10" y="235.90" width="7.20" height="7.20" fill="#ff0a0a" />
<rect x="1560.76" y="233.40" width="7.20" height="7.20" fill="#ff0a0a" />
<rect x="1571.42" y="227.60" width="7.20" height="7.20" fill="#ff0a0a" />
<rect x="1582.08" y="217.20" width="7.20" height="7.20" fill="#ff0a0a" />
<rect x="1592.74" y="201.40" width="7.20" height="7.20" fill="#ff0a0a" />
<rect x="1603.40" y="187.50" width="7.20" height="7.20" fill="#ff0a0a" />
<rect x="1614.06" y="177.60" width="7.20" height="7.20" fill="#ff0a0a" />
<rect x="1624.72" y="169.30" width="7.20" height="7.20" fill="#ff0a0a" />
<rect x="1635.38" y="161.30" width="7.20" height="7.20" fill="#ff0a0a" />
<rect x="1646.04" y="150.30" width="7.20" height="7.20" fill="#ff0a0a" />
<rect x="1656.70" y="141.80" width="7.20" height="7.20" fill="#ff0a0a" />
<rect x="1667.36" y="136.20" width="7.20" height="7.20" fill="#ff0a0a" />
<rect x="1678.02" y="129.00" width="7.20" height="7.20" fill="#ff0a0a" />
<rect x="1688.68" y="121.20" width="7.20" height="7.20" fill="#ff0a0a" />
<rect x="1699.34" y="113.40" width="7.20" height="7.20" fill="#ff0a0a" />
<rect x="1710.00" y="106.10" width="7.20" height="7.20" fill="#ff0a0a" />
<rect x="1720.66" y="99.80" width="7.20" height="7.20" fill="#ff0a0a" />
<rect x="1731.32" y="94.00" width="7.20" height="7.20" fill="#ff0a0a" />
<rect x="1741.98" y="88.60" width="7.20" height="7.20" fill="#ff0a0a" />
<rect x="1752.64" y="84.00" width="7.20" height="7.20" fill="#ff0a0a" />
<rect x="1763.30" y="77.40" width="7.20" height="7.20" fill="#ff0a0a" />
<rect x="1773.96" y="72.60" width="7.20" height="7.20" fill="#ff0a0a" />
<rect x="1784.62" y="68.90" width="7.20" height="7.20" fill="#ff0a0a" />
<rect x="1795.28" y="64.10" width="7.20" height="7.20" fill="#ff0a0a" />
<rect x="1805.94" y="61.60" width="7.20" height="7.20" fill="#ff0a0a" />
<polyline points="1287.2,421.0 1297.9,110.7 1308.5,99.3 1319.2,88.3 1329.8,79.3 1340.5,81.8 1351.2,74.2 1361.8,72.0 1372.5,68.2 1383.1,62.8 1393.8,61.6 1404.5,61.6 1415.1,61.6 1425.8,64.0 1436.4,62.8 1447.1,64.5 1457.8,81.8 1468.4,81.8 1479.1,76.7 1489.7,79.3 1500.4,83.0 1511.1,101.9 1521.7,96.8 1532.4,113.2 1543.0,107.8 1553.7,100.5 1564.4,116.8 1575.0,126.7 1585.7,130.1 1596.3,125.5 1607.0,123.8 1617.7,127.9 1628.3,134.5 1639.0,139.4 1649.6,143.7 1660.3,150.3 1671.0,156.4 1681.6,162.0 1692.3,166.8 1702.9,170.5 1713.6,177.0 1724.3,180.7 1734.9,185.0 1745.6,191.6 1756.2,197.2 1766.9,200.6 1777.6,205.5 1788.2,210.3 1798.9,214.2 1809.5,220.3" fill="none" stroke="#e8e8e8" stroke-width="1.2"/>
<rect x="1294.16" y="107.00" width="7.40" height="7.40" fill="none" stroke="#ffffff" stroke-width="1.3"/>
<rect x="1304.82" y="95.60" width="7.40" height="7.40" fill="none" stroke="#ffffff" stroke-width="1.3"/>
<rect x="1315.48" y="84.60" width="7.40" height="7.40" fill="none" stroke="#ffffff" stroke-width="1.3"/>
<rect x="1326.14" y="75.60" width="7.40" height="7.40" fill="none" stroke="#ffffff" stroke-width="1.3"/>
<rect x="1336.80" y="78.10" width="7.40" height="7.40" fill="none" stroke="#ffffff" stroke-width="1.3"/>
<rect x="1347.46" y="70.50" width="7.40" height="7.40" fill="none" stroke="#ffffff" stroke-width="1.3"/>
<rect x="1358.12" y="68.30" width="7.40" height="7.40" fill="none" stroke="#ffffff" stroke-width="1.3"/>
<rect x="1368.78" y="64.50" width="7.40" height="7.40" fill="none" stroke="#ffffff" stroke-width="1.3"/>
<rect x="1379.44" y="59.10" width="7.40" height="7.40" fill="none" stroke="#ffffff" stroke-width="1.3"/>
<rect x="1390.10" y="57.90" width="7.40" height="7.40" fill="none" stroke="#ffffff" stroke-width="1.3"/>
<rect x="1400.76" y="57.90" width="7.40" height="7.40" fill="none" stroke="#ffffff" stroke-width="1.3"/>
<rect x="1411.42" y="57.90" width="7.40" height="7.40" fill="none" stroke="#ffffff" stroke-width="1.3"/>
<rect x="1422.08" y="60.30" width="7.40" height="7.40" fill="none" stroke="#ffffff" stroke-width="1.3"/>
<rect x="1432.74" y="59.10" width="7.40" height="7.40" fill="none" stroke="#ffffff" stroke-width="1.3"/>
<rect x="1443.40" y="60.80" width="7.40" height="7.40" fill="none" stroke="#ffffff" stroke-width="1.3"/>
<rect x="1454.06" y="78.10" width="7.40" height="7.40" fill="none" stroke="#ffffff" stroke-width="1.3"/>
<rect x="1464.72" y="78.10" width="7.40" height="7.40" fill="none" stroke="#ffffff" stroke-width="1.3"/>
<rect x="1475.38" y="73.00" width="7.40" height="7.40" fill="none" stroke="#ffffff" stroke-width="1.3"/>
<rect x="1486.04" y="75.60" width="7.40" height="7.40" fill="none" stroke="#ffffff" stroke-width="1.3"/>
<rect x="1496.70" y="79.30" width="7.40" height="7.40" fill="none" stroke="#ffffff" stroke-width="1.3"/>
<rect x="1507.36" y="98.20" width="7.40" height="7.40" fill="none" stroke="#ffffff" stroke-width="1.3"/>
<rect x="1518.02" y="93.10" width="7.40" height="7.40" fill="none" stroke="#ffffff" stroke-width="1.3"/>
<rect x="1528.68" y="109.50" width="7.40" height="7.40" fill="none" stroke="#ffffff" stroke-width="1.3"/>
<rect x="1539.34" y="104.10" width="7.40" height="7.40" fill="none" stroke="#ffffff" stroke-width="1.3"/>
<rect x="1550.00" y="96.80" width="7.40" height="7.40" fill="none" stroke="#ffffff" stroke-width="1.3"/>
<rect x="1560.66" y="113.10" width="7.40" height="7.40" fill="none" stroke="#ffffff" stroke-width="1.3"/>
<rect x="1571.32" y="123.00" width="7.40" height="7.40" fill="none" stroke="#ffffff" stroke-width="1.3"/>
<rect x="1581.98" y="126.40" width="7.40" height="7.40" fill="none" stroke="#ffffff" stroke-width="1.3"/>
<rect x="1592.64" y="121.80" width="7.40" height="7.40" fill="none" stroke="#ffffff" stroke-width="1.3"/>
<rect x="1603.30" y="120.10" width="7.40" height="7.40" fill="none" stroke="#ffffff" stroke-width="1.3"/>
<rect x="1613.96" y="124.20" width="7.40" height="7.40" fill="none" stroke="#ffffff" stroke-width="1.3"/>
<rect x="1624.62" y="130.80" width="7.40" height="7.40" fill="none" stroke="#ffffff" stroke-width="1.3"/>
<rect x="1635.28" y="135.70" width="7.40" height="7.40" fill="none" stroke="#ffffff" stroke-width="1.3"/>
<rect x="1645.94" y="140.00" width="7.40" height="7.40" fill="none" stroke="#ffffff" stroke-width="1.3"/>
<rect x="1656.60" y="146.60" width="7.40" height="7.40" fill="none" stroke="#ffffff" stroke-width="1.3"/>
<rect x="1667.26" y="152.70" width="7.40" height="7.40" fill="none" stroke="#ffffff" stroke-width="1.3"/>
<rect x="1677.92" y="158.30" width="7.40" height="7.40" fill="none" stroke="#ffffff" stroke-width="1.3"/>
<rect x="1688.58" y="163.10" width="7.40" height="7.40" fill="none" stroke="#ffffff" stroke-width="1.3"/>
<rect x="1699.24" y="166.80" width="7.40" height="7.40" fill="none" stroke="#ffffff" stroke-width="1.3"/>
<rect x="1709.90" y="173.30" width="7.40" height="7.40" fill="none" stroke="#ffffff" stroke-width="1.3"/>
<rect x="1720.56" y="177.00" width="7.40" height="7.40" fill="none" stroke="#ffffff" stroke-width="1.3"/>
<rect x="1731.22" y="181.30" width="7.40" height="7.40" fill="none" stroke="#ffffff" stroke-width="1.3"/>
<rect x="1741.88" y="187.90" width="7.40" height="7.40" fill="none" stroke="#ffffff" stroke-width="1.3"/>
<rect x="1752.54" y="193.50" width="7.40" height="7.40" fill="none" stroke="#ffffff" stroke-width="1.3"/>
<rect x="1763.20" y="196.90" width="7.40" height="7.40" fill="none" stroke="#ffffff" stroke-width="1.3"/>
<rect x="1773.86" y="201.80" width="7.40" height="7.40" fill="none" stroke="#ffffff" stroke-width="1.3"/>
<rect x="1784.52" y="206.60" width="7.40" height="7.40" fill="none" stroke="#ffffff" stroke-width="1.3"/>
<rect x="1795.18" y="210.50" width="7.40" height="7.40" fill="none" stroke="#ffffff" stroke-width="1.3"/>
<rect x="1805.84" y="216.60" width="7.40" height="7.40" fill="none" stroke="#ffffff" stroke-width="1.3"/>
<rect x="1283.20" y="416.00" width="8.00" height="6.00" fill="none" stroke="#ffffff" stroke-width="1.4"/>
</svg>
<rect x="448.50" y="495.50" width="853.50" height="403.50" fill="#000" />
<line x1="449.00" y1="495.50" x2="449.00" y2="899.00" stroke="#222" stroke-width="1.5" />
<line x1="440.00" y1="897.50" x2="446.50" y2="897.50" stroke="#222" stroke-width="1.2" />
<line x1="440.00" y1="861.50" x2="446.50" y2="861.50" stroke="#222" stroke-width="1.2" />
<line x1="440.00" y1="824.50" x2="446.50" y2="824.50" stroke="#222" stroke-width="1.2" />
<line x1="440.00" y1="788.50" x2="446.50" y2="788.50" stroke="#222" stroke-width="1.2" />
<line x1="440.00" y1="752.50" x2="446.50" y2="752.50" stroke="#222" stroke-width="1.2" />
<line x1="440.00" y1="715.50" x2="446.50" y2="715.50" stroke="#222" stroke-width="1.2" />
<line x1="440.00" y1="679.50" x2="446.50" y2="679.50" stroke="#222" stroke-width="1.2" />
<line x1="440.00" y1="642.50" x2="446.50" y2="642.50" stroke="#222" stroke-width="1.2" />
<line x1="440.00" y1="606.50" x2="446.50" y2="606.50" stroke="#222" stroke-width="1.2" />
<line x1="440.00" y1="570.50" x2="446.50" y2="570.50" stroke="#222" stroke-width="1.2" />
<line x1="440.00" y1="533.50" x2="446.50" y2="533.50" stroke="#222" stroke-width="1.2" />
<line x1="440.00" y1="497.50" x2="446.50" y2="497.50" stroke="#222" stroke-width="1.2" />
<line x1="449.50" y1="902.50" x2="449.50" y2="908.50" stroke="#222" stroke-width="1.2" />
<line x1="486.50" y1="902.50" x2="486.50" y2="908.50" stroke="#222" stroke-width="1.2" />
<line x1="523.50" y1="902.50" x2="523.50" y2="908.50" stroke="#222" stroke-width="1.2" />
<line x1="560.50" y1="902.50" x2="560.50" y2="908.50" stroke="#222" stroke-width="1.2" />
<line x1="597.50" y1="902.50" x2="597.50" y2="908.50" stroke="#222" stroke-width="1.2" />
<line x1="634.50" y1="902.50" x2="634.50" y2="908.50" stroke="#222" stroke-width="1.2" />
<line x1="671.50" y1="902.50" x2="671.50" y2="908.50" stroke="#222" stroke-width="1.2" />
<line x1="708.50" y1="902.50" x2="708.50" y2="908.50" stroke="#222" stroke-width="1.2" />
<line x1="745.50" y1="902.50" x2="745.50" y2="908.50" stroke="#222" stroke-width="1.2" />
<line x1="782.50" y1="902.50" x2="782.50" y2="908.50" stroke="#222" stroke-width="1.2" />
<line x1="819.50" y1="902.50" x2="819.50" y2="908.50" stroke="#222" stroke-width="1.2" />
<line x1="856.50" y1="902.50" x2="856.50" y2="908.50" stroke="#222" stroke-width="1.2" />
<line x1="893.50" y1="902.50" x2="893.50" y2="908.50" stroke="#222" stroke-width="1.2" />
<line x1="930.50" y1="902.50" x2="930.50" y2="908.50" stroke="#222" stroke-width="1.2" />
<line x1="967.50" y1="902.50" x2="967.50" y2="908.50" stroke="#222" stroke-width="1.2" />
<line x1="1004.50" y1="902.50" x2="1004.50" y2="908.50" stroke="#222" stroke-width="1.2" />
<line x1="1041.50" y1="902.50" x2="1041.50" y2="908.50" stroke="#222" stroke-width="1.2" />
<line x1="1078.50" y1="902.50" x2="1078.50" y2="908.50" stroke="#222" stroke-width="1.2" />
<line x1="1115.50" y1="902.50" x2="1115.50" y2="908.50" stroke="#222" stroke-width="1.2" />
<line x1="1152.50" y1="902.50" x2="1152.50" y2="908.50" stroke="#222" stroke-width="1.2" />
<line x1="1189.50" y1="902.50" x2="1189.50" y2="908.50" stroke="#222" stroke-width="1.2" />
<line x1="1226.50" y1="902.50" x2="1226.50" y2="908.50" stroke="#222" stroke-width="1.2" />
<line x1="1263.50" y1="902.50" x2="1263.50" y2="908.50" stroke="#222" stroke-width="1.2" />
<line x1="1300.50" y1="902.50" x2="1300.50" y2="908.50" stroke="#222" stroke-width="1.2" />
<rect x="1213.50" y="930.50" width="111.00" height="31.00" fill="#ddd5b6" />
<rect x="1213.50" y="930.50" width="111.00" height="3.00" fill="#efe6c4" />
<rect x="1213.50" y="930.50" width="8.00" height="31.00" fill="url(#g41)" />
<rect x="1312.50" y="930.50" width="12.00" height="31.00" fill="url(#g42)" />
<rect x="1213.50" y="958.50" width="111.00" height="3.00" fill="url(#g43)" />
<rect x="1229.50" y="936.00" width="25.00" height="20.00" fill="url(#g44)" />
<line x1="1232.50" y1="946.00" x2="1251.50" y2="946.00" stroke="#111" stroke-width="1.6" />
<line x1="1242.50" y1="938.00" x2="1242.50" y2="955.50" stroke="#111" stroke-width="1.6" />
<circle cx="1242.5" cy="946" r="2" fill="none" stroke="#111" stroke-width="1.2"/>
<rect x="1231.50" y="938.00" width="3.00" height="3.00" fill="#3cff3c" />
<rect x="1256.50" y="936.00" width="21.00" height="20.00" fill="url(#g45)" />
<circle cx="1269.0" cy="943.5" r="5" fill="#c8c8ff" stroke="#111" stroke-width="1.4"/>
<line x1="1266.50" y1="943.50" x2="1271.50" y2="943.50" stroke="#111" stroke-width="1.4" />
<line x1="1269.00" y1="941.00" x2="1269.00" y2="946.00" stroke="#111" stroke-width="1.4" />
<line x1="1259.50" y1="953.50" x2="1265.50" y2="947.50" stroke="#111" stroke-width="2.2" />
<polygon points="1269.50,952.50 1275.50,952.50 1272.50,955.50" fill="#111" />
<rect x="1258.50" y="938.00" width="3.00" height="3.00" fill="#3e7a3e" />
<rect x="1282.50" y="936.00" width="24.00" height="20.00" fill="url(#g46)" />
<path d="M1288.5,944.5 L1291.5,950.5 L1294.5,953.5 M1291.5,945.5 L1291.5,940.5 M1294.5,944.5 L1294.5,939.5 M1297.5,944.5 L1297.5,940 M1300.5,945.5 L1300.5,941.5 L1301.5,949.5 L1299.5,953.5" fill="none" stroke="#111" stroke-width="1.4"/>
<rect x="1284.50" y="938.00" width="3.00" height="3.00" fill="#3e7a3e" />
<rect x="449.60" y="863.00" width="425.50" height="35.50" fill="url(#g47)" />
<g clip-path="url(#spclip)" fill="none" stroke-width="1" shape-rendering="crispEdges">
<line x1="449.50" y1="861.30" x2="1281.00" y2="861.30" stroke="#ffffff" stroke-width="2.2" />
<polyline stroke="#ff3030" points="450.7,861.1 453.8,861.0 456.8,861.1 459.9,861.1 462.9,861.1 466.0,861.0 469.0,860.7 472.1,860.8 475.1,860.6 478.2,860.7 481.2,860.6 484.3,860.5 487.3,860.8 490.4,860.2 493.4,860.2 496.5,860.1 499.5,860.4 502.6,860.3 505.7,860.0 508.7,859.7 511.8,859.4 514.8,859.2 516.8,859.0 518.9,859.1 520.9,858.7 523.0,858.5 525.0,858.6 527.0,857.8 529.1,857.9 531.1,857.5 533.1,857.7 535.2,857.5 537.2,857.1 539.2,856.7 541.3,856.2 543.3,855.9 545.3,855.8 547.4,855.5 549.4,855.0 551.4,853.9 553.5,854.1 555.5,853.2 557.5,852.5 559.6,852.7 561.6,851.5 563.7,850.4 565.7,851.0 567.7,849.7 569.8,848.9 571.8,848.6 573.8,847.4 575.9,847.0 577.9,847.0 579.9,845.4 582.0,845.0 584.0,844.4 586.0,843.7 588.1,843.9 590.1,843.7 592.1,844.2 594.2,843.2 596.2,843.7 598.2,843.7 600.3,844.2 602.3,844.3 604.4,844.3 606.4,843.9 608.4,845.8 610.5,846.0 612.5,845.8 614.5,845.8 616.6,846.8 618.6,848.5 620.6,849.4 622.7,848.8 624.7,849.9 626.7,850.7 628.8,850.5 630.8,851.1 632.8,852.0 634.9,852.6 636.9,853.1 638.9,853.2 641.0,854.0 643.0,854.5 645.1,854.9 647.1,856.0 649.1,855.4 651.2,855.9 653.2,856.3 655.2,857.4 657.3,857.3 659.3,857.1 661.3,858.1 663.4,857.8 665.4,857.7 667.4,858.5 669.5,857.9 671.5,858.4 673.5,858.7 675.6,858.7 677.6,858.8 679.6,859.1 681.7,858.9 683.7,859.5 685.8,859.6 687.8,859.3 689.8,859.7 691.9,860.0 693.9,859.6 695.9,859.6 698.0,860.1 700.0,860.4 702.0,860.2 704.1,860.3 706.1,860.4 708.1,860.1 710.2,860.7 713.2,860.3 716.3,860.9 719.3,860.8 722.4,860.6 725.4,860.6 728.5,860.7 731.5,860.8 734.6,860.9 737.6,860.9 740.7,860.9 743.8,861.1 746.8,861.0 749.9,861.0 752.9,861.1 756.0,861.0 759.0,861.0 762.1,860.8 765.1,861.1 768.2,861.2 771.2,861.2 774.3,861.2 777.3,861.0 780.4,861.2 783.4,861.1 786.5,860.9 789.5,861.6 792.6,861.4 795.6,861.2 798.7,861.1 801.7,861.2 804.8,861.3 807.9,861.1 810.9,861.2 814.0,861.3 817.0,860.8 820.1,861.1 823.1,861.3 826.2,861.2 829.2,861.2 832.3,861.2 835.3,861.6 838.4,861.3 841.4,861.1 844.5,861.4 847.5,861.2 850.6,861.1 853.6,861.1 856.7,861.0 859.7,861.4 862.8,861.3 865.9,861.2 868.9,861.1 872.0,861.0 875.0,861.6 878.1,861.0 881.1,861.4 884.2,861.1 887.2,861.4 890.3,861.2 893.3,861.0 896.4,861.2 899.4,861.2 902.5,861.1 905.5,861.2 908.6,861.2 911.6,861.0"/>
<polyline stroke="#00ff00" points="450.7,860.9 453.8,861.1 456.8,860.5 459.9,861.2 462.9,860.8 466.0,861.0 469.0,860.8 472.1,860.7 475.1,860.7 478.2,860.5 481.2,860.9 484.3,860.8 487.3,860.3 490.4,860.5 493.4,860.4 496.5,860.4 499.5,859.6 502.6,859.6 505.7,859.2 508.7,859.7 511.8,859.2 514.8,859.3 516.8,858.6 518.9,858.3 520.9,858.7 523.0,857.9 525.0,857.8 527.0,857.9 529.1,858.2 531.1,857.0 533.1,857.2 535.2,857.0 537.2,856.4 539.2,856.0 541.3,855.3 543.3,855.7 545.3,854.6 547.4,854.0 549.4,853.5 551.4,853.5 553.5,853.2 555.5,851.9 557.5,851.6 559.6,851.0 561.6,849.8 563.7,849.7 565.7,849.8 567.7,848.3 569.8,848.2 571.8,846.3 573.8,845.8 575.9,845.5 577.9,844.6 579.9,843.5 582.0,843.3 584.0,842.2 586.0,842.4 588.1,841.5 590.1,840.9 592.1,840.7 594.2,841.6 596.2,840.8 598.2,842.2 600.3,842.0 602.3,842.7 604.4,841.5 606.4,843.0 608.4,842.9 610.5,843.5 612.5,844.1 614.5,844.9 616.6,845.2 618.6,845.3 620.6,846.8 622.7,847.3 624.7,847.8 626.7,849.0 628.8,850.2 630.8,850.6 632.8,850.6 634.9,852.3 636.9,852.5 638.9,852.5 641.0,853.1 643.0,853.9 645.1,854.1 647.1,854.7 649.1,855.6 651.2,856.1 653.2,856.1 655.2,856.0 657.3,856.7 659.3,857.1 661.3,857.3 663.4,857.8 665.4,857.6 667.4,858.1 669.5,857.9 671.5,858.8 673.5,858.3 675.6,858.7 677.6,859.2 679.6,858.7 681.7,859.1 683.7,859.7 685.8,859.5 687.8,859.3 689.8,859.6 691.9,859.4 693.9,859.5 695.9,859.6 698.0,859.8 700.0,859.7 702.0,859.9 704.1,860.1 706.1,860.7 708.1,860.1 710.2,860.1 713.2,860.5 716.3,860.6 719.3,860.2 722.4,861.0 725.4,860.7 728.5,860.3 731.5,861.0 734.6,860.8 737.6,860.6 740.7,861.0 743.8,860.9 746.8,860.9 749.9,861.2 752.9,861.1 756.0,861.1 759.0,861.0 762.1,861.1 765.1,861.2 768.2,861.3 771.2,861.2 774.3,861.0 777.3,861.2 780.4,861.3 783.4,861.3 786.5,860.8 789.5,861.0 792.6,861.1 795.6,861.6 798.7,861.1 801.7,861.1 804.8,860.9 807.9,861.1 810.9,861.2 814.0,861.1 817.0,861.5 820.1,861.0 823.1,861.2 826.2,861.3 829.2,861.0 832.3,860.9 835.3,861.4 838.4,861.3 841.4,861.2 844.5,861.2 847.5,861.3 850.6,861.3 853.6,860.9 856.7,861.0 859.7,861.4 862.8,861.4 865.9,861.0 868.9,861.1 872.0,860.9 875.0,861.1 878.1,861.3 881.1,861.2 884.2,861.5 887.2,861.3 890.3,861.2 893.3,861.1 896.4,861.3 899.4,861.2 902.5,861.1 905.5,861.1 908.6,861.1 911.6,861.2"/>
<polyline stroke="#30a0f0" points="450.7,861.1 453.8,860.9 456.8,861.0 459.9,861.1 462.9,861.0 466.0,860.9 469.0,860.8 472.1,860.7 475.1,860.7 478.2,860.6 481.2,860.5 484.3,860.7 487.3,860.2 490.4,859.9 493.4,860.0 496.5,859.9 499.5,859.6 502.6,859.8 505.7,859.8 508.7,859.1 511.8,859.2 514.8,858.5 516.8,858.8 518.9,859.0 520.9,858.4 523.0,857.4 525.0,857.8 527.0,857.8 529.1,857.4 531.1,856.7 533.1,856.4 535.2,856.1 537.2,855.4 539.2,855.2 541.3,855.0 543.3,854.4 545.3,853.5 547.4,853.2 549.4,852.6 551.4,852.8 553.5,851.8 555.5,850.7 557.5,850.4 559.6,849.1 561.6,848.5 563.7,847.6 565.7,847.2 567.7,845.1 569.8,844.8 571.8,844.7 573.8,843.7 575.9,841.7 577.9,842.3 579.9,841.0 582.0,840.3 584.0,840.1 586.0,840.2 588.1,839.1 590.1,838.6 592.1,838.0 594.2,838.0 596.2,838.4 598.2,838.0 600.3,838.3 602.3,838.8 604.4,839.2 606.4,839.8 608.4,839.9 610.5,841.4 612.5,841.8 614.5,842.3 616.6,843.7 618.6,844.1 620.6,845.6 622.7,845.8 624.7,846.1 626.7,846.9 628.8,848.0 630.8,848.9 632.8,850.1 634.9,849.5 636.9,850.8 638.9,851.2 641.0,852.6 643.0,852.9 645.1,854.0 647.1,853.6 649.1,854.0 651.2,855.4 653.2,855.2 655.2,855.4 657.3,856.5 659.3,856.8 661.3,856.9 663.4,857.0 665.4,857.5 667.4,857.3 669.5,857.5 671.5,857.6 673.5,857.8 675.6,857.7 677.6,858.0 679.6,858.9 681.7,858.8 683.7,859.1 685.8,859.2 687.8,859.1 689.8,859.2 691.9,859.2 693.9,859.9 695.9,859.9 698.0,859.7 700.0,859.9 702.0,860.0 704.1,860.0 706.1,860.3 708.1,860.0 710.2,860.2 713.2,860.4 716.3,860.6 719.3,860.6 722.4,861.2 725.4,860.9 728.5,860.7 731.5,861.1 734.6,860.8 737.6,860.9 740.7,861.2 743.8,861.0 746.8,861.1 749.9,861.0 752.9,861.0 756.0,861.1 759.0,861.2 762.1,861.1 765.1,861.1 768.2,861.0 771.2,861.1 774.3,861.3 777.3,861.4 780.4,861.2 783.4,861.3 786.5,861.4 789.5,861.2 792.6,861.3 795.6,861.2 798.7,861.1 801.7,861.3 804.8,860.8 807.9,861.2 810.9,861.0 814.0,861.2 817.0,861.0 820.1,861.6 823.1,861.3 826.2,861.2 829.2,861.1 832.3,860.9 835.3,861.2 838.4,861.0 841.4,861.1 844.5,861.1 847.5,861.1 850.6,861.2 853.6,861.1 856.7,861.4 859.7,861.0 862.8,861.3 865.9,861.2 868.9,860.9 872.0,861.2 875.0,861.2 878.1,861.0 881.1,861.2 884.2,861.3 887.2,861.2 890.3,861.1 893.3,861.1 896.4,861.3 899.4,860.9 902.5,861.0 905.5,861.2 908.6,861.2 911.6,861.3"/>
<polyline stroke="#a8c848" points="450.7,860.8 453.8,861.1 456.8,860.8 459.9,861.0 462.9,861.0 466.0,860.7 469.0,860.5 472.1,860.7 475.1,860.7 478.2,860.3 481.2,860.4 484.3,860.2 487.3,859.8 490.4,859.7 493.4,860.0 496.5,859.1 499.5,859.5 502.6,859.1 505.7,859.2 508.7,858.8 511.8,859.0 514.8,857.7 516.8,857.6 518.9,858.1 520.9,858.0 523.0,857.8 525.0,856.7 527.0,856.9 529.1,856.4 531.1,856.2 533.1,855.7 535.2,855.7 537.2,854.9 539.2,854.9 541.3,853.9 543.3,853.3 545.3,852.6 547.4,852.2 549.4,851.8 551.4,850.7 553.5,850.2 555.5,848.6 557.5,848.0 559.6,847.5 561.6,846.7 563.7,845.9 565.7,845.0 567.7,843.7 569.8,842.4 571.8,841.3 573.8,840.3 575.9,838.6 577.9,839.1 579.9,837.9 582.0,835.6 584.0,837.3 586.0,836.0 588.1,835.1 590.1,834.7 592.1,834.3 594.2,834.5 596.2,834.1 598.2,834.4 600.3,834.2 602.3,835.9 604.4,835.8 606.4,835.9 608.4,837.1 610.5,837.8 612.5,837.7 614.5,839.2 616.6,839.5 618.6,840.4 620.6,841.6 622.7,842.5 624.7,843.7 626.7,845.3 628.8,845.6 630.8,846.4 632.8,847.7 634.9,848.4 636.9,848.8 638.9,850.3 641.0,850.4 643.0,850.6 645.1,852.2 647.1,852.5 649.1,853.2 651.2,853.1 653.2,854.0 655.2,854.2 657.3,855.2 659.3,855.3 661.3,855.7 663.4,856.6 665.4,855.9 667.4,856.3 669.5,857.4 671.5,856.9 673.5,857.4 675.6,857.5 677.6,857.7 679.6,858.4 681.7,858.3 683.7,858.0 685.8,858.7 687.8,859.0 689.8,859.2 691.9,859.3 693.9,859.1 695.9,858.9 698.0,859.3 700.0,859.5 702.0,859.1 704.1,859.9 706.1,860.0 708.1,859.9 710.2,860.0 713.2,860.4 716.3,860.6 719.3,860.4 722.4,860.5 725.4,860.9 728.5,860.7 731.5,860.9 734.6,860.7 737.6,860.9 740.7,860.9 743.8,861.0 746.8,860.8 749.9,860.8 752.9,861.1 756.0,860.9 759.0,861.2 762.1,861.1 765.1,861.0 768.2,860.9 771.2,861.2 774.3,861.2 777.3,861.1 780.4,861.4 783.4,861.2 786.5,861.3 789.5,861.1 792.6,861.4 795.6,861.5 798.7,861.2 801.7,861.2 804.8,861.3 807.9,861.1 810.9,861.2 814.0,861.3 817.0,861.1 820.1,861.4 823.1,861.3 826.2,861.2 829.2,861.1 832.3,861.2 835.3,861.2 838.4,861.3 841.4,861.2 844.5,861.0 847.5,861.3 850.6,860.9 853.6,861.3 856.7,861.2 859.7,861.2 862.8,861.1 865.9,861.4 868.9,861.5 872.0,861.1 875.0,861.1 878.1,861.1 881.1,860.8 884.2,861.2 887.2,861.2 890.3,861.1 893.3,861.1 896.4,861.0 899.4,861.4 902.5,861.3 905.5,861.7 908.6,861.1 911.6,861.3"/>
<polyline stroke="#a050ff" points="450.7,860.8 453.8,860.6 456.8,860.9 459.9,860.9 462.9,860.9 466.0,860.9 469.0,860.8 472.1,860.5 475.1,860.5 478.2,860.4 481.2,860.3 484.3,859.9 487.3,859.9 490.4,859.9 493.4,859.5 496.5,859.5 499.5,859.5 502.6,858.6 505.7,858.6 508.7,858.7 511.8,857.9 514.8,857.7 516.8,858.0 518.9,856.8 520.9,856.9 523.0,856.5 525.0,856.4 527.0,856.1 529.1,856.2 531.1,855.0 533.1,854.9 535.2,854.6 537.2,853.9 539.2,853.4 541.3,852.6 543.3,852.4 545.3,851.6 547.4,851.7 549.4,850.3 551.4,849.0 553.5,847.9 555.5,847.7 557.5,846.6 559.6,844.8 561.6,844.6 563.7,843.1 565.7,841.5 567.7,841.1 569.8,839.4 571.8,839.2 573.8,837.6 575.9,836.7 577.9,835.5 579.9,834.0 582.0,832.4 584.0,833.3 586.0,832.5 588.1,831.3 590.1,831.7 592.1,830.5 594.2,830.3 596.2,830.7 598.2,830.4 600.3,831.8 602.3,830.8 604.4,832.6 606.4,832.7 608.4,833.4 610.5,834.1 612.5,834.4 614.5,835.8 616.6,837.0 618.6,837.6 620.6,838.2 622.7,840.1 624.7,841.1 626.7,841.8 628.8,843.3 630.8,845.1 632.8,844.4 634.9,845.6 636.9,848.3 638.9,848.4 641.0,849.0 643.0,849.6 645.1,850.4 647.1,851.5 649.1,852.4 651.2,852.5 653.2,852.7 655.2,854.0 657.3,854.4 659.3,854.5 661.3,855.6 663.4,855.4 665.4,855.8 667.4,855.8 669.5,856.5 671.5,856.8 673.5,857.0 675.6,857.1 677.6,857.5 679.6,857.6 681.7,857.6 683.7,857.7 685.8,857.7 687.8,858.6 689.8,858.7 691.9,859.4 693.9,858.4 695.9,859.2 698.0,859.2 700.0,859.2 702.0,859.8 704.1,859.5 706.1,859.7 708.1,860.2 710.2,859.9 713.2,859.8 716.3,860.6 719.3,860.1 722.4,860.4 725.4,860.4 728.5,860.5 731.5,860.4 734.6,860.8 737.6,860.6 740.7,860.9 743.8,860.8 746.8,861.1 749.9,861.0 752.9,860.7 756.0,861.0 759.0,861.1 762.1,861.3 765.1,861.2 768.2,861.1 771.2,861.0 774.3,861.1 777.3,861.1 780.4,861.2 783.4,861.0 786.5,861.2 789.5,861.3 792.6,861.0 795.6,861.2 798.7,861.2 801.7,861.3 804.8,861.2 807.9,861.1 810.9,861.1 814.0,861.4 817.0,861.1 820.1,861.2 823.1,861.3 826.2,861.1 829.2,861.2 832.3,861.2 835.3,861.1 838.4,861.0 841.4,861.3 844.5,861.1 847.5,861.3 850.6,860.9 853.6,861.3 856.7,861.0 859.7,861.3 862.8,861.1 865.9,860.9 868.9,861.6 872.0,861.3 875.0,861.1 878.1,861.2 881.1,861.3 884.2,860.9 887.2,861.2 890.3,861.4 893.3,861.1 896.4,861.5 899.4,861.0 902.5,861.3 905.5,861.2 908.6,861.0 911.6,861.2"/>
<polyline stroke="#ffa020" points="450.7,861.2 453.8,861.2 456.8,860.7 459.9,860.7 462.9,860.9 466.0,860.5 469.0,860.5 472.1,860.4 475.1,860.9 478.2,860.3 481.2,859.9 484.3,859.8 487.3,859.6 490.4,860.2 493.4,859.4 496.5,859.1 499.5,858.3 502.6,858.9 505.7,858.5 508.7,858.1 511.8,857.5 514.8,857.5 516.8,856.7 518.9,857.0 520.9,856.4 523.0,856.3 525.0,855.7 527.0,855.6 529.1,855.5 531.1,854.1 533.1,853.9 535.2,853.7 537.2,852.9 539.2,852.0 541.3,852.0 543.3,851.0 545.3,850.0 547.4,849.2 549.4,848.7 551.4,848.5 553.5,846.0 555.5,845.4 557.5,844.4 559.6,843.4 561.6,841.9 563.7,841.0 565.7,840.0 567.7,838.6 569.8,837.2 571.8,835.9 573.8,834.9 575.9,832.7 577.9,832.6 579.9,830.4 582.0,830.3 584.0,828.6 586.0,827.2 588.1,827.2 590.1,827.2 592.1,826.3 594.2,826.1 596.2,827.1 598.2,826.5 600.3,826.4 602.3,827.1 604.4,827.4 606.4,827.7 608.4,828.5 610.5,829.4 612.5,830.6 614.5,832.2 616.6,833.3 618.6,834.6 620.6,835.9 622.7,837.1 624.7,839.2 626.7,839.8 628.8,840.9 630.8,842.5 632.8,843.3 634.9,844.1 636.9,845.5 638.9,845.5 641.0,848.5 643.0,848.4 645.1,849.9 647.1,849.5 649.1,849.6 651.2,852.3 653.2,851.9 655.2,852.3 657.3,853.2 659.3,853.4 661.3,854.8 663.4,854.1 665.4,854.7 667.4,855.2 669.5,855.8 671.5,855.7 673.5,856.4 675.6,856.4 677.6,856.9 679.6,857.7 681.7,857.3 683.7,857.5 685.8,857.5 687.8,858.2 689.8,858.2 691.9,858.2 693.9,858.5 695.9,858.4 698.0,858.4 700.0,859.3 702.0,859.7 704.1,859.1 706.1,859.1 708.1,859.4 710.2,859.5 713.2,860.0 716.3,860.2 719.3,860.0 722.4,860.5 725.4,860.8 728.5,860.7 731.5,860.1 734.6,860.3 737.6,860.9 740.7,861.0 743.8,860.8 746.8,861.1 749.9,860.7 752.9,861.0 756.0,861.2 759.0,860.8 762.1,861.2 765.1,861.1 768.2,861.1 771.2,861.2 774.3,861.1 777.3,861.3 780.4,861.5 783.4,861.5 786.5,861.4 789.5,861.3 792.6,861.2 795.6,861.2 798.7,861.1 801.7,861.2 804.8,861.3 807.9,861.3 810.9,861.5 814.0,861.2 817.0,861.1 820.1,861.1 823.1,861.2 826.2,861.2 829.2,861.1 832.3,861.2 835.3,861.1 838.4,861.1 841.4,861.2 844.5,861.0 847.5,861.3 850.6,861.3 853.6,861.3 856.7,861.3 859.7,861.0 862.8,860.9 865.9,861.2 868.9,861.1 872.0,861.0 875.0,861.1 878.1,861.0 881.1,861.4 884.2,861.3 887.2,861.1 890.3,861.0 893.3,861.2 896.4,861.3 899.4,861.3 902.5,861.3 905.5,861.3 908.6,861.0 911.6,861.3"/>
<polyline stroke="#3c3cff" points="450.7,860.9 453.8,860.5 456.8,860.6 459.9,860.7 462.9,860.8 466.0,860.5 469.0,860.2 472.1,860.3 475.1,860.0 478.2,860.2 481.2,859.9 484.3,859.9 487.3,859.6 490.4,859.1 493.4,859.6 496.5,859.0 499.5,858.6 502.6,858.6 505.7,858.2 508.7,857.5 511.8,856.7 514.8,856.7 516.8,856.5 518.9,856.8 520.9,855.3 523.0,855.5 525.0,855.2 527.0,855.1 529.1,854.3 531.1,854.2 533.1,853.2 535.2,852.5 537.2,852.0 539.2,851.3 541.3,851.0 543.3,849.3 545.3,849.3 547.4,848.9 549.4,847.2 551.4,846.4 553.5,845.5 555.5,844.0 557.5,842.5 559.6,841.9 561.6,840.0 563.7,837.8 565.7,836.8 567.7,835.8 569.8,834.2 571.8,832.9 573.8,831.4 575.9,829.6 577.9,828.7 579.9,828.8 582.0,826.3 584.0,825.8 586.0,824.0 588.1,824.0 590.1,822.9 592.1,821.2 594.2,823.0 596.2,823.0 598.2,823.2 600.3,824.1 602.3,824.3 604.4,823.5 606.4,824.9 608.4,826.6 610.5,827.4 612.5,827.3 614.5,829.4 616.6,830.4 618.6,831.4 620.6,832.3 622.7,833.4 624.7,835.3 626.7,837.2 628.8,838.5 630.8,839.1 632.8,840.6 634.9,842.7 636.9,843.5 638.9,844.7 641.0,845.9 643.0,847.1 645.1,848.4 647.1,848.9 649.1,850.1 651.2,849.8 653.2,850.7 655.2,852.0 657.3,851.6 659.3,852.4 661.3,853.9 663.4,853.1 665.4,853.9 667.4,853.9 669.5,855.4 671.5,855.1 673.5,855.5 675.6,855.9 677.6,856.2 679.6,856.3 681.7,857.3 683.7,857.5 685.8,857.8 687.8,857.8 689.8,858.0 691.9,858.0 693.9,858.2 695.9,858.5 698.0,858.8 700.0,858.9 702.0,858.7 704.1,859.0 706.1,859.3 708.1,859.5 710.2,859.2 713.2,859.9 716.3,859.8 719.3,859.8 722.4,860.3 725.4,860.2 728.5,860.7 731.5,860.3 734.6,860.6 737.6,861.0 740.7,860.6 743.8,861.0 746.8,860.6 749.9,861.1 752.9,861.0 756.0,861.0 759.0,861.1 762.1,861.0 765.1,861.2 768.2,861.0 771.2,861.1 774.3,861.1 777.3,861.6 780.4,861.0 783.4,861.2 786.5,861.5 789.5,861.2 792.6,861.1 795.6,861.0 798.7,861.4 801.7,861.0 804.8,861.2 807.9,860.8 810.9,861.2 814.0,861.1 817.0,861.3 820.1,861.4 823.1,861.0 826.2,861.1 829.2,861.0 832.3,861.1 835.3,861.3 838.4,861.4 841.4,861.3 844.5,861.3 847.5,861.3 850.6,861.1 853.6,861.2 856.7,861.2 859.7,861.2 862.8,861.2 865.9,861.2 868.9,861.1 872.0,861.1 875.0,861.3 878.1,861.4 881.1,861.0 884.2,861.2 887.2,861.0 890.3,861.4 893.3,861.2 896.4,861.2 899.4,861.4 902.5,861.3 905.5,861.1 908.6,861.0 911.6,861.0"/>
<polyline stroke="#e040b0" points="450.7,861.1 453.8,861.1 456.8,860.7 459.9,860.5 462.9,860.6 466.0,860.8 469.0,860.3 472.1,860.2 475.1,860.1 478.2,860.2 481.2,859.8 484.3,859.5 487.3,859.6 490.4,859.7 493.4,858.9 496.5,858.6 499.5,858.4 502.6,857.8 505.7,857.8 508.7,857.3 511.8,856.9 514.8,856.2 516.8,855.5 518.9,855.7 520.9,854.5 523.0,854.3 525.0,854.1 527.0,853.7 529.1,852.7 531.1,852.9 533.1,852.2 535.2,851.9 537.2,850.7 539.2,849.5 541.3,849.0 543.3,848.2 545.3,847.5 547.4,846.3 549.4,845.9 551.4,843.6 553.5,843.1 555.5,842.1 557.5,840.5 559.6,839.1 561.6,836.7 563.7,835.0 565.7,834.7 567.7,831.8 569.8,830.2 571.8,829.4 573.8,828.3 575.9,826.3 577.9,824.8 579.9,822.8 582.0,821.9 584.0,821.8 586.0,819.4 588.1,819.6 590.1,817.4 592.1,818.3 594.2,817.7 596.2,817.7 598.2,817.6 600.3,816.8 602.3,817.6 604.4,818.5 606.4,819.5 608.4,821.7 610.5,822.3 612.5,823.6 614.5,825.3 616.6,825.9 618.6,828.1 620.6,829.7 622.7,831.5 624.7,833.7 626.7,833.8 628.8,835.0 630.8,837.1 632.8,839.2 634.9,841.4 636.9,841.4 638.9,842.1 641.0,843.8 643.0,844.6 645.1,845.4 647.1,846.6 649.1,848.1 651.2,848.4 653.2,849.3 655.2,850.9 657.3,851.1 659.3,852.1 661.3,852.2 663.4,852.5 665.4,853.6 667.4,854.4 669.5,853.7 671.5,854.4 673.5,854.4 675.6,855.7 677.6,855.3 679.6,855.3 681.7,855.7 683.7,856.7 685.8,856.8 687.8,857.2 689.8,857.1 691.9,857.4 693.9,857.9 695.9,858.5 698.0,858.1 700.0,858.6 702.0,858.5 704.1,858.8 706.1,858.6 708.1,858.9 710.2,859.5 713.2,859.5 716.3,859.3 719.3,860.1 722.4,860.0 725.4,860.0 728.5,860.1 731.5,860.3 734.6,860.8 737.6,860.9 740.7,860.7 743.8,860.7 746.8,860.4 749.9,861.1 752.9,860.7 756.0,860.8 759.0,861.3 762.1,861.2 765.1,861.0 768.2,861.2 771.2,861.1 774.3,861.0 777.3,861.3 780.4,861.1 783.4,861.3 786.5,861.3 789.5,861.1 792.6,861.3 795.6,861.1 798.7,860.9 801.7,861.2 804.8,861.2 807.9,861.1 810.9,861.2 814.0,861.0 817.0,861.4 820.1,861.1 823.1,861.3 826.2,861.3 829.2,860.9 832.3,861.3 835.3,860.9 838.4,861.1 841.4,861.0 844.5,861.3 847.5,861.0 850.6,861.0 853.6,861.2 856.7,861.2 859.7,860.8 862.8,861.2 865.9,861.3 868.9,861.3 872.0,861.1 875.0,861.2 878.1,861.2 881.1,860.9 884.2,861.2 887.2,861.1 890.3,861.0 893.3,861.3 896.4,861.0 899.4,860.9 902.5,861.4 905.5,861.4 908.6,861.4 911.6,861.5"/>
<polyline stroke="#38c8c8" points="450.7,860.8 453.8,861.2 456.8,860.6 459.9,860.4 462.9,860.9 466.0,860.5 469.0,860.7 472.1,860.0 475.1,860.2 478.2,859.9 481.2,859.7 484.3,859.3 487.3,859.3 490.4,858.9 493.4,858.8 496.5,858.3 499.5,858.3 502.6,857.6 505.7,857.7 508.7,856.8 511.8,855.6 514.8,855.6 516.8,855.6 518.9,854.7 520.9,854.7 523.0,854.4 525.0,853.6 527.0,852.5 529.1,852.0 531.1,851.6 533.1,851.2 535.2,850.5 537.2,848.7 539.2,848.3 541.3,847.9 543.3,847.4 545.3,846.0 547.4,843.0 549.4,843.5 551.4,841.6 553.5,840.0 555.5,838.7 557.5,837.1 559.6,836.0 561.6,834.1 563.7,830.8 565.7,830.3 567.7,827.5 569.8,827.2 571.8,824.4 573.8,822.3 575.9,820.0 577.9,819.6 579.9,816.9 582.0,815.5 584.0,814.9 586.0,813.0 588.1,812.9 590.1,812.1 592.1,811.0 594.2,812.5 596.2,810.6 598.2,811.4 600.3,812.1 602.3,812.0 604.4,812.0 606.4,813.8 608.4,813.9 610.5,816.8 612.5,818.4 614.5,818.2 616.6,820.7 618.6,822.1 620.6,825.0 622.7,825.9 624.7,828.1 626.7,829.7 628.8,831.9 630.8,833.0 632.8,835.7 634.9,837.4 636.9,839.2 638.9,839.4 641.0,841.7 643.0,843.1 645.1,844.2 647.1,845.1 649.1,846.5 651.2,847.1 653.2,848.1 655.2,848.9 657.3,849.8 659.3,850.1 661.3,851.0 663.4,851.4 665.4,851.9 667.4,852.4 669.5,853.9 671.5,853.7 673.5,854.3 675.6,854.2 677.6,855.4 679.6,855.4 681.7,855.7 683.7,856.0 685.8,855.9 687.8,856.7 689.8,856.5 691.9,857.6 693.9,857.9 695.9,857.3 698.0,857.8 700.0,858.0 702.0,858.3 704.1,858.4 706.1,859.1 708.1,858.7 710.2,859.2 713.2,859.1 716.3,859.5 719.3,860.2 722.4,860.2 725.4,859.8 728.5,860.2 731.5,860.4 734.6,860.4 737.6,860.6 740.7,860.8 743.8,860.7 746.8,860.8 749.9,860.6 752.9,860.9 756.0,860.6 759.0,860.7 762.1,860.7 765.1,860.9 768.2,861.1 771.2,861.1 774.3,861.1 777.3,861.2 780.4,861.2 783.4,861.3 786.5,860.9 789.5,861.1 792.6,861.2 795.6,861.5 798.7,861.2 801.7,861.2 804.8,861.4 807.9,861.4 810.9,861.5 814.0,861.1 817.0,861.2 820.1,860.8 823.1,861.2 826.2,861.2 829.2,861.0 832.3,861.2 835.3,861.2 838.4,861.3 841.4,861.3 844.5,861.0 847.5,861.1 850.6,860.9 853.6,861.3 856.7,861.2 859.7,861.3 862.8,861.1 865.9,861.4 868.9,861.1 872.0,861.0 875.0,861.0 878.1,861.3 881.1,861.0 884.2,861.3 887.2,861.3 890.3,861.4 893.3,861.0 896.4,861.0 899.4,861.3 902.5,861.3 905.5,861.2 908.6,860.8 911.6,861.1"/>
<polyline stroke="#ffffff" points="450.7,860.9 453.8,861.1 456.8,860.8 459.9,860.3 462.9,860.1 466.0,860.4 469.0,860.4 472.1,860.2 475.1,860.3 478.2,859.5 481.2,859.7 484.3,859.0 487.3,859.4 490.4,859.0 493.4,858.2 496.5,858.2 499.5,857.3 502.6,857.1 505.7,857.0 508.7,855.9 511.8,855.2 514.8,855.5 516.8,853.8 518.9,853.8 520.9,853.2 523.0,853.6 525.0,852.6 527.0,851.8 529.1,850.6 531.1,850.8 533.1,849.8 535.2,849.5 537.2,847.8 539.2,846.6 541.3,846.4 543.3,844.8 545.3,843.0 547.4,841.2 549.4,840.2 551.4,839.1 553.5,838.0 555.5,836.1 557.5,834.2 559.6,831.8 561.6,830.0 563.7,826.9 565.7,825.6 567.7,824.3 569.8,820.6 571.8,818.8 573.8,817.2 575.9,815.7 577.9,814.6 579.9,812.2 582.0,809.2 584.0,808.8 586.0,807.9 588.1,805.7 590.1,804.8 592.1,803.9 594.2,803.5 596.2,802.9 598.2,804.7 600.3,803.8 602.3,805.9 604.4,805.6 606.4,807.1 608.4,808.4 610.5,809.5 612.5,811.9 614.5,812.9 616.6,815.0 618.6,817.5 620.6,820.1 622.7,822.3 624.7,824.2 626.7,826.1 628.8,828.0 630.8,828.3 632.8,831.5 634.9,833.3 636.9,835.9 638.9,837.5 641.0,838.9 643.0,840.1 645.1,842.0 647.1,842.0 649.1,844.2 651.2,844.6 653.2,847.1 655.2,847.0 657.3,847.8 659.3,848.6 661.3,849.2 663.4,850.0 665.4,850.8 667.4,852.1 669.5,852.3 671.5,853.4 673.5,852.8 675.6,853.4 677.6,854.0 679.6,854.7 681.7,855.0 683.7,854.6 685.8,855.0 687.8,856.0 689.8,855.9 691.9,857.1 693.9,857.5 695.9,857.3 698.0,857.7 700.0,857.9 702.0,857.9 704.1,857.3 706.1,858.6 708.1,858.6 710.2,858.7 713.2,859.1 716.3,859.1 719.3,859.1 722.4,860.0 725.4,859.9 728.5,860.1 731.5,860.2 734.6,860.7 737.6,860.8 740.7,861.0 743.8,860.6 746.8,860.7 749.9,860.8 752.9,861.3 756.0,861.0 759.0,861.1 762.1,861.3 765.1,861.2 768.2,860.9 771.2,861.0 774.3,861.1 777.3,861.0 780.4,861.2 783.4,861.1 786.5,861.1 789.5,861.1 792.6,861.2 795.6,861.2 798.7,861.2 801.7,861.3 804.8,860.8 807.9,861.1 810.9,861.1 814.0,860.8 817.0,861.0 820.1,861.4 823.1,861.1 826.2,861.1 829.2,860.9 832.3,861.0 835.3,861.1 838.4,861.4 841.4,861.3 844.5,861.2 847.5,861.1 850.6,861.3 853.6,861.3 856.7,861.3 859.7,861.2 862.8,861.2 865.9,861.2 868.9,861.4 872.0,861.0 875.0,861.0 878.1,861.2 881.1,861.1 884.2,861.1 887.2,861.1 890.3,861.1 893.3,861.3 896.4,861.1 899.4,861.1 902.5,861.3 905.5,860.9 908.6,860.9 911.6,860.9"/>
<polyline stroke="#ff3030" points="450.7,860.4 453.8,860.6 456.8,860.7 459.9,860.6 462.9,860.6 466.0,860.2 469.0,860.1 472.1,859.8 475.1,860.2 478.2,859.0 481.2,858.7 484.3,859.0 487.3,858.5 490.4,858.2 493.4,857.9 496.5,857.6 499.5,857.2 502.6,856.9 505.7,856.0 508.7,855.5 511.8,854.7 514.8,854.4 516.8,853.6 518.9,853.1 520.9,852.3 523.0,852.3 525.0,851.1 527.0,850.2 529.1,849.6 531.1,849.2 533.1,848.3 535.2,847.3 537.2,845.9 539.2,844.4 541.3,844.0 543.3,842.9 545.3,841.0 547.4,839.6 549.4,838.6 551.4,836.8 553.5,834.7 555.5,832.3 557.5,831.3 559.6,829.1 561.6,826.1 563.7,824.8 565.7,821.7 567.7,819.1 569.8,817.1 571.8,815.3 573.8,812.3 575.9,810.2 577.9,807.6 579.9,806.4 582.0,803.1 584.0,803.4 586.0,800.9 588.1,799.5 590.1,797.8 592.1,798.3 594.2,797.0 596.2,797.8 598.2,797.0 600.3,796.7 602.3,799.1 604.4,799.5 606.4,801.7 608.4,801.9 610.5,803.4 612.5,806.2 614.5,809.0 616.6,810.1 618.6,811.9 620.6,814.2 622.7,816.8 624.7,820.8 626.7,822.3 628.8,823.3 630.8,827.1 632.8,827.9 634.9,829.5 636.9,832.1 638.9,833.8 641.0,836.3 643.0,838.4 645.1,839.3 647.1,840.8 649.1,842.0 651.2,842.9 653.2,844.4 655.2,845.3 657.3,846.2 659.3,847.3 661.3,847.3 663.4,848.7 665.4,849.6 667.4,850.4 669.5,851.2 671.5,851.0 673.5,852.1 675.6,853.0 677.6,853.4 679.6,853.7 681.7,854.2 683.7,854.2 685.8,855.3 687.8,855.2 689.8,855.7 691.9,856.4 693.9,856.4 695.9,856.7 698.0,856.9 700.0,857.4 702.0,857.5 704.1,858.3 706.1,858.4 708.1,858.1 710.2,858.3 713.2,858.8 716.3,859.3 719.3,859.1 722.4,860.1 725.4,860.0 728.5,859.8 731.5,860.0 734.6,860.5 737.6,860.8 740.7,860.2 743.8,860.6 746.8,860.9 749.9,860.7 752.9,860.7 756.0,861.4 759.0,860.7 762.1,860.8 765.1,861.4 768.2,860.9 771.2,861.4 774.3,860.9 777.3,861.0 780.4,860.7 783.4,861.2 786.5,861.1 789.5,861.0 792.6,861.3 795.6,861.3 798.7,861.2 801.7,861.2 804.8,861.4 807.9,861.1 810.9,861.1 814.0,861.2 817.0,860.9 820.1,861.2 823.1,861.0 826.2,861.3 829.2,861.1 832.3,861.5 835.3,861.2 838.4,861.2 841.4,861.3 844.5,861.3 847.5,861.3 850.6,861.3 853.6,861.5 856.7,861.3 859.7,861.3 862.8,861.3 865.9,861.4 868.9,861.2 872.0,861.1 875.0,861.2 878.1,861.3 881.1,861.0 884.2,861.1 887.2,861.1 890.3,861.0 893.3,861.2 896.4,861.2 899.4,861.0 902.5,861.3 905.5,861.2 908.6,861.1 911.6,861.1"/>
<polyline stroke="#00ff00" points="450.7,860.8 453.8,860.5 456.8,860.6 459.9,860.3 462.9,860.1 466.0,860.0 469.0,859.8 472.1,860.1 475.1,859.9 478.2,859.5 481.2,858.9 484.3,858.4 487.3,858.8 490.4,858.0 493.4,857.9 496.5,857.4 499.5,856.8 502.6,855.9 505.7,855.5 508.7,854.5 511.8,854.5 514.8,853.1 516.8,852.5 518.9,852.2 520.9,851.5 523.0,851.2 525.0,850.7 527.0,849.6 529.1,848.9 531.1,846.5 533.1,847.0 535.2,845.0 537.2,844.5 539.2,843.2 541.3,841.7 543.3,841.0 545.3,838.7 547.4,837.3 549.4,836.5 551.4,833.5 553.5,831.6 555.5,829.5 557.5,826.6 559.6,825.4 561.6,822.4 563.7,819.7 565.7,818.2 567.7,814.2 569.8,813.4 571.8,810.7 573.8,806.8 575.9,805.5 577.9,802.4 579.9,801.2 582.0,797.9 584.0,796.9 586.0,794.2 588.1,794.3 590.1,791.7 592.1,791.5 594.2,790.8 596.2,790.7 598.2,790.8 600.3,792.4 602.3,794.2 604.4,793.4 606.4,795.5 608.4,796.8 610.5,798.1 612.5,801.9 614.5,803.3 616.6,805.5 618.6,808.3 620.6,809.9 622.7,812.8 624.7,815.8 626.7,818.5 628.8,819.8 630.8,823.2 632.8,824.8 634.9,827.1 636.9,830.6 638.9,832.2 641.0,833.5 643.0,835.1 645.1,836.6 647.1,838.1 649.1,839.5 651.2,841.5 653.2,842.7 655.2,843.4 657.3,845.0 659.3,845.4 661.3,847.4 663.4,847.3 665.4,848.5 667.4,850.0 669.5,849.5 671.5,850.4 673.5,851.2 675.6,852.2 677.6,852.5 679.6,852.3 681.7,853.6 683.7,855.0 685.8,854.6 687.8,855.1 689.8,855.2 691.9,855.7 693.9,856.2 695.9,856.5 698.0,856.3 700.0,857.3 702.0,856.6 704.1,857.6 706.1,858.1 708.1,857.8 710.2,858.1 713.2,858.9 716.3,858.7 719.3,859.6 722.4,859.6 725.4,859.4 728.5,859.9 731.5,860.3 734.6,860.1 737.6,860.1 740.7,860.4 743.8,860.9 746.8,860.7 749.9,860.6 752.9,860.6 756.0,860.5 759.0,860.9 762.1,861.0 765.1,861.0 768.2,860.8 771.2,861.2 774.3,860.9 777.3,861.6 780.4,861.0 783.4,861.2 786.5,861.1 789.5,861.0 792.6,861.4 795.6,861.2 798.7,861.1 801.7,861.1 804.8,861.3 807.9,861.3 810.9,861.5 814.0,860.8 817.0,861.2 820.1,861.2 823.1,861.4 826.2,861.1 829.2,861.3 832.3,861.0 835.3,861.1 838.4,861.2 841.4,861.1 844.5,861.4 847.5,861.2 850.6,861.3 853.6,861.4 856.7,861.2 859.7,861.2 862.8,861.0 865.9,861.7 868.9,861.3 872.0,861.3 875.0,861.3 878.1,861.1 881.1,861.1 884.2,861.2 887.2,861.3 890.3,861.1 893.3,861.1 896.4,861.5 899.4,861.2 902.5,861.4 905.5,861.4 908.6,861.2 911.6,861.2"/>
<polyline stroke="#30a0f0" points="450.7,860.7 453.8,860.8 456.8,860.5 459.9,860.6 462.9,860.1 466.0,859.9 469.0,859.5 472.1,859.4 475.1,859.6 478.2,859.3 481.2,859.1 484.3,858.5 487.3,857.6 490.4,857.6 493.4,858.0 496.5,857.2 499.5,856.7 502.6,855.5 505.7,855.0 508.7,854.2 511.8,852.9 514.8,853.0 516.8,852.4 518.9,850.7 520.9,850.6 523.0,850.3 525.0,850.1 527.0,849.0 529.1,848.5 531.1,846.5 533.1,845.4 535.2,843.8 537.2,843.1 539.2,842.1 541.3,840.7 543.3,837.8 545.3,838.0 547.4,835.2 549.4,833.4 551.4,831.0 553.5,829.4 555.5,826.5 557.5,823.9 559.6,821.9 561.6,819.5 563.7,816.5 565.7,814.2 567.7,810.9 569.8,808.1 571.8,804.9 573.8,801.2 575.9,798.5 577.9,797.2 579.9,793.9 582.0,791.9 584.0,789.5 586.0,788.3 588.1,786.6 590.1,786.0 592.1,785.4 594.2,783.6 596.2,783.1 598.2,783.9 600.3,784.6 602.3,785.7 604.4,787.5 606.4,790.1 608.4,790.0 610.5,792.4 612.5,795.3 614.5,798.0 616.6,799.0 618.6,803.9 620.6,804.2 622.7,807.8 624.7,809.4 626.7,814.3 628.8,816.6 630.8,819.6 632.8,821.7 634.9,824.4 636.9,827.1 638.9,828.2 641.0,831.4 643.0,833.2 645.1,834.4 647.1,836.7 649.1,838.3 651.2,839.3 653.2,841.1 655.2,842.7 657.3,843.4 659.3,844.5 661.3,844.7 663.4,846.8 665.4,846.8 667.4,848.4 669.5,849.0 671.5,849.7 673.5,850.1 675.6,850.6 677.6,850.8 679.6,852.3 681.7,852.1 683.7,852.8 685.8,853.4 687.8,854.4 689.8,854.3 691.9,855.0 693.9,855.3 695.9,855.9 698.0,855.9 700.0,856.2 702.0,856.5 704.1,857.2 706.1,857.2 708.1,857.3 710.2,858.2 713.2,857.9 716.3,859.0 719.3,858.8 722.4,859.1 725.4,859.1 728.5,859.6 731.5,860.0 734.6,860.2 737.6,860.5 740.7,860.2 743.8,860.5 746.8,860.7 749.9,860.6 752.9,860.9 756.0,860.9 759.0,861.0 762.1,860.6 765.1,860.7 768.2,861.0 771.2,861.3 774.3,861.0 777.3,861.1 780.4,861.0 783.4,861.0 786.5,861.2 789.5,861.0 792.6,861.0 795.6,861.1 798.7,861.2 801.7,861.3 804.8,861.1 807.9,861.4 810.9,861.2 814.0,861.3 817.0,861.4 820.1,861.1 823.1,861.2 826.2,861.2 829.2,861.1 832.3,861.4 835.3,861.2 838.4,861.2 841.4,861.1 844.5,861.4 847.5,861.1 850.6,861.2 853.6,861.0 856.7,861.0 859.7,861.1 862.8,860.9 865.9,861.2 868.9,861.3 872.0,861.2 875.0,861.3 878.1,861.2 881.1,861.5 884.2,861.2 887.2,861.1 890.3,861.1 893.3,861.3 896.4,861.0 899.4,861.3 902.5,861.2 905.5,861.5 908.6,861.3 911.6,861.3"/>
<polyline stroke="#a8c848" points="450.7,860.3 453.8,860.4 456.8,860.6 459.9,860.2 462.9,860.0 466.0,860.0 469.0,859.7 472.1,859.6 475.1,859.4 478.2,859.4 481.2,858.6 484.3,857.9 487.3,857.4 490.4,857.4 493.4,857.1 496.5,856.4 499.5,855.4 502.6,854.9 505.7,854.5 508.7,853.4 511.8,852.7 514.8,851.5 516.8,851.2 518.9,850.8 520.9,849.5 523.0,848.4 525.0,848.2 527.0,846.9 529.1,845.4 531.1,844.9 533.1,843.8 535.2,841.3 537.2,840.5 539.2,838.9 541.3,838.3 543.3,835.2 545.3,835.1 547.4,832.5 549.4,829.6 551.4,827.0 553.5,825.8 555.5,823.1 557.5,819.8 559.6,818.3 561.6,813.7 563.7,810.7 565.7,808.2 567.7,804.3 569.8,800.9 571.8,798.0 573.8,794.7 575.9,790.9 577.9,789.5 579.9,786.2 582.0,784.2 584.0,780.7 586.0,779.8 588.1,777.5 590.1,776.4 592.1,775.5 594.2,773.6 596.2,775.0 598.2,774.0 600.3,775.1 602.3,775.7 604.4,778.3 606.4,779.2 608.4,781.4 610.5,784.8 612.5,786.7 614.5,789.7 616.6,792.6 618.6,794.6 620.6,799.2 622.7,803.0 624.7,806.2 626.7,808.4 628.8,811.6 630.8,814.2 632.8,816.7 634.9,818.8 636.9,822.3 638.9,824.7 641.0,827.7 643.0,829.2 645.1,830.8 647.1,832.8 649.1,836.3 651.2,836.5 653.2,837.7 655.2,839.5 657.3,841.9 659.3,842.5 661.3,843.3 663.4,844.4 665.4,845.9 667.4,846.9 669.5,846.9 671.5,848.7 673.5,848.4 675.6,849.6 677.6,850.2 679.6,851.5 681.7,851.8 683.7,851.9 685.8,853.3 687.8,852.6 689.8,854.2 691.9,854.7 693.9,854.7 695.9,855.0 698.0,855.3 700.0,856.1 702.0,856.4 704.1,856.7 706.1,857.2 708.1,858.0 710.2,857.3 713.2,857.9 716.3,858.3 719.3,858.9 722.4,858.9 725.4,859.3 728.5,859.5 731.5,859.5 734.6,860.3 737.6,860.0 740.7,860.5 743.8,860.5 746.8,860.2 749.9,860.8 752.9,860.7 756.0,860.9 759.0,860.7 762.1,861.1 765.1,861.2 768.2,860.9 771.2,861.1 774.3,861.1 777.3,860.9 780.4,861.2 783.4,861.2 786.5,861.1 789.5,861.1 792.6,861.2 795.6,861.0 798.7,860.8 801.7,861.2 804.8,860.9 807.9,861.5 810.9,861.0 814.0,861.2 817.0,861.2 820.1,861.2 823.1,861.3 826.2,861.4 829.2,861.3 832.3,861.0 835.3,861.0 838.4,861.2 841.4,861.3 844.5,861.3 847.5,861.4 850.6,860.9 853.6,861.1 856.7,861.2 859.7,861.3 862.8,861.3 865.9,861.0 868.9,861.1 872.0,861.3 875.0,861.1 878.1,861.4 881.1,861.1 884.2,861.3 887.2,861.3 890.3,861.1 893.3,861.1 896.4,861.1 899.4,861.3 902.5,861.0 905.5,861.0 908.6,861.2 911.6,861.1"/>
<polyline stroke="#a050ff" points="450.7,860.7 453.8,860.5 456.8,860.6 459.9,860.2 462.9,860.0 466.0,859.5 469.0,859.4 472.1,859.1 475.1,859.1 478.2,858.8 481.2,858.4 484.3,857.9 487.3,858.0 490.4,856.8 493.4,856.9 496.5,856.0 499.5,855.2 502.6,854.6 505.7,853.1 508.7,852.8 511.8,851.3 514.8,850.4 516.8,850.3 518.9,849.1 520.9,847.9 523.0,847.7 525.0,846.5 527.0,845.8 529.1,844.4 531.1,843.4 533.1,841.9 535.2,840.1 537.2,838.4 539.2,837.4 541.3,835.6 543.3,833.3 545.3,831.9 547.4,830.1 549.4,826.6 551.4,825.2 553.5,821.5 555.5,819.8 557.5,815.1 559.6,813.7 561.6,809.3 563.7,805.4 565.7,803.7 567.7,798.5 569.8,796.6 571.8,793.8 573.8,788.5 575.9,785.2 577.9,782.7 579.9,781.5 582.0,776.8 584.0,774.5 586.0,772.4 588.1,770.5 590.1,770.3 592.1,768.3 594.2,765.7 596.2,765.7 598.2,767.6 600.3,768.6 602.3,768.8 604.4,769.8 606.4,771.9 608.4,775.7 610.5,777.2 612.5,780.0 614.5,782.0 616.6,785.4 618.6,789.2 620.6,792.1 622.7,796.7 624.7,798.8 626.7,803.6 628.8,806.4 630.8,809.3 632.8,813.6 634.9,816.5 636.9,820.0 638.9,821.6 641.0,824.2 643.0,826.8 645.1,828.6 647.1,832.1 649.1,832.9 651.2,834.6 653.2,836.5 655.2,837.5 657.3,838.5 659.3,840.9 661.3,842.3 663.4,843.3 665.4,844.1 667.4,844.9 669.5,846.4 671.5,846.6 673.5,848.2 675.6,848.3 677.6,849.2 679.6,849.9 681.7,849.9 683.7,851.5 685.8,852.0 687.8,852.4 689.8,852.8 691.9,854.1 693.9,854.0 695.9,854.8 698.0,854.8 700.0,855.0 702.0,855.9 704.1,856.3 706.1,856.6 708.1,857.8 710.2,857.0 713.2,857.6 716.3,858.1 719.3,858.6 722.4,859.0 725.4,859.1 728.5,859.1 731.5,859.6 734.6,859.5 737.6,860.6 740.7,860.3 743.8,860.3 746.8,860.4 749.9,860.9 752.9,860.8 756.0,860.5 759.0,861.0 762.1,861.0 765.1,861.1 768.2,861.1 771.2,860.9 774.3,860.9 777.3,861.4 780.4,860.8 783.4,861.2 786.5,861.2 789.5,860.9 792.6,861.2 795.6,861.3 798.7,861.3 801.7,861.3 804.8,861.3 807.9,861.2 810.9,861.1 814.0,861.1 817.0,861.4 820.1,860.8 823.1,861.3 826.2,861.2 829.2,861.2 832.3,861.1 835.3,861.2 838.4,861.1 841.4,860.9 844.5,861.2 847.5,861.4 850.6,861.2 853.6,861.3 856.7,861.3 859.7,861.2 862.8,861.2 865.9,861.2 868.9,861.1 872.0,861.2 875.0,861.4 878.1,861.1 881.1,861.3 884.2,861.0 887.2,861.3 890.3,861.1 893.3,861.2 896.4,861.6 899.4,861.4 902.5,861.4 905.5,861.0 908.6,861.5 911.6,861.1"/>
<polyline stroke="#ffa020" points="450.7,860.3 453.8,860.3 456.8,860.1 459.9,860.2 462.9,859.9 466.0,859.7 469.0,859.4 472.1,859.0 475.1,858.9 478.2,858.7 481.2,858.3 484.3,857.6 487.3,857.7 490.4,857.1 493.4,856.2 496.5,855.7 499.5,854.9 502.6,854.9 505.7,853.3 508.7,852.3 511.8,850.9 514.8,850.9 516.8,849.4 518.9,848.3 520.9,847.4 523.0,846.1 525.0,845.1 527.0,844.9 529.1,843.0 531.1,842.1 533.1,841.0 535.2,838.4 537.2,837.8 539.2,836.2 541.3,834.1 543.3,832.4 545.3,829.2 547.4,827.2 549.4,824.1 551.4,821.9 553.5,819.7 555.5,815.6 557.5,813.5 559.6,810.1 561.6,806.4 563.7,802.7 565.7,798.2 567.7,795.7 569.8,791.3 571.8,787.8 573.8,785.1 575.9,781.4 577.9,777.3 579.9,773.6 582.0,770.7 584.0,767.9 586.0,765.9 588.1,764.4 590.1,762.1 592.1,762.2 594.2,761.9 596.2,760.9 598.2,762.1 600.3,762.1 602.3,763.5 604.4,764.9 606.4,766.5 608.4,769.5 610.5,771.9 612.5,775.9 614.5,777.6 616.6,781.9 618.6,784.4 620.6,790.5 622.7,792.6 624.7,795.5 626.7,801.1 628.8,803.2 630.8,806.3 632.8,809.7 634.9,813.9 636.9,815.9 638.9,818.9 641.0,822.3 643.0,823.8 645.1,826.7 647.1,828.9 649.1,831.2 651.2,832.6 653.2,834.6 655.2,835.7 657.3,837.6 659.3,839.6 661.3,840.7 663.4,841.4 665.4,843.1 667.4,843.9 669.5,844.8 671.5,846.1 673.5,847.9 675.6,847.7 677.6,848.4 679.6,849.2 681.7,850.3 683.7,850.2 685.8,851.4 687.8,852.2 689.8,852.8 691.9,853.0 693.9,854.0 695.9,854.5 698.0,854.0 700.0,854.6 702.0,855.2 704.1,855.5 706.1,856.1 708.1,857.2 710.2,856.6 713.2,857.1 716.3,857.8 719.3,858.8 722.4,858.3 725.4,858.6 728.5,859.4 731.5,859.5 734.6,859.5 737.6,859.9 740.7,859.9 743.8,860.2 746.8,860.2 749.9,860.5 752.9,860.9 756.0,860.9 759.0,860.2 762.1,860.8 765.1,860.7 768.2,860.7 771.2,860.7 774.3,860.9 777.3,861.2 780.4,861.1 783.4,861.4 786.5,861.1 789.5,861.0 792.6,861.5 795.6,861.1 798.7,861.0 801.7,861.0 804.8,861.3 807.9,861.3 810.9,861.5 814.0,861.3 817.0,861.1 820.1,860.9 823.1,861.4 826.2,861.0 829.2,861.1 832.3,861.3 835.3,860.9 838.4,861.6 841.4,861.2 844.5,861.2 847.5,860.9 850.6,860.9 853.6,860.9 856.7,861.2 859.7,861.1 862.8,861.0 865.9,861.1 868.9,861.1 872.0,861.2 875.0,861.3 878.1,861.4 881.1,860.9 884.2,861.3 887.2,861.5 890.3,861.2 893.3,861.2 896.4,861.2 899.4,860.9 902.5,861.2 905.5,861.2 908.6,861.3 911.6,861.2"/>
<polyline stroke="#3c3cff" points="450.7,860.6 453.8,860.3 456.8,859.5 459.9,859.9 462.9,860.0 466.0,859.1 469.0,859.1 472.1,858.8 475.1,858.5 478.2,858.1 481.2,857.7 484.3,857.0 487.3,856.6 490.4,855.9 493.4,855.8 496.5,855.0 499.5,854.4 502.6,853.0 505.7,852.1 508.7,851.6 511.8,850.1 514.8,848.0 516.8,847.7 518.9,847.8 520.9,846.3 523.0,845.0 525.0,844.1 527.0,842.7 529.1,841.1 531.1,840.1 533.1,839.3 535.2,836.7 537.2,835.4 539.2,833.4 541.3,831.7 543.3,830.0 545.3,827.6 547.4,824.5 549.4,822.2 551.4,820.3 553.5,814.8 555.5,813.0 557.5,809.2 559.6,804.7 561.6,803.0 563.7,796.4 565.7,793.9 567.7,788.8 569.8,785.5 571.8,780.8 573.8,777.0 575.9,773.2 577.9,771.0 579.9,767.2 582.0,762.7 584.0,758.5 586.0,757.7 588.1,754.6 590.1,753.3 592.1,751.8 594.2,750.6 596.2,752.7 598.2,751.4 600.3,752.7 602.3,754.1 604.4,756.4 606.4,758.5 608.4,761.3 610.5,764.3 612.5,764.5 614.5,768.7 616.6,773.8 618.6,777.1 620.6,782.4 622.7,787.8 624.7,791.1 626.7,793.6 628.8,796.5 630.8,801.4 632.8,805.7 634.9,808.7 636.9,812.6 638.9,816.0 641.0,818.2 643.0,821.1 645.1,824.0 647.1,826.4 649.1,828.7 651.2,830.2 653.2,831.5 655.2,834.1 657.3,834.6 659.3,838.1 661.3,838.6 663.4,840.6 665.4,841.4 667.4,842.4 669.5,843.3 671.5,844.1 673.5,845.8 675.6,847.0 677.6,847.4 679.6,848.1 681.7,849.3 683.7,849.4 685.8,849.8 687.8,851.6 689.8,851.6 691.9,852.0 693.9,853.6 695.9,853.4 698.0,854.1 700.0,855.0 702.0,854.6 704.1,855.4 706.1,856.0 708.1,856.1 710.2,856.4 713.2,856.9 716.3,857.4 719.3,857.9 722.4,858.7 725.4,858.9 728.5,859.0 731.5,860.0 734.6,859.1 737.6,859.9 740.7,860.2 743.8,860.6 746.8,860.3 749.9,860.4 752.9,860.7 756.0,860.7 759.0,860.9 762.1,860.9 765.1,860.9 768.2,861.0 771.2,860.8 774.3,861.0 777.3,861.0 780.4,861.0 783.4,860.9 786.5,861.0 789.5,861.1 792.6,861.2 795.6,861.3 798.7,861.2 801.7,861.1 804.8,861.1 807.9,861.2 810.9,861.4 814.0,861.4 817.0,861.1 820.1,861.0 823.1,861.1 826.2,861.4 829.2,861.2 832.3,861.2 835.3,861.3 838.4,861.1 841.4,861.2 844.5,861.3 847.5,861.4 850.6,861.1 853.6,861.1 856.7,861.3 859.7,861.3 862.8,861.1 865.9,861.1 868.9,861.2 872.0,861.0 875.0,861.2 878.1,861.4 881.1,861.0 884.2,861.2 887.2,861.2 890.3,861.2 893.3,861.3 896.4,861.4 899.4,861.2 902.5,861.0 905.5,861.3 908.6,861.0 911.6,861.2"/>
<polyline stroke="#e040b0" points="450.7,860.6 453.8,860.2 456.8,860.0 459.9,860.1 462.9,860.2 466.0,859.3 469.0,859.4 472.1,858.7 475.1,858.9 478.2,858.0 481.2,857.7 484.3,857.4 487.3,856.5 490.4,855.7 493.4,855.2 496.5,854.7 499.5,853.3 502.6,853.1 505.7,851.2 508.7,850.1 511.8,848.4 514.8,847.4 516.8,846.6 518.9,845.7 520.9,844.7 523.0,844.1 525.0,841.6 527.0,840.7 529.1,839.6 531.1,838.5 533.1,835.5 535.2,834.2 537.2,833.2 539.2,830.1 541.3,827.1 543.3,825.7 545.3,822.8 547.4,820.5 549.4,817.6 551.4,813.3 553.5,808.4 555.5,806.7 557.5,803.0 559.6,798.3 561.6,794.9 563.7,789.8 565.7,785.3 567.7,782.2 569.8,777.7 571.8,772.4 573.8,767.1 575.9,763.3 577.9,758.3 579.9,756.7 582.0,751.5 584.0,749.2 586.0,745.8 588.1,743.2 590.1,742.6 592.1,740.5 594.2,740.6 596.2,739.1 598.2,740.5 600.3,741.1 602.3,741.8 604.4,744.6 606.4,745.4 608.4,749.9 610.5,751.9 612.5,756.0 614.5,761.0 616.6,764.4 618.6,769.3 620.6,773.2 622.7,777.6 624.7,780.4 626.7,786.6 628.8,789.4 630.8,794.5 632.8,799.8 634.9,804.4 636.9,806.0 638.9,811.3 641.0,812.9 643.0,815.8 645.1,819.1 647.1,822.2 649.1,824.7 651.2,826.7 653.2,829.2 655.2,831.3 657.3,833.1 659.3,834.0 661.3,836.6 663.4,837.5 665.4,839.7 667.4,840.8 669.5,842.3 671.5,842.9 673.5,843.6 675.6,844.8 677.6,846.1 679.6,846.5 681.7,847.8 683.7,848.3 685.8,849.1 687.8,849.8 689.8,851.6 691.9,851.9 693.9,851.8 695.9,852.7 698.0,852.4 700.0,853.9 702.0,854.5 704.1,854.3 706.1,855.1 708.1,855.1 710.2,856.0 713.2,856.7 716.3,857.0 719.3,857.9 722.4,858.2 725.4,858.6 728.5,858.9 731.5,858.9 734.6,859.5 737.6,859.6 740.7,860.0 743.8,859.9 746.8,860.8 749.9,860.4 752.9,860.5 756.0,860.8 759.0,860.5 762.1,860.7 765.1,860.6 768.2,860.7 771.2,860.8 774.3,861.0 777.3,861.2 780.4,861.1 783.4,861.2 786.5,861.1 789.5,861.2 792.6,860.6 795.6,861.4 798.7,861.0 801.7,861.2 804.8,861.2 807.9,861.0 810.9,861.2 814.0,861.4 817.0,861.1 820.1,861.2 823.1,861.5 826.2,861.2 829.2,861.3 832.3,861.3 835.3,861.1 838.4,861.2 841.4,861.2 844.5,860.9 847.5,861.1 850.6,861.3 853.6,861.2 856.7,861.2 859.7,861.5 862.8,861.4 865.9,861.4 868.9,860.9 872.0,861.2 875.0,861.2 878.1,861.3 881.1,861.1 884.2,861.2 887.2,861.0 890.3,861.1 893.3,861.0 896.4,861.2 899.4,861.1 902.5,861.3 905.5,861.2 908.6,861.4 911.6,861.3"/>
<polyline stroke="#38c8c8" points="450.7,860.5 453.8,860.3 456.8,859.7 459.9,859.7 462.9,859.3 466.0,859.1 469.0,858.7 472.1,858.4 475.1,858.4 478.2,857.5 481.2,857.4 484.3,856.9 487.3,855.7 490.4,854.7 493.4,854.9 496.5,853.2 499.5,852.6 502.6,852.2 505.7,850.7 508.7,849.4 511.8,848.1 514.8,847.0 516.8,846.3 518.9,844.7 520.9,843.1 523.0,841.9 525.0,840.6 527.0,839.0 529.1,838.4 531.1,836.3 533.1,834.3 535.2,832.0 537.2,830.4 539.2,828.0 541.3,825.7 543.3,822.0 545.3,821.7 547.4,817.4 549.4,812.5 551.4,810.5 553.5,808.1 555.5,802.9 557.5,799.9 559.6,795.0 561.6,789.8 563.7,784.0 565.7,780.2 567.7,775.2 569.8,770.0 571.8,765.8 573.8,762.0 575.9,756.7 577.9,751.9 579.9,748.3 582.0,744.8 584.0,741.1 586.0,739.1 588.1,736.2 590.1,733.3 592.1,732.1 594.2,730.9 596.2,729.3 598.2,730.8 600.3,732.1 602.3,734.8 604.4,736.8 606.4,738.0 608.4,742.3 610.5,744.6 612.5,749.8 614.5,752.9 616.6,757.5 618.6,761.1 620.6,767.0 622.7,771.8 624.7,776.0 626.7,780.9 628.8,784.3 630.8,790.3 632.8,794.9 634.9,798.9 636.9,802.3 638.9,806.2 641.0,809.5 643.0,814.2 645.1,814.8 647.1,818.2 649.1,822.0 651.2,825.2 653.2,826.7 655.2,828.7 657.3,832.1 659.3,832.8 661.3,835.2 663.4,835.8 665.4,836.9 667.4,838.4 669.5,841.0 671.5,840.8 673.5,842.2 675.6,843.9 677.6,844.5 679.6,845.1 681.7,846.8 683.7,847.6 685.8,848.6 687.8,848.8 689.8,850.8 691.9,850.2 693.9,851.7 695.9,851.7 698.0,853.2 700.0,853.6 702.0,854.0 704.1,854.1 706.1,855.4 708.1,855.1 710.2,855.9 713.2,856.0 716.3,857.0 719.3,857.3 722.4,857.9 725.4,857.8 728.5,858.8 731.5,859.0 734.6,858.8 737.6,859.5 740.7,859.6 743.8,860.1 746.8,860.1 749.9,860.8 752.9,860.4 756.0,860.7 759.0,860.9 762.1,861.0 765.1,860.6 768.2,860.8 771.2,861.2 774.3,860.7 777.3,861.1 780.4,861.1 783.4,861.0 786.5,861.3 789.5,861.4 792.6,861.2 795.6,861.0 798.7,861.0 801.7,861.4 804.8,861.0 807.9,861.2 810.9,861.1 814.0,861.2 817.0,861.1 820.1,861.3 823.1,861.3 826.2,861.3 829.2,861.2 832.3,861.1 835.3,861.4 838.4,861.0 841.4,861.3 844.5,861.3 847.5,861.1 850.6,861.1 853.6,861.2 856.7,861.4 859.7,861.3 862.8,861.4 865.9,861.0 868.9,861.0 872.0,860.9 875.0,861.1 878.1,861.2 881.1,861.1 884.2,861.1 887.2,861.2 890.3,861.2 893.3,860.9 896.4,861.4 899.4,861.4 902.5,861.3 905.5,861.1 908.6,861.0 911.6,861.2"/>
<polyline stroke="#ffffff" points="450.7,860.1 453.8,860.1 456.8,859.9 459.9,859.8 462.9,859.4 466.0,859.1 469.0,858.5 472.1,857.8 475.1,858.5 478.2,857.4 481.2,857.0 484.3,856.1 487.3,855.4 490.4,854.7 493.4,853.9 496.5,853.6 499.5,852.9 502.6,850.6 505.7,849.6 508.7,849.1 511.8,846.8 514.8,845.5 516.8,845.8 518.9,843.1 520.9,842.7 523.0,840.4 525.0,839.8 527.0,838.3 529.1,837.1 531.1,834.6 533.1,832.1 535.2,830.9 537.2,829.4 539.2,824.7 541.3,822.2 543.3,820.1 545.3,817.8 547.4,815.0 549.4,811.8 551.4,806.7 553.5,802.2 555.5,799.6 557.5,794.4 559.6,790.0 561.6,785.2 563.7,779.6 565.7,773.2 567.7,770.2 569.8,763.8 571.8,758.3 573.8,754.4 575.9,749.4 577.9,745.7 579.9,739.0 582.0,736.4 584.0,732.8 586.0,728.9 588.1,727.1 590.1,725.2 592.1,722.9 594.2,720.2 596.2,721.7 598.2,721.4 600.3,724.4 602.3,726.5 604.4,725.1 606.4,730.1 608.4,734.5 610.5,736.8 612.5,740.3 614.5,746.9 616.6,750.9 618.6,754.7 620.6,760.8 622.7,764.4 624.7,769.4 626.7,774.9 628.8,780.6 630.8,785.1 632.8,790.2 634.9,794.3 636.9,798.3 638.9,802.7 641.0,805.7 643.0,808.2 645.1,813.6 647.1,816.1 649.1,818.7 651.2,821.5 653.2,824.5 655.2,826.9 657.3,828.2 659.3,830.4 661.3,832.3 663.4,834.7 665.4,835.6 667.4,837.0 669.5,838.9 671.5,839.8 673.5,840.3 675.6,843.4 677.6,843.3 679.6,845.2 681.7,846.2 683.7,846.7 685.8,847.3 687.8,848.3 689.8,849.6 691.9,850.5 693.9,850.9 695.9,851.4 698.0,852.4 700.0,853.2 702.0,852.7 704.1,854.1 706.1,854.4 708.1,855.1 710.2,855.5 713.2,856.0 716.3,856.7 719.3,857.0 722.4,858.0 725.4,858.5 728.5,858.0 731.5,858.9 734.6,859.0 737.6,859.1 740.7,859.5 743.8,859.9 746.8,860.4 749.9,860.6 752.9,860.2 756.0,860.4 759.0,860.5 762.1,861.0 765.1,861.2 768.2,861.0 771.2,861.1 774.3,860.9 777.3,861.2 780.4,860.8 783.4,861.2 786.5,861.2 789.5,861.0 792.6,861.1 795.6,861.3 798.7,861.0 801.7,860.9 804.8,861.4 807.9,861.2 810.9,861.3 814.0,861.5 817.0,861.1 820.1,861.1 823.1,861.0 826.2,861.1 829.2,861.5 832.3,861.2 835.3,861.3 838.4,861.4 841.4,861.4 844.5,861.1 847.5,861.2 850.6,860.9 853.6,861.1 856.7,861.5 859.7,861.1 862.8,861.0 865.9,861.2 868.9,861.4 872.0,860.9 875.0,861.4 878.1,861.2 881.1,861.5 884.2,861.4 887.2,861.4 890.3,861.0 893.3,861.0 896.4,861.3 899.4,861.4 902.5,861.2 905.5,861.1 908.6,861.4 911.6,861.4"/>
<polyline stroke="#ff3030" points="450.7,860.3 453.8,859.9 456.8,859.9 459.9,859.6 462.9,859.7 466.0,859.7 469.0,858.7 472.1,858.6 475.1,858.0 478.2,857.6 481.2,856.8 484.3,856.5 487.3,855.2 490.4,854.9 493.4,853.9 496.5,852.9 499.5,851.7 502.6,850.9 505.7,850.5 508.7,848.8 511.8,846.3 514.8,845.3 516.8,844.1 518.9,843.0 520.9,842.2 523.0,840.9 525.0,839.4 527.0,837.0 529.1,835.7 531.1,833.1 533.1,831.8 535.2,829.0 537.2,827.5 539.2,826.0 541.3,821.6 543.3,819.6 545.3,816.0 547.4,813.3 549.4,810.1 551.4,806.0 553.5,802.8 555.5,798.6 557.5,793.9 559.6,789.0 561.6,784.7 563.7,778.6 565.7,773.1 567.7,766.4 569.8,761.2 571.8,757.5 573.8,751.5 575.9,747.5 577.9,742.1 579.9,737.9 582.0,734.2 584.0,729.9 586.0,728.1 588.1,723.5 590.1,722.0 592.1,721.3 594.2,719.6 596.2,718.5 598.2,720.2 600.3,720.0 602.3,721.6 604.4,722.9 606.4,728.5 608.4,730.8 610.5,734.1 612.5,737.3 614.5,743.1 616.6,747.4 618.6,754.5 620.6,758.8 622.7,762.0 624.7,768.9 626.7,772.0 628.8,779.4 630.8,784.0 632.8,789.8 634.9,792.6 636.9,797.2 638.9,800.1 641.0,805.3 643.0,809.2 645.1,813.3 647.1,815.6 649.1,817.9 651.2,820.7 653.2,823.0 655.2,825.5 657.3,828.2 659.3,829.9 661.3,832.0 663.4,834.5 665.4,834.5 667.4,836.8 669.5,838.9 671.5,839.5 673.5,840.8 675.6,841.7 677.6,842.6 679.6,845.7 681.7,845.1 683.7,845.7 685.8,847.7 687.8,848.9 689.8,848.9 691.9,849.6 693.9,850.4 695.9,851.6 698.0,852.1 700.0,852.5 702.0,852.9 704.1,853.0 706.1,854.2 708.1,855.0 710.2,856.0 713.2,855.6 716.3,856.6 719.3,857.1 722.4,857.9 725.4,857.8 728.5,858.9 731.5,858.8 734.6,859.1 737.6,859.3 740.7,859.3 743.8,859.9 746.8,860.0 749.9,860.0 752.9,860.7 756.0,860.6 759.0,860.6 762.1,860.5 765.1,860.9 768.2,860.7 771.2,860.8 774.3,861.2 777.3,861.3 780.4,861.3 783.4,861.0 786.5,861.0 789.5,861.0 792.6,861.0 795.6,861.2 798.7,861.0 801.7,861.0 804.8,861.1 807.9,861.1 810.9,861.4 814.0,861.1 817.0,861.3 820.1,861.4 823.1,861.2 826.2,861.2 829.2,861.2 832.3,861.2 835.3,861.3 838.4,861.2 841.4,861.3 844.5,861.4 847.5,861.2 850.6,861.0 853.6,861.3 856.7,861.4 859.7,861.0 862.8,860.9 865.9,861.2 868.9,861.2 872.0,861.2 875.0,860.8 878.1,861.2 881.1,861.1 884.2,861.1 887.2,861.5 890.3,861.4 893.3,861.4 896.4,861.1 899.4,861.2 902.5,860.9 905.5,861.2 908.6,861.2 911.6,861.2"/>
<polyline stroke="#00ff00" points="450.7,860.1 453.8,859.5 456.8,859.7 459.9,859.2 462.9,858.9 466.0,859.0 469.0,858.3 472.1,858.2 475.1,857.6 478.2,857.0 481.2,856.4 484.3,855.9 487.3,854.5 490.4,854.3 493.4,853.0 496.5,851.6 499.5,850.9 502.6,849.5 505.7,848.0 508.7,846.7 511.8,844.8 514.8,844.5 516.8,841.7 518.9,841.3 520.9,840.7 523.0,838.7 525.0,837.5 527.0,835.0 529.1,834.0 531.1,831.7 533.1,828.9 535.2,826.6 537.2,824.7 539.2,821.6 541.3,818.6 543.3,815.4 545.3,812.0 547.4,808.5 549.4,803.8 551.4,801.4 553.5,796.1 555.5,790.9 557.5,786.4 559.6,781.3 561.6,775.8 563.7,769.6 565.7,762.9 567.7,758.4 569.8,752.6 571.8,746.2 573.8,741.0 575.9,737.1 577.9,729.6 579.9,725.2 582.0,720.8 584.0,715.3 586.0,712.3 588.1,709.9 590.1,709.3 592.1,707.1 594.2,704.2 596.2,704.1 598.2,703.9 600.3,705.3 602.3,708.0 604.4,711.4 606.4,714.3 608.4,717.0 610.5,722.3 612.5,725.0 614.5,732.1 616.6,737.9 618.6,741.8 620.6,749.0 622.7,751.6 624.7,759.7 626.7,764.6 628.8,770.3 630.8,776.2 632.8,782.3 634.9,787.3 636.9,790.0 638.9,794.4 641.0,797.8 643.0,804.5 645.1,806.8 647.1,810.7 649.1,813.4 651.2,817.3 653.2,819.3 655.2,821.8 657.3,824.3 659.3,826.1 661.3,829.1 663.4,830.0 665.4,833.1 667.4,833.5 669.5,837.4 671.5,837.4 673.5,839.2 675.6,840.1 677.6,840.9 679.6,842.2 681.7,843.7 683.7,844.0 685.8,846.4 687.8,847.1 689.8,847.0 691.9,848.4 693.9,850.2 695.9,850.0 698.0,851.4 700.0,851.1 702.0,851.9 704.1,853.1 706.1,853.1 708.1,854.4 710.2,854.3 713.2,855.2 716.3,856.1 719.3,857.1 722.4,857.3 725.4,858.4 728.5,858.3 731.5,859.0 734.6,858.6 737.6,859.4 740.7,860.1 743.8,859.6 746.8,859.8 749.9,860.2 752.9,859.8 756.0,860.3 759.0,860.5 762.1,860.8 765.1,861.3 768.2,860.7 771.2,860.7 774.3,861.0 777.3,861.2 780.4,861.0 783.4,861.3 786.5,861.1 789.5,861.0 792.6,860.9 795.6,861.1 798.7,861.1 801.7,861.0 804.8,860.9 807.9,861.2 810.9,861.4 814.0,861.3 817.0,861.4 820.1,861.3 823.1,861.2 826.2,861.1 829.2,861.2 832.3,861.2 835.3,861.2 838.4,861.1 841.4,861.1 844.5,861.1 847.5,861.0 850.6,861.2 853.6,861.2 856.7,860.9 859.7,861.2 862.8,861.1 865.9,861.2 868.9,861.1 872.0,861.3 875.0,861.3 878.1,861.2 881.1,861.3 884.2,861.1 887.2,861.3 890.3,861.2 893.3,861.2 896.4,861.2 899.4,861.3 902.5,861.0 905.5,861.4 908.6,861.3 911.6,861.3"/>
<polyline stroke="#30a0f0" points="450.7,860.0 453.8,860.0 456.8,859.6 459.9,859.6 462.9,859.4 466.0,859.2 469.0,858.6 472.1,858.2 475.1,857.5 478.2,856.9 481.2,856.1 484.3,855.8 487.3,855.2 490.4,854.5 493.4,853.2 496.5,852.0 499.5,850.3 502.6,849.8 505.7,847.8 508.7,846.2 511.8,845.9 514.8,843.1 516.8,841.9 518.9,840.4 520.9,839.7 523.0,837.7 525.0,836.8 527.0,834.8 529.1,832.9 531.1,829.9 533.1,828.8 535.2,825.8 537.2,823.8 539.2,821.5 541.3,818.0 543.3,814.5 545.3,812.0 547.4,807.4 549.4,804.4 551.4,800.3 553.5,794.9 555.5,790.5 557.5,786.1 559.6,781.4 561.6,774.5 563.7,768.7 565.7,763.5 567.7,757.0 569.8,752.7 571.8,745.0 573.8,739.1 575.9,733.6 577.9,729.1 579.9,723.4 582.0,718.6 584.0,713.4 586.0,710.6 588.1,707.5 590.1,706.2 592.1,702.7 594.2,701.4 596.2,702.9 598.2,702.1 600.3,703.7 602.3,706.0 604.4,709.9 606.4,709.8 608.4,717.4 610.5,719.4 612.5,724.8 614.5,728.3 616.6,735.3 618.6,740.4 620.6,745.6 622.7,751.6 624.7,758.3 626.7,762.9 628.8,768.9 630.8,773.9 632.8,780.4 634.9,785.1 636.9,790.2 638.9,795.1 641.0,798.6 643.0,802.6 645.1,805.7 647.1,810.4 649.1,813.2 651.2,815.8 653.2,819.4 655.2,821.9 657.3,824.3 659.3,827.0 661.3,829.2 663.4,830.0 665.4,832.3 667.4,834.2 669.5,836.4 671.5,837.1 673.5,838.0 675.6,840.5 677.6,841.6 679.6,841.9 681.7,842.9 683.7,843.9 685.8,845.9 687.8,846.3 689.8,847.9 691.9,848.2 693.9,849.4 695.9,850.0 698.0,850.3 700.0,851.4 702.0,852.3 704.1,852.8 706.1,853.4 708.1,854.2 710.2,854.5 713.2,855.1 716.3,855.5 719.3,857.2 722.4,857.5 725.4,858.0 728.5,857.9 731.5,857.9 734.6,858.8 737.6,859.2 740.7,859.2 743.8,860.3 746.8,860.0 749.9,860.8 752.9,860.2 756.0,860.5 759.0,860.6 762.1,860.6 765.1,860.8 768.2,860.6 771.2,860.9 774.3,860.9 777.3,860.5 780.4,861.1 783.4,860.9 786.5,861.2 789.5,860.9 792.6,861.0 795.6,861.1 798.7,861.0 801.7,860.9 804.8,860.9 807.9,861.2 810.9,861.2 814.0,861.0 817.0,861.4 820.1,861.3 823.1,861.1 826.2,861.1 829.2,860.9 832.3,860.9 835.3,861.1 838.4,861.1 841.4,861.4 844.5,861.2 847.5,861.2 850.6,861.2 853.6,861.2 856.7,861.1 859.7,861.3 862.8,861.3 865.9,861.5 868.9,861.0 872.0,861.4 875.0,861.4 878.1,861.1 881.1,861.2 884.2,861.1 887.2,861.3 890.3,860.9 893.3,861.1 896.4,861.2 899.4,861.2 902.5,861.2 905.5,861.1 908.6,860.9 911.6,861.3"/>
<polyline stroke="#a8c848" points="450.7,860.3 453.8,859.7 456.8,859.4 459.9,859.7 462.9,859.2 466.0,858.9 469.0,858.1 472.1,857.6 475.1,857.4 478.2,857.0 481.2,855.7 484.3,855.9 487.3,854.2 490.4,853.5 493.4,851.8 496.5,851.0 499.5,850.3 502.6,848.9 505.7,847.4 508.7,846.0 511.8,843.9 514.8,841.6 516.8,841.4 518.9,839.4 520.9,836.9 523.0,835.6 525.0,834.7 527.0,832.8 529.1,830.8 531.1,829.0 533.1,825.0 535.2,823.1 537.2,820.8 539.2,818.3 541.3,814.4 543.3,811.0 545.3,805.8 547.4,803.2 549.4,798.5 551.4,793.2 553.5,788.5 555.5,784.0 557.5,780.1 559.6,771.4 561.6,766.1 563.7,760.8 565.7,754.1 567.7,748.5 569.8,742.0 571.8,736.2 573.8,727.9 575.9,721.7 577.9,716.1 579.9,710.0 582.0,705.1 584.0,700.9 586.0,698.0 588.1,693.1 590.1,689.7 592.1,688.5 594.2,686.7 596.2,688.3 598.2,689.4 600.3,688.2 602.3,692.3 604.4,694.2 606.4,698.1 608.4,702.0 610.5,707.0 612.5,712.4 614.5,719.2 616.6,721.3 618.6,729.2 620.6,737.5 622.7,742.8 624.7,749.3 626.7,755.2 628.8,763.0 630.8,766.2 632.8,771.1 634.9,778.3 636.9,782.8 638.9,787.9 641.0,794.0 643.0,796.6 645.1,802.9 647.1,805.9 649.1,809.3 651.2,811.6 653.2,815.4 655.2,818.4 657.3,821.4 659.3,823.3 661.3,825.7 663.4,827.4 665.4,829.0 667.4,831.2 669.5,833.3 671.5,835.1 673.5,835.7 675.6,837.9 677.6,839.4 679.6,839.8 681.7,841.2 683.7,842.8 685.8,844.2 687.8,845.5 689.8,845.8 691.9,847.4 693.9,847.8 695.9,849.3 698.0,849.8 700.0,850.5 702.0,851.3 704.1,852.0 706.1,852.6 708.1,853.8 710.2,854.3 713.2,854.8 716.3,854.9 719.3,856.2 722.4,857.1 725.4,857.5 728.5,857.8 731.5,857.9 734.6,858.8 737.6,858.9 740.7,859.3 743.8,859.7 746.8,860.0 749.9,860.0 752.9,860.3 756.0,860.2 759.0,860.8 762.1,860.4 765.1,860.5 768.2,860.7 771.2,860.6 774.3,860.8 777.3,861.3 780.4,861.0 783.4,861.0 786.5,861.2 789.5,861.3 792.6,861.0 795.6,861.0 798.7,861.2 801.7,861.2 804.8,861.2 807.9,861.3 810.9,861.2 814.0,861.0 817.0,861.4 820.1,861.2 823.1,860.9 826.2,861.1 829.2,861.2 832.3,861.1 835.3,861.3 838.4,861.4 841.4,861.4 844.5,861.4 847.5,861.2 850.6,861.1 853.6,861.3 856.7,861.3 859.7,861.1 862.8,861.1 865.9,861.2 868.9,861.5 872.0,861.3 875.0,861.6 878.1,861.2 881.1,861.3 884.2,861.3 887.2,861.0 890.3,861.0 893.3,861.1 896.4,861.2 899.4,861.2 902.5,861.3 905.5,861.2 908.6,860.9 911.6,861.3"/>
<polyline stroke="#a050ff" points="450.7,860.1 453.8,859.7 456.8,859.2 459.9,858.9 462.9,859.0 466.0,858.4 469.0,858.0 472.1,857.8 475.1,856.8 478.2,856.3 481.2,855.2 484.3,854.5 487.3,854.0 490.4,852.7 493.4,851.7 496.5,850.6 499.5,849.2 502.6,847.1 505.7,846.1 508.7,845.0 511.8,842.6 514.8,839.8 516.8,837.6 518.9,837.6 520.9,835.5 523.0,833.7 525.0,832.4 527.0,829.3 529.1,827.3 531.1,824.7 533.1,820.9 535.2,819.6 537.2,815.9 539.2,812.6 541.3,810.0 543.3,806.1 545.3,800.5 547.4,796.7 549.4,792.3 551.4,788.2 553.5,781.2 555.5,775.8 557.5,768.3 559.6,762.6 561.6,756.5 563.7,750.2 565.7,743.4 567.7,737.0 569.8,729.0 571.8,722.0 573.8,714.6 575.9,707.4 577.9,701.7 579.9,696.6 582.0,689.5 584.0,683.6 586.0,681.8 588.1,676.7 590.1,673.7 592.1,671.6 594.2,670.4 596.2,670.8 598.2,671.4 600.3,670.7 602.3,673.0 604.4,679.6 606.4,684.7 608.4,685.9 610.5,692.2 612.5,697.7 614.5,704.9 616.6,709.3 618.6,716.4 620.6,723.8 622.7,729.3 624.7,734.8 626.7,742.7 628.8,749.8 630.8,757.8 632.8,763.2 634.9,769.9 636.9,774.8 638.9,780.7 641.0,786.4 643.0,790.8 645.1,796.3 647.1,799.4 649.1,802.9 651.2,807.8 653.2,810.6 655.2,815.2 657.3,816.4 659.3,819.1 661.3,822.8 663.4,823.5 665.4,826.6 667.4,829.7 669.5,831.4 671.5,831.9 673.5,834.2 675.6,835.1 677.6,838.0 679.6,838.7 681.7,839.5 683.7,841.6 685.8,842.2 687.8,843.9 689.8,844.7 691.9,845.7 693.9,845.9 695.9,848.3 698.0,848.4 700.0,849.1 702.0,850.8 704.1,851.2 706.1,851.1 708.1,852.2 710.2,854.3 713.2,854.2 716.3,855.5 719.3,855.6 722.4,856.6 725.4,857.1 728.5,857.7 731.5,857.9 734.6,858.5 737.6,859.0 740.7,859.2 743.8,859.3 746.8,859.9 749.9,859.6 752.9,860.4 756.0,860.2 759.0,860.5 762.1,860.2 765.1,860.8 768.2,860.8 771.2,861.1 774.3,860.5 777.3,860.8 780.4,861.2 783.4,861.1 786.5,861.2 789.5,860.8 792.6,861.0 795.6,861.4 798.7,861.1 801.7,861.0 804.8,861.2 807.9,861.1 810.9,861.2 814.0,861.1 817.0,861.1 820.1,861.3 823.1,861.1 826.2,861.2 829.2,861.2 832.3,861.3 835.3,861.3 838.4,861.2 841.4,861.1 844.5,861.5 847.5,861.3 850.6,861.0 853.6,861.1 856.7,861.3 859.7,861.0 862.8,861.3 865.9,861.3 868.9,860.9 872.0,861.3 875.0,861.2 878.1,861.4 881.1,861.3 884.2,861.4 887.2,861.2 890.3,861.5 893.3,861.0 896.4,861.3 899.4,861.3 902.5,861.3 905.5,861.1 908.6,861.0 911.6,861.3"/>
<polyline stroke="#ffa020" points="450.7,859.6 453.8,859.3 456.8,859.1 459.9,859.1 462.9,859.2 466.0,858.2 469.0,858.0 472.1,857.3 475.1,857.3 478.2,856.2 481.2,855.3 484.3,854.9 487.3,853.5 490.4,852.0 493.4,851.4 496.5,850.5 499.5,847.9 502.6,848.3 505.7,846.2 508.7,843.8 511.8,842.3 514.8,841.0 516.8,838.3 518.9,836.4 520.9,835.5 523.0,832.4 525.0,831.0 527.0,828.4 529.1,827.7 531.1,824.4 533.1,820.8 535.2,817.6 537.2,815.0 539.2,812.5 541.3,808.8 543.3,805.5 545.3,800.1 547.4,796.9 549.4,791.5 551.4,788.0 553.5,782.2 555.5,773.7 557.5,769.0 559.6,762.4 561.6,757.9 563.7,749.1 565.7,740.1 567.7,736.3 569.8,730.0 571.8,720.7 573.8,714.0 575.9,706.8 577.9,701.4 579.9,695.4 582.0,689.6 584.0,682.4 586.0,678.7 588.1,674.0 590.1,673.2 592.1,669.2 594.2,669.2 596.2,668.2 598.2,667.8 600.3,670.3 602.3,673.1 604.4,677.7 606.4,679.6 608.4,683.3 610.5,690.1 612.5,695.2 614.5,703.2 616.6,709.2 618.6,714.2 620.6,720.2 622.7,728.9 624.7,737.3 626.7,743.0 628.8,750.9 630.8,756.4 632.8,760.9 634.9,768.5 636.9,774.8 638.9,779.4 641.0,785.8 643.0,790.1 645.1,794.8 647.1,798.9 649.1,804.3 651.2,806.4 653.2,809.7 655.2,815.0 657.3,818.2 659.3,819.7 661.3,820.8 663.4,824.0 665.4,825.9 667.4,828.0 669.5,829.7 671.5,832.4 673.5,834.1 675.6,835.2 677.6,836.6 679.6,838.1 681.7,839.6 683.7,841.3 685.8,841.8 687.8,843.3 689.8,844.1 691.9,846.8 693.9,846.3 695.9,848.7 698.0,848.5 700.0,849.7 702.0,850.2 704.1,851.2 706.1,851.9 708.1,852.4 710.2,853.0 713.2,854.3 716.3,855.7 719.3,855.9 722.4,856.1 725.4,857.2 728.5,857.3 731.5,858.0 734.6,858.6 737.6,858.4 740.7,858.7 743.8,859.4 746.8,859.7 749.9,859.6 752.9,860.4 756.0,860.4 759.0,860.1 762.1,860.3 765.1,860.7 768.2,860.9 771.2,860.7 774.3,861.1 777.3,861.0 780.4,861.0 783.4,861.4 786.5,860.9 789.5,860.9 792.6,860.9 795.6,861.4 798.7,861.3 801.7,861.3 804.8,861.4 807.9,860.8 810.9,861.3 814.0,861.2 817.0,861.1 820.1,861.1 823.1,861.0 826.2,861.4 829.2,861.1 832.3,861.2 835.3,861.4 838.4,861.2 841.4,861.4 844.5,861.0 847.5,861.3 850.6,861.1 853.6,861.0 856.7,861.3 859.7,861.3 862.8,861.2 865.9,861.4 868.9,861.1 872.0,861.2 875.0,861.3 878.1,861.3 881.1,861.1 884.2,861.4 887.2,861.0 890.3,861.3 893.3,861.2 896.4,861.3 899.4,861.0 902.5,861.1 905.5,861.0 908.6,861.1 911.6,861.2"/>
<polyline stroke="#3c3cff" points="450.7,859.5 453.8,859.5 456.8,859.3 459.9,858.9 462.9,858.5 466.0,858.2 469.0,857.8 472.1,857.7 475.1,856.0 478.2,856.4 481.2,855.9 484.3,854.6 487.3,852.7 490.4,851.9 493.4,851.4 496.5,849.8 499.5,848.5 502.6,847.8 505.7,845.4 508.7,843.3 511.8,840.9 514.8,839.9 516.8,838.9 518.9,836.9 520.9,834.1 523.0,832.3 525.0,830.2 527.0,828.1 529.1,826.0 531.1,824.1 533.1,820.3 535.2,817.4 537.2,814.1 539.2,810.2 541.3,808.2 543.3,805.0 545.3,800.4 547.4,792.8 549.4,790.2 551.4,783.9 553.5,778.5 555.5,771.9 557.5,763.4 559.6,760.1 561.6,753.0 563.7,746.3 565.7,738.2 567.7,730.6 569.8,724.7 571.8,714.9 573.8,707.8 575.9,701.5 577.9,695.4 579.9,689.2 582.0,684.9 584.0,677.0 586.0,674.3 588.1,669.9 590.1,665.1 592.1,665.2 594.2,663.5 596.2,661.5 598.2,660.9 600.3,665.4 602.3,665.7 604.4,671.0 606.4,673.7 608.4,678.3 610.5,685.5 612.5,688.9 614.5,694.5 616.6,703.1 618.6,709.9 620.6,718.6 622.7,722.7 624.7,731.8 626.7,740.3 628.8,745.4 630.8,754.3 632.8,760.2 634.9,767.9 636.9,770.9 638.9,775.9 641.0,783.7 643.0,788.8 645.1,793.4 647.1,797.8 649.1,801.1 651.2,804.2 653.2,809.5 655.2,811.8 657.3,816.3 659.3,816.9 661.3,820.6 663.4,823.4 665.4,824.3 667.4,827.4 669.5,828.5 671.5,830.6 673.5,832.0 675.6,835.0 677.6,836.2 679.6,837.5 681.7,839.2 683.7,839.7 685.8,842.1 687.8,842.5 689.8,843.5 691.9,846.1 693.9,846.7 695.9,847.6 698.0,848.4 700.0,848.9 702.0,850.0 704.1,850.7 706.1,851.7 708.1,852.3 710.2,852.7 713.2,853.6 716.3,855.0 719.3,855.5 722.4,856.4 725.4,856.8 728.5,857.8 731.5,857.6 734.6,858.1 737.6,858.7 740.7,859.2 743.8,859.4 746.8,859.8 749.9,860.2 752.9,859.7 756.0,859.5 759.0,860.6 762.1,860.7 765.1,860.5 768.2,860.6 771.2,861.1 774.3,861.2 777.3,860.8 780.4,861.3 783.4,860.7 786.5,861.1 789.5,861.1 792.6,861.1 795.6,861.2 798.7,861.2 801.7,861.2 804.8,861.0 807.9,861.2 810.9,861.2 814.0,861.3 817.0,861.3 820.1,861.3 823.1,861.2 826.2,860.9 829.2,861.0 832.3,861.2 835.3,860.9 838.4,861.0 841.4,861.2 844.5,861.2 847.5,861.4 850.6,861.2 853.6,861.2 856.7,861.4 859.7,861.4 862.8,860.9 865.9,861.2 868.9,861.1 872.0,861.2 875.0,861.3 878.1,861.1 881.1,861.0 884.2,861.2 887.2,861.1 890.3,861.1 893.3,861.3 896.4,861.2 899.4,861.3 902.5,861.1 905.5,861.3 908.6,861.0 911.6,861.3"/>
<polyline stroke="#e040b0" points="450.7,859.4 453.8,859.7 456.8,859.5 459.9,859.2 462.9,858.4 466.0,858.4 469.0,857.1 472.1,856.7 475.1,856.2 478.2,856.1 481.2,854.9 484.3,854.2 487.3,853.6 490.4,851.7 493.4,849.8 496.5,849.5 499.5,847.5 502.6,845.6 505.7,844.9 508.7,842.7 511.8,840.3 514.8,837.9 516.8,837.1 518.9,834.6 520.9,832.9 523.0,830.3 525.0,829.6 527.0,826.7 529.1,824.2 531.1,821.4 533.1,817.9 535.2,815.7 537.2,810.1 539.2,808.9 541.3,803.9 543.3,799.5 545.3,795.0 547.4,791.0 549.4,786.3 551.4,780.3 553.5,773.6 555.5,767.7 557.5,760.7 559.6,753.7 561.6,747.9 563.7,740.5 565.7,730.5 567.7,724.6 569.8,718.0 571.8,706.6 573.8,701.8 575.9,694.5 577.9,685.3 579.9,681.0 582.0,674.6 584.0,666.7 586.0,664.1 588.1,656.0 590.1,655.8 592.1,650.3 594.2,652.1 596.2,651.9 598.2,653.3 600.3,654.4 602.3,657.2 604.4,660.0 606.4,663.3 608.4,670.7 610.5,675.9 612.5,683.4 614.5,686.0 616.6,694.8 618.6,702.1 620.6,709.7 622.7,716.2 624.7,724.6 626.7,731.7 628.8,740.1 630.8,747.3 632.8,754.3 634.9,762.6 636.9,766.3 638.9,774.7 641.0,779.8 643.0,783.8 645.1,789.3 647.1,793.4 649.1,797.0 651.2,800.9 653.2,805.0 655.2,809.6 657.3,811.3 659.3,816.2 661.3,818.4 663.4,820.3 665.4,823.4 667.4,825.6 669.5,827.8 671.5,828.8 673.5,832.8 675.6,832.5 677.6,834.3 679.6,836.5 681.7,837.6 683.7,839.8 685.8,840.1 687.8,840.5 689.8,843.6 691.9,843.7 693.9,845.5 695.9,846.7 698.0,847.7 700.0,848.5 702.0,849.9 704.1,850.7 706.1,850.4 708.1,851.8 710.2,852.3 713.2,853.3 716.3,854.2 719.3,855.7 722.4,856.2 725.4,856.3 728.5,856.8 731.5,858.0 734.6,858.3 737.6,858.8 740.7,858.7 743.8,859.1 746.8,859.5 749.9,859.9 752.9,859.9 756.0,860.1 759.0,860.5 762.1,860.4 765.1,860.7 768.2,860.5 771.2,860.6 774.3,861.0 777.3,860.8 780.4,860.9 783.4,861.1 786.5,861.2 789.5,861.3 792.6,861.3 795.6,861.0 798.7,860.9 801.7,861.2 804.8,861.1 807.9,861.1 810.9,861.0 814.0,861.1 817.0,861.0 820.1,861.1 823.1,861.3 826.2,861.1 829.2,861.5 832.3,861.2 835.3,861.2 838.4,861.1 841.4,861.2 844.5,861.1 847.5,861.0 850.6,861.3 853.6,861.3 856.7,861.2 859.7,861.1 862.8,861.2 865.9,861.1 868.9,861.4 872.0,861.1 875.0,861.0 878.1,861.0 881.1,861.1 884.2,861.2 887.2,861.1 890.3,861.2 893.3,861.4 896.4,861.3 899.4,861.2 902.5,861.3 905.5,861.3 908.6,861.2 911.6,861.3"/>
<polyline stroke="#38c8c8" points="450.7,859.7 453.8,859.5 456.8,859.1 459.9,858.5 462.9,858.3 466.0,857.8 469.0,857.7 472.1,857.6 475.1,856.2 478.2,855.0 481.2,854.5 484.3,853.6 487.3,852.8 490.4,850.8 493.4,850.0 496.5,848.3 499.5,846.3 502.6,844.8 505.7,842.1 508.7,841.1 511.8,838.3 514.8,836.0 516.8,834.9 518.9,832.6 520.9,830.9 523.0,829.1 525.0,826.0 527.0,824.2 529.1,820.0 531.1,818.6 533.1,815.4 535.2,811.7 537.2,808.5 539.2,804.2 541.3,800.5 543.3,796.6 545.3,792.6 547.4,786.5 549.4,778.5 551.4,773.4 553.5,767.3 555.5,761.0 557.5,753.6 559.6,745.7 561.6,739.6 563.7,731.0 565.7,722.8 567.7,712.2 569.8,706.3 571.8,695.4 573.8,689.0 575.9,677.3 577.9,672.9 579.9,665.6 582.0,657.4 584.0,652.0 586.0,646.6 588.1,644.8 590.1,638.6 592.1,635.4 594.2,636.3 596.2,636.4 598.2,637.8 600.3,636.8 602.3,640.4 604.4,644.4 606.4,650.5 608.4,652.3 610.5,659.3 612.5,667.1 614.5,672.5 616.6,683.0 618.6,688.8 620.6,699.0 622.7,704.6 624.7,714.7 626.7,721.3 628.8,731.0 630.8,738.0 632.8,744.8 634.9,754.0 636.9,759.9 638.9,767.3 641.0,771.9 643.0,778.9 645.1,784.1 647.1,788.9 649.1,792.5 651.2,798.5 653.2,801.8 655.2,805.7 657.3,809.3 659.3,812.6 661.3,815.1 663.4,817.6 665.4,821.3 667.4,822.6 669.5,825.7 671.5,827.1 673.5,827.8 675.6,831.6 677.6,832.8 679.6,834.6 681.7,835.6 683.7,837.9 685.8,840.0 687.8,841.3 689.8,841.7 691.9,842.9 693.9,843.8 695.9,845.6 698.0,846.2 700.0,847.9 702.0,847.9 704.1,849.4 706.1,850.5 708.1,850.9 710.2,851.1 713.2,853.2 716.3,854.2 719.3,855.0 722.4,855.9 725.4,856.2 728.5,856.7 731.5,857.4 734.6,857.8 737.6,858.0 740.7,858.8 743.8,859.4 746.8,859.9 749.9,859.6 752.9,860.0 756.0,860.1 759.0,860.2 762.1,860.3 765.1,860.9 768.2,860.8 771.2,860.7 774.3,860.8 777.3,860.7 780.4,861.0 783.4,861.4 786.5,860.8 789.5,861.3 792.6,861.2 795.6,861.0 798.7,861.3 801.7,860.7 804.8,861.1 807.9,861.1 810.9,861.2 814.0,860.8 817.0,861.1 820.1,861.3 823.1,861.0 826.2,861.4 829.2,861.3 832.3,861.1 835.3,861.2 838.4,861.3 841.4,861.0 844.5,861.0 847.5,861.3 850.6,861.1 853.6,861.3 856.7,861.3 859.7,861.1 862.8,861.2 865.9,861.2 868.9,861.2 872.0,861.4 875.0,861.0 878.1,861.3 881.1,861.0 884.2,861.3 887.2,861.3 890.3,861.0 893.3,861.2 896.4,861.3 899.4,861.3 902.5,861.1 905.5,860.9 908.6,861.1 911.6,861.3"/>
<polyline stroke="#ffffff" points="450.7,859.9 453.8,859.5 456.8,859.0 459.9,858.6 462.9,858.4 466.0,857.3 469.0,857.4 472.1,856.7 475.1,855.6 478.2,854.7 481.2,854.1 484.3,852.6 487.3,852.3 490.4,849.9 493.4,848.2 496.5,846.7 499.5,845.8 502.6,843.1 505.7,842.0 508.7,839.2 511.8,837.5 514.8,834.7 516.8,832.6 518.9,831.8 520.9,828.8 523.0,825.4 525.0,825.7 527.0,821.1 529.1,817.9 531.1,815.2 533.1,812.0 535.2,807.7 537.2,804.6 539.2,802.1 541.3,796.9 543.3,791.7 545.3,786.1 547.4,781.0 549.4,774.8 551.4,766.8 553.5,764.1 555.5,753.2 557.5,745.8 559.6,738.1 561.6,730.4 563.7,721.8 565.7,712.8 567.7,704.0 569.8,696.1 571.8,685.5 573.8,678.6 575.9,669.2 577.9,661.4 579.9,654.8 582.0,645.5 584.0,640.0 586.0,635.9 588.1,629.9 590.1,627.9 592.1,621.6 594.2,621.3 596.2,619.0 598.2,623.0 600.3,623.1 602.3,628.2 604.4,631.9 606.4,635.7 608.4,640.8 610.5,646.6 612.5,655.2 614.5,661.2 616.6,669.4 618.6,680.0 620.6,687.9 622.7,697.4 624.7,703.3 626.7,714.4 628.8,721.5 630.8,729.7 632.8,738.9 634.9,746.8 636.9,753.3 638.9,761.3 641.0,768.2 643.0,774.0 645.1,778.6 647.1,784.1 649.1,787.8 651.2,795.1 653.2,797.6 655.2,802.8 657.3,804.8 659.3,808.5 661.3,812.0 663.4,814.1 665.4,818.0 667.4,820.7 669.5,823.4 671.5,825.4 673.5,827.0 675.6,828.7 677.6,830.3 679.6,833.0 681.7,834.9 683.7,836.3 685.8,837.9 687.8,839.4 689.8,840.8 691.9,842.3 693.9,843.2 695.9,844.6 698.0,845.6 700.0,847.2 702.0,847.6 704.1,848.4 706.1,849.3 708.1,850.6 710.2,851.6 713.2,852.8 716.3,853.8 719.3,854.5 722.4,855.2 725.4,856.4 728.5,856.3 731.5,857.6 734.6,857.9 737.6,858.4 740.7,858.4 743.8,858.5 746.8,859.4 749.9,859.6 752.9,859.9 756.0,860.1 759.0,860.2 762.1,859.8 765.1,860.7 768.2,860.6 771.2,860.9 774.3,860.7 777.3,861.0 780.4,860.8 783.4,861.2 786.5,860.6 789.5,861.0 792.6,861.4 795.6,861.0 798.7,861.2 801.7,861.3 804.8,861.1 807.9,861.2 810.9,861.0 814.0,861.3 817.0,861.0 820.1,861.2 823.1,861.1 826.2,861.2 829.2,861.2 832.3,861.2 835.3,861.1 838.4,861.1 841.4,861.3 844.5,860.9 847.5,860.9 850.6,861.4 853.6,861.0 856.7,861.2 859.7,861.2 862.8,861.3 865.9,861.0 868.9,861.3 872.0,861.2 875.0,861.3 878.1,860.9 881.1,861.0 884.2,861.4 887.2,861.3 890.3,861.1 893.3,861.3 896.4,861.3 899.4,861.4 902.5,861.2 905.5,861.4 908.6,861.1 911.6,860.9"/>
<polyline stroke="#ff3030" points="450.7,859.6 453.8,858.9 456.8,858.8 459.9,858.7 462.9,858.2 466.0,857.8 469.0,856.9 472.1,856.0 475.1,855.2 478.2,854.7 481.2,854.1 484.3,852.6 487.3,850.8 490.4,850.0 493.4,848.6 496.5,847.9 499.5,845.4 502.6,843.1 505.7,841.7 508.7,838.3 511.8,836.7 514.8,834.1 516.8,832.0 518.9,829.6 520.9,826.8 523.0,825.3 525.0,823.5 527.0,819.7 529.1,816.4 531.1,812.5 533.1,810.9 535.2,805.4 537.2,802.0 539.2,797.8 541.3,794.1 543.3,789.2 545.3,783.9 547.4,776.5 549.4,770.9 551.4,763.5 553.5,755.7 555.5,749.8 557.5,742.0 559.6,731.8 561.6,726.3 563.7,716.6 565.7,707.4 567.7,698.1 569.8,688.2 571.8,680.1 573.8,668.6 575.9,662.8 577.9,653.7 579.9,646.8 582.0,639.1 584.0,630.0 586.0,624.2 588.1,620.4 590.1,615.2 592.1,612.8 594.2,612.8 596.2,611.6 598.2,611.8 600.3,611.6 602.3,617.7 604.4,620.7 606.4,625.5 608.4,630.6 610.5,638.3 612.5,644.9 614.5,655.5 616.6,663.0 618.6,673.7 620.6,680.5 622.7,687.0 624.7,698.4 626.7,707.6 628.8,716.3 630.8,725.1 632.8,734.9 634.9,742.2 636.9,749.3 638.9,756.2 641.0,763.9 643.0,769.6 645.1,776.1 647.1,782.1 649.1,786.7 651.2,791.6 653.2,794.7 655.2,798.5 657.3,802.9 659.3,806.9 661.3,810.4 663.4,814.2 665.4,816.3 667.4,817.6 669.5,820.4 671.5,823.3 673.5,825.8 675.6,827.8 677.6,829.5 679.6,831.6 681.7,833.2 683.7,835.5 685.8,836.7 687.8,838.4 689.8,839.2 691.9,841.7 693.9,841.8 695.9,843.7 698.0,845.1 700.0,846.0 702.0,847.0 704.1,848.2 706.1,848.9 708.1,850.2 710.2,851.4 713.2,851.7 716.3,853.0 719.3,853.4 722.4,854.7 725.4,856.3 728.5,856.0 731.5,857.2 734.6,857.4 737.6,857.4 740.7,858.2 743.8,859.1 746.8,859.2 749.9,859.9 752.9,859.6 756.0,859.8 759.0,860.4 762.1,860.2 765.1,860.3 768.2,860.4 771.2,860.8 774.3,860.9 777.3,861.0 780.4,861.1 783.4,860.9 786.5,861.0 789.5,860.8 792.6,861.0 795.6,861.1 798.7,861.3 801.7,860.9 804.8,861.1 807.9,861.2 810.9,861.3 814.0,861.3 817.0,861.1 820.1,861.3 823.1,861.1 826.2,861.1 829.2,861.2 832.3,861.4 835.3,861.1 838.4,861.0 841.4,861.3 844.5,861.4 847.5,861.0 850.6,861.2 853.6,861.3 856.7,861.0 859.7,861.2 862.8,861.1 865.9,861.3 868.9,861.3 872.0,861.2 875.0,861.3 878.1,861.5 881.1,861.3 884.2,861.0 887.2,861.0 890.3,860.9 893.3,861.1 896.4,861.0 899.4,861.2 902.5,861.3 905.5,861.1 908.6,861.3 911.6,861.1"/>
<polyline stroke="#00ff00" points="450.7,859.6 453.8,859.1 456.8,859.1 459.9,858.5 462.9,857.7 466.0,857.5 469.0,857.0 472.1,856.0 475.1,855.0 478.2,854.5 481.2,853.8 484.3,852.9 487.3,851.6 490.4,849.3 493.4,848.2 496.5,846.3 499.5,844.2 502.6,842.6 505.7,840.3 508.7,838.4 511.8,836.4 514.8,832.4 516.8,830.8 518.9,828.2 520.9,826.8 523.0,823.8 525.0,819.9 527.0,818.8 529.1,815.2 531.1,811.1 533.1,808.6 535.2,804.5 537.2,802.1 539.2,795.5 541.3,791.6 543.3,785.1 545.3,780.6 547.4,774.8 549.4,767.7 551.4,761.4 553.5,754.4 555.5,744.7 557.5,737.0 559.6,729.3 561.6,719.7 563.7,710.4 565.7,701.2 567.7,692.2 569.8,682.6 571.8,672.6 573.8,663.0 575.9,654.1 577.9,646.4 579.9,637.6 582.0,629.3 584.0,624.3 586.0,617.1 588.1,611.1 590.1,608.0 592.1,605.7 594.2,603.8 596.2,603.9 598.2,602.8 600.3,606.5 602.3,611.3 604.4,614.8 606.4,618.0 608.4,624.2 610.5,632.1 612.5,640.7 614.5,647.5 616.6,657.0 618.6,665.9 620.6,674.4 622.7,684.7 624.7,692.9 626.7,703.4 628.8,712.3 630.8,721.0 632.8,727.9 634.9,736.1 636.9,744.6 638.9,753.6 641.0,759.9 643.0,765.7 645.1,772.0 647.1,779.7 649.1,783.7 651.2,789.2 653.2,792.6 655.2,797.0 657.3,801.7 659.3,803.5 661.3,808.5 663.4,809.9 665.4,814.6 667.4,817.3 669.5,818.6 671.5,822.5 673.5,824.8 675.6,825.8 677.6,828.7 679.6,830.4 681.7,833.2 683.7,833.3 685.8,835.4 687.8,837.3 689.8,838.7 691.9,840.7 693.9,842.0 695.9,843.8 698.0,844.2 700.0,845.0 702.0,846.2 704.1,847.3 706.1,848.3 708.1,849.9 710.2,850.9 713.2,851.4 716.3,852.7 719.3,853.4 722.4,854.7 725.4,855.7 728.5,856.0 731.5,857.0 734.6,857.9 737.6,858.1 740.7,858.6 743.8,859.1 746.8,859.2 749.9,859.2 752.9,859.1 756.0,859.5 759.0,860.2 762.1,860.0 765.1,860.4 768.2,860.5 771.2,860.8 774.3,860.8 777.3,861.1 780.4,860.6 783.4,861.1 786.5,860.9 789.5,861.1 792.6,861.0 795.6,861.3 798.7,861.2 801.7,861.0 804.8,861.0 807.9,861.4 810.9,861.0 814.0,861.4 817.0,861.1 820.1,861.1 823.1,861.3 826.2,861.2 829.2,861.2 832.3,861.1 835.3,861.1 838.4,861.0 841.4,861.1 844.5,860.9 847.5,861.3 850.6,860.9 853.6,861.2 856.7,861.1 859.7,861.2 862.8,861.2 865.9,861.3 868.9,861.1 872.0,860.9 875.0,861.2 878.1,861.2 881.1,861.2 884.2,861.1 887.2,861.2 890.3,861.2 893.3,861.2 896.4,861.0 899.4,861.1 902.5,861.4 905.5,861.3 908.6,861.2 911.6,861.1"/>
<polyline stroke="#30a0f0" points="450.7,859.2 453.8,859.2 456.8,858.2 459.9,858.4 462.9,857.5 466.0,856.9 469.0,856.2 472.1,855.9 475.1,854.9 478.2,854.7 481.2,853.8 484.3,852.2 487.3,850.5 490.4,848.9 493.4,847.8 496.5,845.6 499.5,844.0 502.6,841.5 505.7,840.7 508.7,837.9 511.8,835.3 514.8,832.4 516.8,828.9 518.9,828.0 520.9,825.6 523.0,822.8 525.0,819.3 527.0,817.2 529.1,813.3 531.1,810.1 533.1,807.3 535.2,804.5 537.2,799.3 539.2,795.0 541.3,787.9 543.3,784.3 545.3,778.9 547.4,771.5 549.4,765.2 551.4,758.9 553.5,749.6 555.5,741.7 557.5,733.9 559.6,726.1 561.6,717.1 563.7,708.8 565.7,696.5 567.7,686.7 569.8,678.2 571.8,667.2 573.8,653.6 575.9,649.5 577.9,641.2 579.9,629.9 582.0,623.3 584.0,616.4 586.0,608.8 588.1,604.6 590.1,599.1 592.1,596.8 594.2,594.3 596.2,595.2 598.2,599.1 600.3,596.4 602.3,603.6 604.4,604.2 606.4,610.6 608.4,619.0 610.5,624.3 612.5,631.2 614.5,642.0 616.6,649.7 618.6,660.0 620.6,669.8 622.7,679.1 624.7,686.7 626.7,697.0 628.8,707.2 630.8,716.5 632.8,725.1 634.9,733.5 636.9,741.7 638.9,751.2 641.0,756.0 643.0,764.3 645.1,772.0 647.1,775.2 649.1,782.2 651.2,786.5 653.2,791.1 655.2,795.9 657.3,799.1 659.3,803.4 661.3,806.9 663.4,810.6 665.4,813.2 667.4,816.5 669.5,818.5 671.5,820.2 673.5,822.8 675.6,825.4 677.6,828.5 679.6,829.1 681.7,831.1 683.7,832.3 685.8,836.3 687.8,836.8 689.8,838.5 691.9,839.3 693.9,841.7 695.9,842.7 698.0,842.8 700.0,844.6 702.0,847.0 704.1,847.2 706.1,847.7 708.1,849.4 710.2,849.9 713.2,851.3 716.3,853.0 719.3,853.7 722.4,854.1 725.4,854.9 728.5,856.2 731.5,856.4 734.6,857.5 737.6,857.8 740.7,858.3 743.8,859.0 746.8,859.0 749.9,859.5 752.9,860.3 756.0,860.1 759.0,860.3 762.1,860.4 765.1,860.6 768.2,860.7 771.2,861.1 774.3,860.6 777.3,860.8 780.4,860.8 783.4,861.0 786.5,861.0 789.5,861.1 792.6,861.2 795.6,861.3 798.7,861.1 801.7,861.0 804.8,861.1 807.9,860.9 810.9,861.4 814.0,861.2 817.0,861.3 820.1,861.0 823.1,860.9 826.2,861.3 829.2,861.1 832.3,861.2 835.3,861.3 838.4,861.2 841.4,861.4 844.5,861.0 847.5,861.1 850.6,861.0 853.6,861.1 856.7,861.5 859.7,861.1 862.8,861.2 865.9,861.5 868.9,861.2 872.0,861.1 875.0,861.0 878.1,861.3 881.1,861.1 884.2,861.2 887.2,861.2 890.3,861.2 893.3,861.1 896.4,861.1 899.4,861.1 902.5,861.3 905.5,861.4 908.6,861.0 911.6,861.0"/>
<polyline stroke="#a8c848" points="450.7,859.5 453.8,859.1 456.8,858.5 459.9,858.7 462.9,857.6 466.0,856.4 469.0,856.4 472.1,855.9 475.1,854.2 478.2,853.9 481.2,852.8 484.3,851.8 487.3,850.3 490.4,849.6 493.4,847.8 496.5,846.1 499.5,843.1 502.6,841.4 505.7,838.5 508.7,837.5 511.8,834.0 514.8,829.9 516.8,828.9 518.9,827.2 520.9,824.1 523.0,821.2 525.0,818.2 527.0,814.3 529.1,811.0 531.1,807.3 533.1,804.1 535.2,800.8 537.2,796.4 539.2,792.4 541.3,785.1 543.3,779.6 545.3,774.5 547.4,768.9 549.4,760.6 551.4,753.4 553.5,745.9 555.5,738.8 557.5,728.7 559.6,720.3 561.6,709.4 563.7,699.6 565.7,689.7 567.7,680.3 569.8,667.7 571.8,658.3 573.8,647.6 575.9,638.3 577.9,629.1 579.9,620.6 582.0,614.3 584.0,607.9 586.0,600.4 588.1,593.0 590.1,588.3 592.1,586.3 594.2,584.7 596.2,581.9 598.2,585.7 600.3,589.6 602.3,592.6 604.4,595.4 606.4,599.6 608.4,606.2 610.5,614.8 612.5,621.7 614.5,631.7 616.6,641.9 618.6,651.2 620.6,659.8 622.7,669.7 624.7,682.2 626.7,692.1 628.8,700.7 630.8,708.2 632.8,720.8 634.9,729.8 636.9,736.5 638.9,744.5 641.0,753.0 643.0,759.6 645.1,765.7 647.1,773.7 649.1,778.0 651.2,782.8 653.2,787.5 655.2,791.8 657.3,797.0 659.3,801.9 661.3,803.6 663.4,807.3 665.4,811.4 667.4,813.3 669.5,816.1 671.5,819.4 673.5,823.2 675.6,824.4 677.6,826.8 679.6,828.9 681.7,830.4 683.7,832.9 685.8,833.9 687.8,834.8 689.8,838.0 691.9,838.4 693.9,840.6 695.9,841.5 698.0,843.1 700.0,843.8 702.0,845.8 704.1,846.3 706.1,848.0 708.1,848.6 710.2,849.6 713.2,850.5 716.3,852.7 719.3,853.7 722.4,853.7 725.4,854.9 728.5,855.3 731.5,856.8 734.6,857.1 737.6,857.5 740.7,857.7 743.8,858.6 746.8,859.1 749.9,859.1 752.9,859.6 756.0,860.0 759.0,859.9 762.1,860.6 765.1,860.6 768.2,860.2 771.2,860.7 774.3,860.8 777.3,860.7 780.4,860.7 783.4,860.8 786.5,861.1 789.5,861.1 792.6,860.9 795.6,861.1 798.7,861.2 801.7,861.0 804.8,861.0 807.9,860.8 810.9,861.3 814.0,861.3 817.0,861.3 820.1,861.1 823.1,861.3 826.2,861.0 829.2,861.6 832.3,861.1 835.3,861.3 838.4,861.2 841.4,861.1 844.5,861.2 847.5,861.3 850.6,861.0 853.6,861.1 856.7,861.3 859.7,861.2 862.8,861.4 865.9,861.4 868.9,861.2 872.0,861.1 875.0,861.2 878.1,861.3 881.1,861.4 884.2,861.4 887.2,861.0 890.3,861.1 893.3,861.3 896.4,861.0 899.4,861.1 902.5,861.3 905.5,861.3 908.6,861.0 911.6,861.2"/>
<polyline stroke="#a050ff" points="450.7,858.9 453.8,858.9 456.8,858.7 459.9,858.3 462.9,857.8 466.0,856.9 469.0,856.2 472.1,855.4 475.1,854.5 478.2,854.0 481.2,852.7 484.3,851.7 487.3,849.8 490.4,849.0 493.4,847.1 496.5,845.3 499.5,843.3 502.6,840.9 505.7,837.6 508.7,835.9 511.8,833.6 514.8,829.9 516.8,827.0 518.9,824.8 520.9,822.4 523.0,818.6 525.0,816.2 527.0,813.7 529.1,809.5 531.1,807.6 533.1,803.0 535.2,799.2 537.2,793.9 539.2,787.9 541.3,784.2 543.3,776.9 545.3,772.8 547.4,764.1 549.4,759.7 551.4,751.4 553.5,741.6 555.5,734.0 557.5,724.7 559.6,715.4 561.6,705.4 563.7,695.6 565.7,686.0 567.7,674.7 569.8,663.6 571.8,654.2 573.8,642.1 575.9,630.4 577.9,625.0 579.9,614.5 582.0,605.7 584.0,597.8 586.0,591.1 588.1,586.7 590.1,581.4 592.1,578.2 594.2,576.5 596.2,573.8 598.2,576.6 600.3,580.9 602.3,584.4 604.4,586.1 606.4,593.1 608.4,600.2 610.5,608.8 612.5,615.9 614.5,624.8 616.6,635.1 618.6,644.7 620.6,653.6 622.7,664.1 624.7,674.8 626.7,686.0 628.8,697.4 630.8,705.0 632.8,713.8 634.9,723.2 636.9,732.1 638.9,741.1 641.0,748.8 643.0,756.5 645.1,762.2 647.1,769.8 649.1,773.7 651.2,780.3 653.2,786.2 655.2,790.6 657.3,796.2 659.3,799.5 661.3,803.0 663.4,804.6 665.4,810.0 667.4,811.9 669.5,815.4 671.5,818.3 673.5,820.2 675.6,824.2 677.6,824.7 679.6,826.3 681.7,829.3 683.7,831.4 685.8,833.1 687.8,834.6 689.8,836.9 691.9,838.2 693.9,839.5 695.9,841.3 698.0,842.4 700.0,843.7 702.0,844.7 704.1,846.6 706.1,847.5 708.1,848.5 710.2,848.8 713.2,850.5 716.3,852.4 719.3,853.4 722.4,853.3 725.4,854.7 728.5,856.1 731.5,856.6 734.6,857.0 737.6,857.2 740.7,857.6 743.8,858.6 746.8,859.0 749.9,858.8 752.9,859.8 756.0,859.4 759.0,859.9 762.1,860.2 765.1,860.1 768.2,860.4 771.2,860.8 774.3,861.0 777.3,860.8 780.4,860.8 783.4,860.7 786.5,861.4 789.5,860.8 792.6,860.9 795.6,860.8 798.7,861.0 801.7,861.1 804.8,861.1 807.9,861.1 810.9,861.3 814.0,861.2 817.0,861.2 820.1,861.2 823.1,861.4 826.2,861.4 829.2,861.1 832.3,861.1 835.3,861.2 838.4,861.4 841.4,861.1 844.5,861.3 847.5,861.5 850.6,861.0 853.6,861.4 856.7,860.9 859.7,861.1 862.8,861.3 865.9,861.5 868.9,861.3 872.0,861.0 875.0,861.0 878.1,861.2 881.1,861.4 884.2,861.3 887.2,861.2 890.3,861.1 893.3,861.2 896.4,861.2 899.4,861.4 902.5,861.3 905.5,861.0 908.6,861.4 911.6,861.1"/>
<polyline stroke="#ffa020" points="450.7,858.7 453.8,858.8 456.8,858.9 459.9,857.7 462.9,858.1 466.0,856.8 469.0,856.4 472.1,855.0 475.1,854.2 478.2,853.5 481.2,851.8 484.3,850.8 487.3,850.0 490.4,848.6 493.4,845.5 496.5,844.8 499.5,842.4 502.6,840.4 505.7,838.2 508.7,836.1 511.8,832.4 514.8,829.2 516.8,826.3 518.9,824.7 520.9,822.7 523.0,819.7 525.0,816.0 527.0,812.7 529.1,808.9 531.1,806.0 533.1,801.4 535.2,797.3 537.2,791.5 539.2,787.8 541.3,782.3 543.3,776.1 545.3,769.2 547.4,764.3 549.4,756.7 551.4,748.8 553.5,742.3 555.5,730.3 557.5,721.2 559.6,712.6 561.6,699.0 563.7,690.9 565.7,679.3 567.7,669.0 569.8,658.9 571.8,650.9 573.8,636.7 575.9,627.7 577.9,619.9 579.9,609.0 582.0,599.5 584.0,591.5 586.0,585.9 588.1,581.2 590.1,575.0 592.1,573.9 594.2,571.1 596.2,569.5 598.2,573.4 600.3,573.1 602.3,579.7 604.4,583.0 606.4,589.2 608.4,594.6 610.5,601.3 612.5,610.9 614.5,619.0 616.6,629.9 618.6,640.5 620.6,650.1 622.7,661.6 624.7,671.8 626.7,681.3 628.8,693.4 630.8,701.6 632.8,713.7 634.9,722.1 636.9,732.4 638.9,739.6 641.0,745.6 643.0,754.1 645.1,760.3 647.1,769.1 649.1,774.7 651.2,779.0 653.2,783.9 655.2,788.7 657.3,795.0 659.3,797.5 661.3,801.7 663.4,805.1 665.4,808.2 667.4,811.8 669.5,815.6 671.5,817.9 673.5,820.7 675.6,823.1 677.6,824.7 679.6,826.0 681.7,829.3 683.7,831.2 685.8,833.3 687.8,835.4 689.8,836.2 691.9,838.0 693.9,839.5 695.9,841.3 698.0,842.0 700.0,844.0 702.0,844.5 704.1,846.2 706.1,846.7 708.1,848.4 710.2,848.9 713.2,850.3 716.3,851.7 719.3,852.2 722.4,853.8 725.4,855.0 728.5,855.3 731.5,856.5 734.6,857.1 737.6,857.5 740.7,858.0 743.8,858.0 746.8,859.3 749.9,859.3 752.9,859.2 756.0,859.8 759.0,859.9 762.1,859.8 765.1,860.6 768.2,860.5 771.2,860.4 774.3,860.8 777.3,861.1 780.4,861.0 783.4,860.9 786.5,860.9 789.5,860.7 792.6,860.8 795.6,861.3 798.7,860.9 801.7,861.0 804.8,860.9 807.9,861.2 810.9,861.2 814.0,861.1 817.0,860.9 820.1,861.1 823.1,860.9 826.2,861.1 829.2,861.3 832.3,861.3 835.3,860.9 838.4,861.4 841.4,861.2 844.5,861.2 847.5,861.3 850.6,861.3 853.6,861.2 856.7,860.9 859.7,861.2 862.8,861.3 865.9,861.2 868.9,861.1 872.0,861.3 875.0,861.3 878.1,861.4 881.1,861.1 884.2,861.1 887.2,861.0 890.3,861.4 893.3,860.9 896.4,861.1 899.4,861.2 902.5,861.3 905.5,861.2 908.6,861.4 911.6,861.1"/>
<polyline stroke="#3c3cff" points="450.7,859.4 453.8,859.1 456.8,858.3 459.9,858.0 462.9,857.6 466.0,856.9 469.0,856.3 472.1,854.9 475.1,854.1 478.2,853.6 481.2,852.2 484.3,850.4 487.3,849.6 490.4,847.2 493.4,846.0 496.5,844.0 499.5,843.1 502.6,839.5 505.7,837.2 508.7,834.3 511.8,831.4 514.8,828.1 516.8,826.3 518.9,823.0 520.9,820.8 523.0,818.6 525.0,815.6 527.0,811.6 529.1,807.9 531.1,805.9 533.1,801.8 535.2,795.1 537.2,791.2 539.2,783.8 541.3,781.7 543.3,774.7 545.3,768.6 547.4,760.7 549.4,752.4 551.4,744.3 553.5,738.3 555.5,727.2 557.5,720.2 559.6,708.7 561.6,698.6 563.7,687.5 565.7,678.2 567.7,664.7 569.8,655.2 571.8,644.1 573.8,633.5 575.9,624.0 577.9,611.6 579.9,602.6 582.0,593.6 584.0,583.8 586.0,580.7 588.1,574.1 590.1,569.1 592.1,564.7 594.2,564.3 596.2,562.2 598.2,563.7 600.3,569.1 602.3,571.1 604.4,577.8 606.4,581.3 608.4,588.6 610.5,595.2 612.5,604.6 614.5,614.4 616.6,622.8 618.6,634.1 620.6,647.1 622.7,657.3 624.7,667.0 626.7,676.2 628.8,689.0 630.8,699.2 632.8,708.7 634.9,717.7 636.9,727.7 638.9,735.9 641.0,744.7 643.0,752.4 645.1,759.7 647.1,765.0 649.1,772.2 651.2,777.0 653.2,782.4 655.2,786.8 657.3,794.1 659.3,797.0 661.3,801.1 663.4,804.0 665.4,806.7 667.4,808.7 669.5,812.4 671.5,815.3 673.5,818.6 675.6,821.6 677.6,823.4 679.6,827.2 681.7,827.5 683.7,830.1 685.8,831.7 687.8,834.4 689.8,836.1 691.9,837.6 693.9,838.8 695.9,840.1 698.0,841.9 700.0,842.9 702.0,844.0 704.1,846.0 706.1,846.7 708.1,848.4 710.2,849.0 713.2,849.8 716.3,851.7 719.3,851.9 722.4,853.5 725.4,854.3 728.5,855.4 731.5,855.9 734.6,856.5 737.6,857.4 740.7,858.1 743.8,858.5 746.8,858.3 749.9,859.2 752.9,859.6 756.0,859.9 759.0,860.3 762.1,860.2 765.1,860.2 768.2,860.6 771.2,860.7 774.3,860.6 777.3,860.7 780.4,860.9 783.4,860.8 786.5,861.1 789.5,860.9 792.6,861.2 795.6,861.1 798.7,861.1 801.7,861.2 804.8,861.3 807.9,860.8 810.9,860.9 814.0,861.4 817.0,861.2 820.1,861.4 823.1,861.1 826.2,861.4 829.2,861.1 832.3,861.1 835.3,860.9 838.4,861.0 841.4,861.3 844.5,861.1 847.5,861.3 850.6,861.2 853.6,861.3 856.7,861.5 859.7,861.1 862.8,861.5 865.9,861.2 868.9,861.1 872.0,861.2 875.0,861.4 878.1,861.3 881.1,861.1 884.2,861.0 887.2,861.0 890.3,861.5 893.3,861.1 896.4,861.3 899.4,861.1 902.5,861.4 905.5,861.2 908.6,861.1 911.6,861.3"/>
<polyline stroke="#e040b0" points="450.7,859.3 453.8,859.1 456.8,858.1 459.9,858.3 462.9,857.6 466.0,856.8 469.0,856.1 472.1,854.5 475.1,854.1 478.2,853.5 481.2,851.8 484.3,850.5 487.3,849.1 490.4,847.6 493.4,845.6 496.5,844.4 499.5,842.3 502.6,839.5 505.7,837.3 508.7,833.6 511.8,829.8 514.8,826.8 516.8,824.8 518.9,822.3 520.9,820.2 523.0,817.7 525.0,813.4 527.0,811.4 529.1,806.6 531.1,803.0 533.1,798.2 535.2,794.2 537.2,789.3 539.2,784.6 541.3,779.8 543.3,772.6 545.3,765.1 547.4,757.7 549.4,749.7 551.4,743.8 553.5,735.1 555.5,724.3 557.5,715.8 559.6,702.4 561.6,694.3 563.7,685.4 565.7,673.2 567.7,659.4 569.8,652.1 571.8,638.3 573.8,629.1 575.9,614.4 577.9,606.7 579.9,597.8 582.0,589.7 584.0,580.3 586.0,575.8 588.1,567.0 590.1,558.6 592.1,558.2 594.2,556.8 596.2,557.5 598.2,556.3 600.3,559.7 602.3,563.9 604.4,565.7 606.4,573.2 608.4,582.2 610.5,587.2 612.5,598.3 614.5,607.4 616.6,618.2 618.6,627.6 620.6,639.3 622.7,651.7 624.7,661.6 626.7,673.9 628.8,684.2 630.8,693.1 632.8,706.2 634.9,715.9 636.9,724.6 638.9,733.5 641.0,740.1 643.0,750.6 645.1,754.3 647.1,761.7 649.1,769.8 651.2,775.1 653.2,781.0 655.2,785.2 657.3,789.8 659.3,794.1 661.3,798.1 663.4,801.0 665.4,806.0 667.4,808.7 669.5,812.3 671.5,815.0 673.5,817.6 675.6,820.4 677.6,822.5 679.6,825.5 681.7,827.3 683.7,829.6 685.8,831.9 687.8,833.5 689.8,835.2 691.9,836.7 693.9,839.0 695.9,839.9 698.0,841.8 700.0,843.0 702.0,843.8 704.1,844.7 706.1,846.2 708.1,847.6 710.2,848.6 713.2,849.4 716.3,851.8 719.3,852.0 722.4,854.0 725.4,854.6 728.5,855.3 731.5,856.1 734.6,856.2 737.6,857.2 740.7,857.9 743.8,858.1 746.8,858.7 749.9,859.3 752.9,859.1 756.0,859.3 759.0,859.6 762.1,860.4 765.1,859.9 768.2,860.5 771.2,860.4 774.3,860.4 777.3,860.3 780.4,861.1 783.4,861.1 786.5,860.7 789.5,860.9 792.6,861.1 795.6,861.6 798.7,861.0 801.7,861.1 804.8,861.6 807.9,860.7 810.9,861.5 814.0,861.3 817.0,861.2 820.1,861.1 823.1,861.1 826.2,861.2 829.2,861.3 832.3,861.2 835.3,861.5 838.4,861.4 841.4,860.9 844.5,861.3 847.5,861.2 850.6,860.9 853.6,861.0 856.7,861.2 859.7,861.1 862.8,861.2 865.9,861.3 868.9,861.1 872.0,861.2 875.0,861.0 878.1,861.2 881.1,861.3 884.2,861.2 887.2,861.2 890.3,861.2 893.3,861.3 896.4,861.2 899.4,861.2 902.5,860.9 905.5,861.2 908.6,861.5 911.6,861.1"/>
<polyline stroke="#38c8c8" points="450.7,858.6 453.8,858.9 456.8,858.6 459.9,857.9 462.9,858.1 466.0,856.7 469.0,855.9 472.1,855.5 475.1,853.8 478.2,853.3 481.2,852.4 484.3,850.7 487.3,848.7 490.4,846.4 493.4,844.9 496.5,843.3 499.5,841.4 502.6,838.9 505.7,835.7 508.7,833.5 511.8,829.9 514.8,826.1 516.8,824.7 518.9,821.9 520.9,818.5 523.0,815.8 525.0,812.6 527.0,809.5 529.1,805.5 531.1,800.1 533.1,796.2 535.2,793.8 537.2,787.5 539.2,782.1 541.3,776.3 543.3,771.3 545.3,763.4 547.4,755.9 549.4,748.9 551.4,739.6 553.5,733.4 555.5,723.1 557.5,711.6 559.6,700.9 561.6,690.7 563.7,679.8 565.7,667.7 567.7,655.0 569.8,643.5 571.8,633.1 573.8,622.1 575.9,609.0 577.9,599.1 579.9,588.6 582.0,581.0 584.0,573.5 586.0,564.8 588.1,559.9 590.1,552.6 592.1,549.6 594.2,552.0 596.2,547.3 598.2,547.3 600.3,550.1 602.3,556.0 604.4,561.6 606.4,565.2 608.4,572.6 610.5,582.4 612.5,593.3 614.5,603.8 616.6,612.0 618.6,624.4 620.6,635.5 622.7,645.5 624.7,656.2 626.7,671.2 628.8,680.7 630.8,689.3 632.8,701.3 634.9,711.6 636.9,720.1 638.9,730.9 641.0,739.5 643.0,746.3 645.1,752.3 647.1,759.8 649.1,767.1 651.2,772.3 653.2,779.0 655.2,784.7 657.3,789.9 659.3,792.8 661.3,796.4 663.4,800.7 665.4,804.5 667.4,808.1 669.5,810.2 671.5,813.9 673.5,817.6 675.6,818.5 677.6,822.2 679.6,823.9 681.7,826.4 683.7,827.9 685.8,830.4 687.8,831.8 689.8,834.2 691.9,836.2 693.9,837.9 695.9,838.9 698.0,841.1 700.0,841.7 702.0,843.6 704.1,845.2 706.1,846.3 708.1,847.1 710.2,847.4 713.2,849.3 716.3,850.9 719.3,852.5 722.4,852.6 725.4,854.3 728.5,855.1 731.5,856.0 734.6,856.2 737.6,857.2 740.7,857.9 743.8,858.2 746.8,858.9 749.9,859.3 752.9,859.4 756.0,860.3 759.0,859.6 762.1,859.6 765.1,860.5 768.2,860.4 771.2,860.9 774.3,860.6 777.3,860.7 780.4,860.7 783.4,861.1 786.5,861.1 789.5,861.1 792.6,861.1 795.6,860.7 798.7,861.1 801.7,861.1 804.8,861.2 807.9,861.0 810.9,860.7 814.0,861.0 817.0,860.9 820.1,861.3 823.1,861.0 826.2,861.2 829.2,861.0 832.3,861.0 835.3,861.1 838.4,861.4 841.4,861.2 844.5,861.3 847.5,861.1 850.6,861.2 853.6,861.0 856.7,861.4 859.7,861.3 862.8,861.2 865.9,861.2 868.9,861.3 872.0,861.2 875.0,861.2 878.1,861.0 881.1,861.2 884.2,861.2 887.2,861.5 890.3,861.6 893.3,861.4 896.4,861.1 899.4,861.5 902.5,861.1 905.5,861.2 908.6,861.2 911.6,861.3"/>
<polyline stroke="#ffffff" points="450.7,859.2 453.8,858.5 456.8,858.2 459.9,857.8 462.9,857.3 466.0,856.4 469.0,855.4 472.1,854.9 475.1,854.0 478.2,853.2 481.2,851.5 484.3,850.5 487.3,849.2 490.4,846.6 493.4,845.3 496.5,843.9 499.5,841.1 502.6,837.4 505.7,835.6 508.7,833.4 511.8,830.0 514.8,825.5 516.8,823.1 518.9,820.5 520.9,817.9 523.0,814.4 525.0,810.4 527.0,807.6 529.1,804.3 531.1,801.1 533.1,795.4 535.2,789.8 537.2,785.4 539.2,781.4 541.3,774.3 543.3,766.9 545.3,761.7 547.4,753.2 549.4,744.5 551.4,735.6 553.5,729.7 555.5,720.2 557.5,707.9 559.6,696.9 561.6,687.0 563.7,675.2 565.7,664.0 567.7,650.2 569.8,642.5 571.8,627.5 573.8,617.8 575.9,605.7 577.9,596.0 579.9,584.9 582.0,574.3 584.0,565.7 586.0,555.8 588.1,552.5 590.1,546.8 592.1,543.3 594.2,541.4 596.2,539.1 598.2,542.0 600.3,544.3 602.3,548.5 604.4,553.5 606.4,560.1 608.4,566.1 610.5,576.1 612.5,585.5 614.5,595.9 616.6,605.7 618.6,618.6 620.6,628.3 622.7,641.9 624.7,652.0 626.7,662.2 628.8,675.6 630.8,687.0 632.8,698.9 634.9,707.1 636.9,717.6 638.9,725.9 641.0,736.2 643.0,743.2 645.1,749.7 647.1,758.1 649.1,765.3 651.2,772.2 653.2,776.8 655.2,781.5 657.3,786.5 659.3,792.3 661.3,796.4 663.4,800.3 665.4,803.9 667.4,806.8 669.5,809.7 671.5,811.6 673.5,815.6 675.6,817.4 677.6,821.9 679.6,822.4 681.7,825.1 683.7,827.5 685.8,829.4 687.8,831.5 689.8,832.6 691.9,835.0 693.9,838.0 695.9,839.6 698.0,839.5 700.0,841.7 702.0,842.5 704.1,844.5 706.1,845.9 708.1,846.9 710.2,847.7 713.2,849.3 716.3,851.0 719.3,851.8 722.4,852.9 725.4,854.4 728.5,855.3 731.5,856.4 734.6,856.6 737.6,857.1 740.7,857.9 743.8,858.4 746.8,858.7 749.9,859.0 752.9,859.2 756.0,859.4 759.0,859.7 762.1,859.8 765.1,860.5 768.2,860.3 771.2,860.5 774.3,860.8 777.3,860.9 780.4,860.7 783.4,860.9 786.5,861.2 789.5,861.1 792.6,860.8 795.6,860.9 798.7,861.1 801.7,860.9 804.8,861.3 807.9,861.2 810.9,861.0 814.0,861.2 817.0,861.3 820.1,861.1 823.1,860.9 826.2,861.6 829.2,861.2 832.3,861.4 835.3,861.2 838.4,861.4 841.4,860.8 844.5,861.3 847.5,861.2 850.6,861.3 853.6,861.3 856.7,861.3 859.7,861.2 862.8,860.9 865.9,861.2 868.9,861.0 872.0,861.4 875.0,861.2 878.1,861.3 881.1,861.4 884.2,860.7 887.2,861.2 890.3,861.2 893.3,861.3 896.4,861.3 899.4,861.3 902.5,861.1 905.5,861.3 908.6,861.2 911.6,861.2"/>
<polyline stroke="#ff3030" points="450.7,859.4 453.8,858.6 456.8,858.3 459.9,857.6 462.9,857.2 466.0,856.4 469.0,855.5 472.1,854.4 475.1,854.0 478.2,852.3 481.2,851.7 484.3,850.0 487.3,848.3 490.4,846.6 493.4,845.9 496.5,843.1 499.5,840.5 502.6,837.4 505.7,835.5 508.7,831.3 511.8,829.8 514.8,825.2 516.8,822.3 518.9,819.9 520.9,816.8 523.0,813.3 525.0,811.1 527.0,806.5 529.1,802.3 531.1,799.1 533.1,796.3 535.2,790.6 537.2,785.2 539.2,779.8 541.3,772.5 543.3,767.0 545.3,757.0 547.4,751.1 549.4,744.8 551.4,735.1 553.5,724.0 555.5,715.0 557.5,706.5 559.6,693.5 561.6,683.9 563.7,669.1 565.7,660.5 567.7,647.0 569.8,634.8 571.8,624.0 573.8,611.7 575.9,598.4 577.9,588.2 579.9,578.5 582.0,568.2 584.0,557.7 586.0,551.3 588.1,545.7 590.1,540.9 592.1,540.2 594.2,535.6 596.2,535.9 598.2,535.1 600.3,539.5 602.3,541.8 604.4,549.3 606.4,553.0 608.4,563.1 610.5,570.8 612.5,579.7 614.5,591.3 616.6,601.9 618.6,612.0 620.6,622.8 622.7,639.3 624.7,650.1 626.7,660.0 628.8,671.3 630.8,684.2 632.8,694.4 634.9,705.2 636.9,712.5 638.9,724.5 641.0,734.4 643.0,743.0 645.1,750.4 647.1,755.3 649.1,763.6 651.2,767.8 653.2,774.7 655.2,780.3 657.3,785.0 659.3,789.5 661.3,793.7 663.4,799.1 665.4,802.5 667.4,806.0 669.5,808.8 671.5,812.1 673.5,815.6 675.6,818.0 677.6,819.0 679.6,821.3 681.7,825.4 683.7,826.9 685.8,829.3 687.8,831.7 689.8,832.8 691.9,835.0 693.9,835.8 695.9,838.1 698.0,840.0 700.0,842.6 702.0,842.8 704.1,843.7 706.1,845.6 708.1,846.1 710.2,847.3 713.2,849.8 716.3,850.6 719.3,851.7 722.4,852.7 725.4,853.9 728.5,854.9 731.5,855.8 734.6,856.5 737.6,857.1 740.7,857.9 743.8,858.0 746.8,858.7 749.9,858.8 752.9,859.4 756.0,859.5 759.0,859.8 762.1,859.8 765.1,860.1 768.2,860.2 771.2,860.6 774.3,860.6 777.3,860.8 780.4,861.0 783.4,860.9 786.5,860.7 789.5,860.8 792.6,861.2 795.6,861.0 798.7,861.0 801.7,861.3 804.8,861.1 807.9,861.1 810.9,861.0 814.0,861.1 817.0,861.4 820.1,861.5 823.1,860.9 826.2,861.2 829.2,861.0 832.3,861.0 835.3,861.2 838.4,861.4 841.4,861.0 844.5,861.2 847.5,861.1 850.6,861.1 853.6,861.1 856.7,861.1 859.7,861.4 862.8,861.4 865.9,861.2 868.9,861.2 872.0,861.1 875.0,861.2 878.1,861.2 881.1,860.9 884.2,861.0 887.2,861.0 890.3,861.1 893.3,861.3 896.4,861.2 899.4,861.2 902.5,861.4 905.5,861.3 908.6,861.2 911.6,861.4"/>
<polyline stroke="#00ff00" points="450.7,858.9 453.8,858.5 456.8,858.2 459.9,857.7 462.9,856.8 466.0,856.2 469.0,855.4 472.1,855.0 475.1,854.2 478.2,851.7 481.2,851.4 484.3,849.9 487.3,848.9 490.4,846.8 493.4,844.8 496.5,842.0 499.5,841.3 502.6,838.2 505.7,834.9 508.7,831.9 511.8,828.7 514.8,824.9 516.8,823.0 518.9,819.1 520.9,815.5 523.0,813.0 525.0,810.0 527.0,805.2 529.1,801.8 531.1,798.7 533.1,793.8 535.2,789.0 537.2,783.2 539.2,776.5 541.3,771.9 543.3,764.8 545.3,757.4 547.4,750.9 549.4,742.0 551.4,732.1 553.5,722.1 555.5,715.3 557.5,702.0 559.6,692.1 561.6,678.9 563.7,667.8 565.7,654.0 567.7,643.7 569.8,632.2 571.8,620.5 573.8,609.2 575.9,594.8 577.9,583.6 579.9,572.5 582.0,563.4 584.0,557.3 586.0,548.1 588.1,541.4 590.1,535.8 592.1,531.3 594.2,528.2 596.2,529.3 598.2,533.8 600.3,534.7 602.3,540.3 604.4,543.6 606.4,550.9 608.4,556.7 610.5,566.2 612.5,574.2 614.5,584.8 616.6,598.2 618.6,607.9 620.6,621.1 622.7,632.7 624.7,643.7 626.7,658.8 628.8,669.3 630.8,678.9 632.8,692.6 634.9,702.1 636.9,712.3 638.9,722.4 641.0,732.3 643.0,740.1 645.1,748.3 647.1,753.7 649.1,761.3 651.2,767.3 653.2,774.8 655.2,778.8 657.3,784.2 659.3,788.1 661.3,793.8 663.4,796.8 665.4,800.1 667.4,803.4 669.5,808.6 671.5,811.9 673.5,815.0 675.6,816.2 677.6,819.1 679.6,821.7 681.7,824.8 683.7,825.8 685.8,827.8 687.8,830.8 689.8,832.7 691.9,833.9 693.9,836.0 695.9,837.3 698.0,839.7 700.0,840.8 702.0,842.6 704.1,844.0 706.1,845.2 708.1,846.4 710.2,847.1 713.2,849.0 716.3,850.3 719.3,851.9 722.4,853.2 725.4,853.3 728.5,855.1 731.5,855.0 734.6,856.0 737.6,857.7 740.7,857.7 743.8,858.2 746.8,858.5 749.9,859.0 752.9,859.4 756.0,859.2 759.0,859.8 762.1,859.8 765.1,860.4 768.2,860.5 771.2,860.2 774.3,860.7 777.3,860.9 780.4,860.8 783.4,860.7 786.5,861.0 789.5,861.1 792.6,860.9 795.6,860.9 798.7,861.1 801.7,861.2 804.8,861.2 807.9,860.7 810.9,861.2 814.0,860.9 817.0,861.2 820.1,861.1 823.1,861.5 826.2,861.2 829.2,861.2 832.3,861.2 835.3,861.3 838.4,861.4 841.4,861.4 844.5,861.2 847.5,861.3 850.6,861.2 853.6,861.2 856.7,861.3 859.7,861.3 862.8,860.9 865.9,861.4 868.9,861.3 872.0,861.2 875.0,861.4 878.1,861.3 881.1,861.1 884.2,861.1 887.2,861.2 890.3,860.7 893.3,861.1 896.4,861.0 899.4,861.3 902.5,861.0 905.5,861.0 908.6,861.3 911.6,860.9"/>
<polyline stroke="#30a0f0" points="450.7,859.2 453.8,858.9 456.8,858.1 459.9,857.8 462.9,856.8 466.0,856.6 469.0,855.4 472.1,855.2 475.1,853.5 478.2,852.0 481.2,851.1 484.3,849.5 487.3,847.5 490.4,846.7 493.4,844.8 496.5,842.0 499.5,839.6 502.6,837.2 505.7,834.8 508.7,830.5 511.8,828.4 514.8,824.2 516.8,821.4 518.9,818.1 520.9,815.9 523.0,812.9 525.0,807.5 527.0,805.8 529.1,800.6 531.1,797.1 533.1,792.7 535.2,787.4 537.2,782.2 539.2,776.0 541.3,772.1 543.3,763.2 545.3,755.9 547.4,749.0 549.4,740.1 551.4,728.4 553.5,719.3 555.5,710.4 557.5,700.1 559.6,689.5 561.6,676.0 563.7,666.1 565.7,654.3 567.7,639.9 569.8,629.5 571.8,616.7 573.8,601.5 575.9,593.7 577.9,580.1 579.9,569.1 582.0,559.0 584.0,552.6 586.0,543.0 588.1,536.7 590.1,528.2 592.1,525.9 594.2,526.4 596.2,523.4 598.2,524.7 600.3,528.3 602.3,532.6 604.4,538.0 606.4,546.6 608.4,553.3 610.5,560.1 612.5,569.4 614.5,579.6 616.6,594.0 618.6,604.5 620.6,620.6 622.7,630.1 624.7,643.6 626.7,653.3 628.8,668.2 630.8,679.1 632.8,690.4 634.9,699.5 636.9,709.3 638.9,720.8 641.0,727.3 643.0,737.5 645.1,746.4 647.1,752.8 649.1,760.1 651.2,765.8 653.2,772.2 655.2,776.2 657.3,782.2 659.3,788.3 661.3,791.7 663.4,795.8 665.4,800.9 667.4,804.3 669.5,807.7 671.5,812.0 673.5,812.9 675.6,816.3 677.6,818.0 679.6,821.7 681.7,823.7 683.7,825.6 685.8,827.7 687.8,830.1 689.8,832.8 691.9,832.9 693.9,835.4 695.9,836.9 698.0,838.4 700.0,840.0 702.0,841.9 704.1,843.3 706.1,844.5 708.1,846.7 710.2,846.8 713.2,849.1 716.3,850.0 719.3,851.9 722.4,852.4 725.4,853.9 728.5,853.8 731.5,855.4 734.6,856.1 737.6,857.2 740.7,857.6 743.8,858.0 746.8,858.6 749.9,859.0 752.9,859.4 756.0,859.3 759.0,859.9 762.1,860.2 765.1,860.1 768.2,860.5 771.2,860.5 774.3,860.7 777.3,860.9 780.4,860.8 783.4,861.0 786.5,861.2 789.5,860.9 792.6,861.1 795.6,861.3 798.7,861.1 801.7,861.1 804.8,861.0 807.9,861.1 810.9,861.1 814.0,861.1 817.0,861.2 820.1,861.3 823.1,861.1 826.2,861.2 829.2,861.2 832.3,861.1 835.3,861.1 838.4,861.0 841.4,861.3 844.5,861.3 847.5,861.1 850.6,861.4 853.6,861.4 856.7,861.1 859.7,861.3 862.8,861.3 865.9,861.1 868.9,861.1 872.0,861.1 875.0,861.2 878.1,861.2 881.1,861.2 884.2,861.2 887.2,861.5 890.3,861.3 893.3,861.1 896.4,861.3 899.4,861.2 902.5,861.2 905.5,861.1 908.6,861.3 911.6,861.4"/>
<polyline stroke="#a8c848" points="450.7,858.3 453.8,858.7 456.8,857.6 459.9,858.0 462.9,856.9 466.0,856.2 469.0,854.8 472.1,853.8 475.1,853.1 478.2,852.6 481.2,851.2 484.3,849.7 487.3,848.0 490.4,845.9 493.4,844.4 496.5,841.9 499.5,838.7 502.6,836.1 505.7,834.9 508.7,831.3 511.8,827.6 514.8,822.8 516.8,821.1 518.9,816.9 520.9,814.7 523.0,810.8 525.0,808.8 527.0,804.7 529.1,799.7 531.1,795.7 533.1,792.9 535.2,786.7 537.2,780.9 539.2,774.6 541.3,769.4 543.3,760.5 545.3,754.5 547.4,745.3 549.4,737.8 551.4,729.0 553.5,719.7 555.5,710.4 557.5,697.4 559.6,686.2 561.6,674.2 563.7,663.6 565.7,651.9 567.7,638.5 569.8,625.7 571.8,612.7 573.8,598.9 575.9,589.3 577.9,577.2 579.9,564.7 582.0,554.3 584.0,543.4 586.0,537.9 588.1,533.4 590.1,528.5 592.1,524.4 594.2,520.9 596.2,520.1 598.2,521.5 600.3,524.9 602.3,528.3 604.4,533.7 606.4,539.5 608.4,548.4 610.5,558.8 612.5,569.4 614.5,576.6 616.6,590.3 618.6,602.4 620.6,614.5 622.7,625.4 624.7,639.7 626.7,651.5 628.8,664.1 630.8,674.9 632.8,688.1 634.9,697.6 636.9,707.2 638.9,716.9 641.0,726.8 643.0,735.8 645.1,742.7 647.1,751.1 649.1,757.5 651.2,766.3 653.2,772.2 655.2,776.3 657.3,782.3 659.3,787.3 661.3,792.1 663.4,794.5 665.4,800.3 667.4,803.0 669.5,807.4 671.5,809.8 673.5,811.3 675.6,814.0 677.6,818.6 679.6,821.5 681.7,822.3 683.7,826.1 685.8,828.8 687.8,829.7 689.8,832.5 691.9,834.5 693.9,835.0 695.9,837.6 698.0,839.4 700.0,840.4 702.0,842.0 704.1,842.8 706.1,844.5 708.1,845.1 710.2,846.5 713.2,847.8 716.3,849.6 719.3,851.3 722.4,852.4 725.4,853.6 728.5,855.1 731.5,855.8 734.6,856.0 737.6,857.6 740.7,857.7 743.8,858.3 746.8,858.5 749.9,859.1 752.9,859.1 756.0,859.5 759.0,859.9 762.1,860.2 765.1,860.7 768.2,860.3 771.2,860.7 774.3,860.7 777.3,860.6 780.4,860.6 783.4,860.7 786.5,860.7 789.5,861.2 792.6,860.9 795.6,860.8 798.7,861.0 801.7,861.3 804.8,861.1 807.9,861.2 810.9,861.2 814.0,861.0 817.0,861.2 820.1,861.3 823.1,861.3 826.2,860.9 829.2,861.3 832.3,861.1 835.3,861.2 838.4,861.0 841.4,861.2 844.5,861.3 847.5,861.3 850.6,861.3 853.6,860.8 856.7,861.2 859.7,861.2 862.8,861.0 865.9,861.1 868.9,861.2 872.0,861.1 875.0,861.2 878.1,861.0 881.1,861.0 884.2,861.2 887.2,861.2 890.3,861.2 893.3,861.0 896.4,861.1 899.4,861.1 902.5,861.1 905.5,861.3 908.6,861.2 911.6,861.0"/>
<polyline stroke="#a050ff" points="450.7,858.7 453.8,858.3 456.8,858.1 459.9,857.6 462.9,857.1 466.0,856.2 469.0,855.3 472.1,854.8 475.1,852.8 478.2,852.3 481.2,850.6 484.3,849.0 487.3,847.8 490.4,846.5 493.4,843.3 496.5,841.3 499.5,839.1 502.6,835.8 505.7,832.9 508.7,830.7 511.8,826.8 514.8,824.0 516.8,820.3 518.9,816.4 520.9,814.7 523.0,810.3 525.0,808.3 527.0,803.7 529.1,798.7 531.1,793.7 533.1,789.8 535.2,784.5 537.2,778.1 539.2,775.6 541.3,768.6 543.3,758.5 545.3,750.4 547.4,744.0 549.4,735.8 551.4,726.4 553.5,716.8 555.5,707.0 557.5,695.4 559.6,684.0 561.6,671.1 563.7,658.7 565.7,645.6 567.7,633.2 569.8,622.2 571.8,606.3 573.8,599.0 575.9,582.9 577.9,570.8 579.9,561.0 582.0,547.3 584.0,542.4 586.0,534.5 588.1,526.8 590.1,520.1 592.1,515.8 594.2,514.6 596.2,513.2 598.2,516.2 600.3,518.7 602.3,521.7 604.4,529.5 606.4,534.2 608.4,543.3 610.5,551.1 612.5,563.8 614.5,574.2 616.6,585.9 618.6,597.9 620.6,611.2 622.7,622.9 624.7,636.9 626.7,647.2 628.8,659.4 630.8,672.2 632.8,684.0 634.9,695.8 636.9,706.5 638.9,715.7 641.0,725.8 643.0,734.9 645.1,741.9 647.1,749.7 649.1,757.2 651.2,764.2 653.2,769.7 655.2,775.9 657.3,781.0 659.3,785.4 661.3,789.6 663.4,793.8 665.4,798.8 667.4,801.2 669.5,806.3 671.5,808.9 673.5,811.0 675.6,813.2 677.6,817.4 679.6,820.3 681.7,822.8 683.7,825.6 685.8,827.3 687.8,829.5 689.8,831.7 691.9,832.6 693.9,835.5 695.9,836.0 698.0,838.1 700.0,839.7 702.0,841.8 704.1,843.2 706.1,845.2 708.1,845.4 710.2,846.8 713.2,848.2 716.3,850.1 719.3,851.0 722.4,852.9 725.4,854.2 728.5,854.3 731.5,855.0 734.6,857.1 737.6,856.4 740.7,857.5 743.8,858.0 746.8,858.8 749.9,859.1 752.9,859.0 756.0,859.6 759.0,859.7 762.1,860.0 765.1,859.7 768.2,860.1 771.2,860.7 774.3,860.7 777.3,860.9 780.4,861.0 783.4,861.0 786.5,860.7 789.5,861.0 792.6,860.9 795.6,861.1 798.7,861.1 801.7,861.1 804.8,861.1 807.9,860.8 810.9,860.9 814.0,861.1 817.0,861.1 820.1,861.5 823.1,861.2 826.2,860.8 829.2,861.3 832.3,861.1 835.3,861.0 838.4,861.3 841.4,861.2 844.5,861.3 847.5,861.1 850.6,861.2 853.6,861.0 856.7,861.0 859.7,861.2 862.8,860.8 865.9,861.2 868.9,861.3 872.0,861.2 875.0,861.3 878.1,861.3 881.1,861.2 884.2,861.1 887.2,861.4 890.3,861.4 893.3,861.3 896.4,861.2 899.4,861.1 902.5,861.3 905.5,861.0 908.6,861.3 911.6,861.2"/>
<polyline stroke="#ffa020" points="450.7,858.9 453.8,858.2 456.8,857.9 459.9,857.4 462.9,856.9 466.0,856.0 469.0,855.1 472.1,854.4 475.1,853.2 478.2,852.6 481.2,850.8 484.3,848.6 487.3,846.8 490.4,845.6 493.4,844.4 496.5,840.4 499.5,838.8 502.6,834.7 505.7,833.3 508.7,829.3 511.8,826.6 514.8,821.6 516.8,818.9 518.9,817.4 520.9,812.7 523.0,808.3 525.0,806.7 527.0,803.6 529.1,798.4 531.1,794.4 533.1,790.4 535.2,784.9 537.2,778.3 539.2,773.7 541.3,765.0 543.3,758.5 545.3,751.4 547.4,741.8 549.4,735.2 551.4,724.3 553.5,716.4 555.5,704.8 557.5,692.6 559.6,682.2 561.6,669.6 563.7,656.2 565.7,642.2 567.7,629.4 569.8,617.3 571.8,605.2 573.8,593.9 575.9,577.2 577.9,565.0 579.9,559.5 582.0,544.8 584.0,536.8 586.0,527.6 588.1,521.4 590.1,516.7 592.1,512.6 594.2,510.4 596.2,508.0 598.2,511.2 600.3,514.3 602.3,516.7 604.4,522.4 606.4,529.7 608.4,538.3 610.5,546.0 612.5,557.0 614.5,569.5 616.6,582.0 618.6,593.2 620.6,609.2 622.7,620.2 624.7,633.3 626.7,644.9 628.8,658.1 630.8,666.9 632.8,680.7 634.9,692.3 636.9,701.1 638.9,713.6 641.0,723.5 643.0,731.0 645.1,739.7 647.1,747.5 649.1,754.5 651.2,762.6 653.2,769.1 655.2,774.9 657.3,779.6 659.3,783.8 661.3,790.0 663.4,793.9 665.4,798.5 667.4,799.9 669.5,804.2 671.5,807.9 673.5,812.0 675.6,814.8 677.6,817.3 679.6,819.6 681.7,822.9 683.7,824.6 685.8,826.0 687.8,828.9 689.8,830.9 691.9,834.0 693.9,834.9 695.9,836.6 698.0,838.5 700.0,840.4 702.0,841.3 704.1,843.2 706.1,844.3 708.1,846.0 710.2,846.6 713.2,847.8 716.3,850.0 719.3,850.9 722.4,852.8 725.4,853.2 728.5,854.2 731.5,855.4 734.6,855.8 737.6,857.0 740.7,857.3 743.8,857.4 746.8,858.4 749.9,859.1 752.9,858.9 756.0,859.3 759.0,859.8 762.1,860.3 765.1,860.6 768.2,860.6 771.2,860.2 774.3,860.5 777.3,860.9 780.4,860.6 783.4,860.6 786.5,861.1 789.5,860.9 792.6,861.3 795.6,861.0 798.7,860.8 801.7,861.3 804.8,861.1 807.9,861.2 810.9,861.2 814.0,861.1 817.0,861.1 820.1,861.0 823.1,861.1 826.2,861.0 829.2,861.0 832.3,861.0 835.3,861.3 838.4,861.1 841.4,861.2 844.5,861.3 847.5,860.9 850.6,861.2 853.6,861.2 856.7,861.5 859.7,861.2 862.8,861.1 865.9,861.2 868.9,861.3 872.0,861.0 875.0,861.2 878.1,861.2 881.1,861.2 884.2,861.2 887.2,861.0 890.3,861.1 893.3,861.2 896.4,861.2 899.4,861.2 902.5,861.0 905.5,861.2 908.6,861.1 911.6,861.4"/>
<polyline stroke="#3c3cff" points="450.7,858.8 453.8,858.3 456.8,857.6 459.9,857.3 462.9,856.6 466.0,855.9 469.0,854.8 472.1,853.5 475.1,853.0 478.2,852.2 481.2,850.3 484.3,849.0 487.3,847.0 490.4,845.0 493.4,843.2 496.5,841.2 499.5,838.4 502.6,836.4 505.7,832.7 508.7,830.0 511.8,825.7 514.8,822.0 516.8,819.4 518.9,817.1 520.9,813.1 523.0,810.2 525.0,806.2 527.0,801.7 529.1,797.3 531.1,794.5 533.1,787.9 535.2,782.3 537.2,776.8 539.2,771.4 541.3,765.1 543.3,756.4 545.3,750.5 547.4,743.4 549.4,733.1 551.4,723.4 553.5,714.7 555.5,704.3 557.5,689.6 559.6,679.8 561.6,666.8 563.7,655.7 565.7,643.9 567.7,629.1 569.8,613.9 571.8,603.4 573.8,591.9 575.9,577.2 577.9,565.3 579.9,553.5 582.0,544.6 584.0,534.2 586.0,526.3 588.1,517.3 590.1,513.0 592.1,508.1 594.2,507.2 596.2,509.8 598.2,510.5 600.3,509.4 602.3,513.1 604.4,518.9 606.4,527.4 608.4,538.3 610.5,545.9 612.5,555.2 614.5,565.2 616.6,579.6 618.6,592.3 620.6,605.4 622.7,616.0 624.7,629.2 626.7,645.3 628.8,654.3 630.8,669.0 632.8,681.5 634.9,692.9 636.9,702.8 638.9,709.9 641.0,719.3 643.0,732.1 645.1,740.0 647.1,747.1 649.1,754.2 651.2,761.8 653.2,769.0 655.2,773.8 657.3,779.4 659.3,785.3 661.3,788.4 663.4,794.0 665.4,798.2 667.4,799.6 669.5,803.6 671.5,806.6 673.5,810.7 675.6,814.0 677.6,816.6 679.6,820.0 681.7,821.3 683.7,824.0 685.8,826.6 687.8,829.6 689.8,830.7 691.9,831.8 693.9,833.8 695.9,835.9 698.0,838.2 700.0,839.5 702.0,840.8 704.1,842.5 706.1,843.4 708.1,845.5 710.2,847.4 713.2,849.0 716.3,849.9 719.3,851.5 722.4,852.0 725.4,852.9 728.5,854.3 731.5,855.0 734.6,856.0 737.6,856.6 740.7,857.4 743.8,858.0 746.8,858.0 749.9,858.8 752.9,859.1 756.0,859.1 759.0,859.5 762.1,860.0 765.1,860.1 768.2,860.5 771.2,860.4 774.3,860.5 777.3,860.7 780.4,860.7 783.4,860.8 786.5,861.4 789.5,861.1 792.6,861.0 795.6,861.1 798.7,861.2 801.7,861.1 804.8,860.9 807.9,861.2 810.9,861.2 814.0,861.2 817.0,861.3 820.1,861.1 823.1,861.3 826.2,861.0 829.2,861.1 832.3,861.1 835.3,861.0 838.4,861.2 841.4,861.4 844.5,861.2 847.5,861.1 850.6,861.4 853.6,861.4 856.7,861.0 859.7,861.1 862.8,861.0 865.9,861.1 868.9,861.2 872.0,861.1 875.0,861.1 878.1,861.2 881.1,861.2 884.2,861.2 887.2,861.2 890.3,860.9 893.3,861.3 896.4,861.4 899.4,861.4 902.5,861.1 905.5,861.3 908.6,861.2 911.6,861.2"/>
<polyline stroke="#e040b0" points="450.7,858.8 453.8,858.8 456.8,857.9 459.9,857.5 462.9,856.4 466.0,855.7 469.0,855.5 472.1,854.4 475.1,852.8 478.2,851.3 481.2,850.1 484.3,848.9 487.3,846.6 490.4,846.2 493.4,843.3 496.5,841.2 499.5,838.8 502.6,835.2 505.7,832.3 508.7,829.0 511.8,825.6 514.8,821.2 516.8,818.3 518.9,816.1 520.9,811.9 523.0,809.7 525.0,804.2 527.0,802.4 529.1,797.4 531.1,793.5 533.1,787.7 535.2,781.4 537.2,777.3 539.2,769.0 541.3,762.6 543.3,756.3 545.3,749.4 547.4,739.7 549.4,734.3 551.4,722.8 553.5,710.8 555.5,701.0 557.5,686.9 559.6,678.5 561.6,666.8 563.7,652.8 565.7,638.6 567.7,623.9 569.8,614.9 571.8,599.1 573.8,584.5 575.9,574.4 577.9,561.9 579.9,551.5 582.0,538.1 584.0,528.5 586.0,520.5 588.1,514.1 590.1,507.4 592.1,505.2 594.2,501.7 596.2,500.9 598.2,501.2 600.3,505.1 602.3,510.0 604.4,514.9 606.4,525.5 608.4,534.3 610.5,539.0 612.5,551.8 614.5,564.9 616.6,576.4 618.6,588.4 620.6,601.1 622.7,615.3 624.7,626.2 626.7,642.5 628.8,649.8 630.8,666.9 632.8,675.7 634.9,688.4 636.9,701.9 638.9,711.7 641.0,720.1 643.0,729.1 645.1,738.3 647.1,745.8 649.1,753.1 651.2,761.1 653.2,766.5 655.2,770.5 657.3,778.4 659.3,783.7 661.3,787.1 663.4,791.0 665.4,795.4 667.4,800.4 669.5,803.6 671.5,806.8 673.5,810.3 675.6,812.9 677.6,815.3 679.6,818.3 681.7,821.3 683.7,823.8 685.8,825.0 687.8,828.9 689.8,829.2 691.9,831.9 693.9,834.1 695.9,836.4 698.0,836.8 700.0,838.7 702.0,840.4 704.1,841.3 706.1,844.5 708.1,844.9 710.2,846.3 713.2,848.2 716.3,849.4 719.3,850.6 722.4,851.9 725.4,853.3 728.5,854.7 731.5,854.9 734.6,855.7 737.6,856.0 740.7,857.0 743.8,857.8 746.8,858.6 749.9,858.0 752.9,859.3 756.0,859.4 759.0,859.5 762.1,859.8 765.1,859.8 768.2,860.5 771.2,860.6 774.3,860.5 777.3,860.9 780.4,860.9 783.4,860.6 786.5,860.9 789.5,861.0 792.6,861.1 795.6,861.0 798.7,861.1 801.7,861.3 804.8,861.0 807.9,861.3 810.9,860.9 814.0,861.2 817.0,861.5 820.1,861.4 823.1,861.1 826.2,861.3 829.2,860.9 832.3,861.0 835.3,860.9 838.4,861.1 841.4,861.0 844.5,861.3 847.5,861.0 850.6,861.3 853.6,861.2 856.7,861.4 859.7,861.2 862.8,861.1 865.9,861.2 868.9,861.4 872.0,861.1 875.0,861.1 878.1,861.2 881.1,861.1 884.2,861.1 887.2,861.3 890.3,861.2 893.3,861.5 896.4,861.3 899.4,861.1 902.5,861.3 905.5,861.1 908.6,861.1 911.6,861.5"/>
<polyline stroke="#38c8c8" points="450.7,859.0 453.8,858.0 456.8,857.9 459.9,857.3 462.9,856.9 466.0,856.4 469.0,855.5 472.1,853.1 475.1,853.0 478.2,852.0 481.2,850.2 484.3,849.5 487.3,846.4 490.4,844.3 493.4,843.3 496.5,840.5 499.5,838.6 502.6,834.9 505.7,832.7 508.7,829.1 511.8,824.6 514.8,821.0 516.8,818.7 518.9,816.5 520.9,813.3 523.0,808.0 525.0,804.7 527.0,801.1 529.1,795.9 531.1,792.2 533.1,787.9 535.2,782.1 537.2,776.3 539.2,770.0 541.3,761.1 543.3,755.5 545.3,748.0 547.4,740.1 549.4,731.5 551.4,722.2 553.5,713.0 555.5,700.6 557.5,690.4 559.6,678.8 561.6,665.3 563.7,653.8 565.7,636.4 567.7,623.1 569.8,612.5 571.8,595.0 573.8,583.7 575.9,575.4 577.9,559.5 579.9,549.5 582.0,540.0 584.0,528.2 586.0,517.7 588.1,511.8 590.1,509.2 592.1,504.1 594.2,501.9 596.2,498.3 598.2,501.3 600.3,505.4 602.3,509.6 604.4,517.1 606.4,522.6 608.4,528.5 610.5,542.4 612.5,550.0 614.5,561.9 616.6,572.8 618.6,588.3 620.6,598.5 622.7,610.8 624.7,623.1 626.7,641.2 628.8,652.1 630.8,664.8 632.8,676.4 634.9,689.3 636.9,698.2 638.9,707.0 641.0,717.8 643.0,729.6 645.1,737.8 647.1,744.5 649.1,752.5 651.2,760.3 653.2,764.9 655.2,771.4 657.3,776.5 659.3,782.6 661.3,786.2 663.4,792.0 665.4,796.6 667.4,799.6 669.5,804.2 671.5,805.7 673.5,809.3 675.6,814.0 677.6,815.6 679.6,817.9 681.7,821.2 683.7,823.2 685.8,826.1 687.8,828.1 689.8,830.2 691.9,831.9 693.9,834.6 695.9,836.4 698.0,837.4 700.0,839.5 702.0,840.5 704.1,842.4 706.1,844.2 708.1,844.6 710.2,846.0 713.2,847.5 716.3,849.5 719.3,850.9 722.4,851.6 725.4,853.8 728.5,853.6 731.5,854.9 734.6,855.9 737.6,856.6 740.7,857.1 743.8,858.0 746.8,858.2 749.9,859.0 752.9,859.6 756.0,859.3 759.0,859.7 762.1,859.8 765.1,860.0 768.2,860.1 771.2,860.3 774.3,860.8 777.3,860.4 780.4,860.2 783.4,861.0 786.5,861.1 789.5,860.8 792.6,860.8 795.6,860.9 798.7,860.8 801.7,861.3 804.8,861.1 807.9,861.1 810.9,860.9 814.0,861.3 817.0,861.2 820.1,861.2 823.1,861.2 826.2,861.2 829.2,861.2 832.3,861.5 835.3,861.2 838.4,861.2 841.4,861.3 844.5,861.7 847.5,861.3 850.6,861.3 853.6,861.3 856.7,861.0 859.7,861.1 862.8,861.2 865.9,861.1 868.9,860.7 872.0,861.3 875.0,861.1 878.1,861.3 881.1,861.0 884.2,861.0 887.2,861.2 890.3,861.1 893.3,861.3 896.4,861.4 899.4,861.1 902.5,861.0 905.5,861.2 908.6,861.3 911.6,861.5"/>
</g>
<line x1="449.50" y1="861.60" x2="1281.00" y2="861.60" stroke="#f4f4f4" stroke-width="1.2" />
<line x1="448.50" y1="862.50" x2="875.10" y2="862.50" stroke="#000" stroke-width="1" />
<rect x="357.00" y="952.00" width="100.00" height="62.00" fill="#ddd5b5" />
<rect x="357.00" y="952.00" width="100.00" height="2.50" fill="#efe6c6" />
<rect x="357.00" y="952.00" width="10.00" height="62.00" fill="url(#g48)" />
<rect x="357.00" y="1010.00" width="100.00" height="4.00" fill="url(#g49)" />
<polygon points="375.00,958.50 388.00,958.50 385.50,961.00 377.50,961.00 377.50,978.00 375.00,980.50" fill="#b0a988" />
<polygon points="388.00,958.50 388.00,980.50 375.00,980.50 377.50,978.00 385.50,978.00 385.50,961.00" fill="#eee6c8" />
<rect x="377.50" y="961.00" width="8.00" height="17.00" fill="#fbfbfb" />
<text x="381.5" y="974.0" font-size="10" fill="#c05050" text-anchor="middle">V</text>
<rect x="392.00" y="957.00" width="25.00" height="25.00" fill="url(#g50)" />
<rect x="392.00" y="980.00" width="25.00" height="2.00" fill="#a59e80" />
<path d="M400.5,968.0 L400.5,965.0 Q404.5,960.0 408.5,965.0 L408.5,968.0" fill="none" stroke="#222" stroke-width="1.8"/>
<rect x="398.50" y="968.00" width="12.00" height="9.00" fill="#2a2a2a" />
<rect x="403.50" y="971.00" width="2.00" height="3.00" fill="#888" />
<rect x="419.00" y="957.00" width="25.00" height="25.00" fill="url(#g51)" />
<rect x="419.00" y="980.00" width="25.00" height="2.00" fill="#a59e80" />
<path d="M427,963.0 L427,975.0 L440,975.0 M427,975.0 L422,980.0" fill="none" stroke="#111" stroke-width="1.6"/>
<text x="436" y="970.0" font-size="10" fill="#111" text-anchor="middle">X</text>
<rect x="423.00" y="960.00" width="3.00" height="3.00" fill="#3cff3c" />
<rect x="446.00" y="957.00" width="10.00" height="25.00" fill="url(#g52)" />
<text x="451" y="971.0" font-size="8" fill="#333" text-anchor="middle">X</text>
<polygon points="375.00,988.00 388.00,988.00 385.50,990.50 377.50,990.50 377.50,1007.50 375.00,1010.00" fill="#b0a988" />
<polygon points="388.00,988.00 388.00,1010.00 375.00,1010.00 377.50,1007.50 385.50,1007.50 385.50,990.50" fill="#eee6c8" />
<rect x="377.50" y="990.50" width="8.00" height="17.00" fill="#fbfbfb" />
<text x="381.5" y="1003.5" font-size="10" fill="#c05050" text-anchor="middle">I</text>
<rect x="392.00" y="986.50" width="25.00" height="25.00" fill="url(#g53)" />
<rect x="392.00" y="1009.50" width="25.00" height="2.00" fill="#a59e80" />
<path d="M400.5,997.5 L400.5,994.5 Q404.5,989.5 408.5,994.5 L408.5,997.5" fill="none" stroke="#222" stroke-width="1.8"/>
<rect x="398.50" y="997.50" width="12.00" height="9.00" fill="#2a2a2a" />
<rect x="403.50" y="1000.50" width="2.00" height="3.00" fill="#888" />
<rect x="419.00" y="986.50" width="25.00" height="25.00" fill="url(#g54)" />
<rect x="419.00" y="1009.50" width="25.00" height="2.00" fill="#a59e80" />
<path d="M427,992.5 L427,1004.5 L440,1004.5 M427,1004.5 L422,1009.5" fill="none" stroke="#111" stroke-width="1.6"/>
<text x="436" y="999.5" font-size="10" fill="#111" text-anchor="middle">Y</text>
<rect x="423.00" y="989.50" width="3.00" height="3.00" fill="#3cff3c" />
<rect x="446.00" y="986.50" width="10.00" height="25.00" fill="url(#g55)" />
<text x="451" y="1000.5" font-size="8" fill="#333" text-anchor="middle">Y</text>
<rect x="456.00" y="952.00" width="194.00" height="62.00" fill="#d9d1b1" />
<rect x="456.00" y="952.00" width="194.00" height="2.50" fill="#efe6c6" />
<rect x="456.00" y="952.00" width="12.00" height="62.00" fill="url(#g56)" />
<rect x="640.00" y="952.00" width="10.00" height="62.00" fill="url(#g57)" />
<rect x="456.00" y="1010.00" width="194.00" height="4.00" fill="url(#g58)" />
<rect x="473" y="957" width="16" height="16" rx="3" fill="#1565c8"/>
<path d="M476.5,965 L479.8,968.2 L485.5,962" fill="none" stroke="#ffffff" stroke-width="1.5"/>
<rect x="577.00" y="954.00" width="35.00" height="26.00" fill="#000" />
<polyline points="580,974 589,959 601,974 610,959" fill="none" stroke="#3a9ad8" stroke-width="1.3"/>
<rect x="473" y="988" width="16" height="16" rx="3" fill="#1565c8"/>
<path d="M476.5,996 L479.8,999.2 L485.5,993" fill="none" stroke="#ffffff" stroke-width="1.5"/>
<rect x="577.00" y="985.00" width="35.00" height="26.00" fill="#000" />
<polyline points="580,1005 589,990 601,1005 610,990" fill="none" stroke="#a8c848" stroke-width="1.3"/>
<rect x="616.00" y="954.00" width="18.00" height="57.00" fill="#c9c9c9" />
<rect x="616.00" y="954.00" width="18.00" height="16.00" fill="url(#g59)" />
<polygon points="621.00,966.00 629.00,966.00 625.00,960.00" fill="#111" />
<rect x="616.00" y="970.00" width="18.00" height="20.00" fill="url(#g60)" />
<rect x="616.00" y="995.00" width="18.00" height="16.00" fill="url(#g61)" />
<polygon points="621.00,1000.00 629.00,1000.00 625.00,1006.00" fill="#111" />
<rect x="747.00" y="968.00" width="74.00" height="29.50" fill="#4e4216" />
<rect x="748.50" y="969.50" width="71.00" height="26.50" fill="url(#g62)" />
<polygon points="748.50,969.50 819.50,969.50 816.50,971.50 751.50,971.50" fill="#f4d050" opacity="0.8"/>
<polygon points="748.50,969.50 751.50,971.50 751.50,993.60 748.50,996.00" fill="#eccb3c" opacity="0.8"/>
<polygon points="748.50,996.00 819.50,996.00 816.50,993.60 751.50,993.60" fill="url(#g64)" />
<polygon points="819.50,969.50 819.50,996.00 816.50,993.60 816.50,971.50" fill="url(#g63)" />
<rect x="952.50" y="962.00" width="87.00" height="53.00" fill="#dcd4b4" />
<rect x="952.50" y="962.00" width="87.00" height="3.00" fill="#eee5c4" />
<rect x="952.50" y="962.00" width="8.00" height="53.00" fill="url(#g65)" />
<rect x="1030.00" y="962.00" width="9.50" height="53.00" fill="url(#g66)" />
<rect x="952.50" y="1012.00" width="87.00" height="3.00" fill="#9c9578" />
<polygon points="1000.00,967.00 1011.50,978.00 1000.00,989.00 988.50,978.00" fill="#c0c0c0" stroke="#444" stroke-width="1"/>
<polygon points="981.00,979.50 992.50,990.50 981.00,1001.50 969.50,990.50" fill="#c0c0c0" stroke="#444" stroke-width="1"/>
<polygon points="1019.00,979.50 1030.50,990.50 1019.00,1001.50 1007.50,990.50" fill="#c0c0c0" stroke="#444" stroke-width="1"/>
<polygon points="1000.00,992.00 1011.50,1003.00 1000.00,1014.00 988.50,1003.00" fill="#c0c0c0" stroke="#444" stroke-width="1"/>
<rect x="1042.50" y="959.50" width="282.00" height="56.00" fill="#dcd4b4" />
<rect x="1042.50" y="959.50" width="282.00" height="3.00" fill="#eee5c4" />
<rect x="1042.50" y="959.50" width="14.00" height="56.00" fill="url(#g67)" />
<rect x="1310.00" y="959.50" width="14.50" height="56.00" fill="url(#g68)" />
<rect x="1042.50" y="1011.00" width="282.00" height="4.00" fill="url(#g69)" />
<rect x="1058.00" y="972.50" width="251.00" height="27.50" fill="#ffffff" />
<rect x="1058.00" y="1000.00" width="251.00" height="2.00" fill="#e8e2cc" />
<line x1="1160.00" y1="973.00" x2="1160.00" y2="1000.00" stroke="#c4c4c4" stroke-width="1" />
<line x1="1227.00" y1="973.00" x2="1227.00" y2="1000.00" stroke="#c4c4c4" stroke-width="1" />
<rect x="1068.00" y="978.50" width="10.00" height="11.00" fill="#fafafa" stroke="#7a7ab0" stroke-width="1"/>
<line x1="1070.00" y1="984.00" x2="1076.00" y2="984.00" stroke="#3a3a8a" stroke-width="1.2" />
<line x1="1073.00" y1="981.00" x2="1073.00" y2="987.00" stroke="#3a3a8a" stroke-width="1.2" />
<rect x="1081.00" y="974.00" width="20.00" height="20.00" fill="#000" />
<circle cx="1091" cy="984" r="4" fill="none" stroke="#ffff00" stroke-width="1.5"/>
<line x1="1084.00" y1="984.00" x2="1098.00" y2="984.00" stroke="#ffff00" stroke-width="1.3" />
<line x1="1091.00" y1="977.00" x2="1091.00" y2="991.00" stroke="#ffff00" stroke-width="1.3" />
<rect x="1102.00" y="973.00" width="55.00" height="22.50" fill="#ffff00" />
<rect x="1416.50" y="501.00" width="129.50" height="39.50" fill="#2e2e2e" />
<rect x="1418.00" y="502.50" width="126.50" height="36.50" fill="url(#g70)" />
<polygon points="1418.00,502.50 1544.50,502.50 1540.50,504.50 1422.00,504.50" fill="#b0b0b0" opacity="0.8"/>
<polygon points="1418.00,502.50 1422.00,504.50 1422.00,535.80 1418.00,539.00" fill="#a6a6a6" opacity="0.8"/>
<polygon points="1418.00,539.00 1544.50,539.00 1540.50,535.80 1422.00,535.80" fill="url(#g72)" />
<polygon points="1544.50,502.50 1544.50,539.00 1540.50,535.80 1540.50,504.50" fill="url(#g71)" />
<rect x="1579.00" y="501.00" width="125.50" height="39.50" fill="#2e2e2e" />
<rect x="1580.50" y="502.50" width="122.50" height="36.50" fill="url(#g70)" />
<polygon points="1580.50,502.50 1703.00,502.50 1699.00,504.50 1584.50,504.50" fill="#b0b0b0" opacity="0.8"/>
<polygon points="1580.50,502.50 1584.50,504.50 1584.50,535.80 1580.50,539.00" fill="#a6a6a6" opacity="0.8"/>
<polygon points="1580.50,539.00 1703.00,539.00 1699.00,535.80 1584.50,535.80" fill="url(#g72)" />
<polygon points="1703.00,502.50 1703.00,539.00 1699.00,535.80 1699.00,504.50" fill="url(#g71)" />
<line x1="1402.00" y1="925.50" x2="1409.00" y2="925.50" stroke="#222" stroke-width="1.2" />
<line x1="1405.00" y1="916.50" x2="1408.50" y2="916.50" stroke="#222" stroke-width="1.5" />
<line x1="1405.00" y1="908.50" x2="1408.50" y2="908.50" stroke="#222" stroke-width="1.5" />
<line x1="1405.00" y1="900.50" x2="1408.50" y2="900.50" stroke="#222" stroke-width="1.5" />
<line x1="1405.00" y1="892.50" x2="1408.50" y2="892.50" stroke="#222" stroke-width="1.5" />
<line x1="1402.00" y1="884.50" x2="1409.00" y2="884.50" stroke="#222" stroke-width="1.2" />
<line x1="1405.00" y1="875.50" x2="1408.50" y2="875.50" stroke="#222" stroke-width="1.5" />
<line x1="1405.00" y1="867.50" x2="1408.50" y2="867.50" stroke="#222" stroke-width="1.5" />
<line x1="1405.00" y1="859.50" x2="1408.50" y2="859.50" stroke="#222" stroke-width="1.5" />
<line x1="1405.00" y1="851.50" x2="1408.50" y2="851.50" stroke="#222" stroke-width="1.5" />
<line x1="1402.00" y1="843.50" x2="1409.00" y2="843.50" stroke="#222" stroke-width="1.2" />
<line x1="1405.00" y1="834.50" x2="1408.50" y2="834.50" stroke="#222" stroke-width="1.5" />
<line x1="1405.00" y1="826.50" x2="1408.50" y2="826.50" stroke="#222" stroke-width="1.5" />
<line x1="1405.00" y1="818.50" x2="1408.50" y2="818.50" stroke="#222" stroke-width="1.5" />
<line x1="1405.00" y1="810.50" x2="1408.50" y2="810.50" stroke="#222" stroke-width="1.5" />
<line x1="1402.00" y1="802.50" x2="1409.00" y2="802.50" stroke="#222" stroke-width="1.2" />
<line x1="1405.00" y1="793.50" x2="1408.50" y2="793.50" stroke="#222" stroke-width="1.5" />
<line x1="1405.00" y1="785.50" x2="1408.50" y2="785.50" stroke="#222" stroke-width="1.5" />
<line x1="1405.00" y1="777.50" x2="1408.50" y2="777.50" stroke="#222" stroke-width="1.5" />
<line x1="1405.00" y1="769.50" x2="1408.50" y2="769.50" stroke="#222" stroke-width="1.5" />
<line x1="1402.00" y1="761.50" x2="1409.00" y2="761.50" stroke="#222" stroke-width="1.2" />
<line x1="1405.00" y1="752.50" x2="1408.50" y2="752.50" stroke="#222" stroke-width="1.5" />
<line x1="1405.00" y1="744.50" x2="1408.50" y2="744.50" stroke="#222" stroke-width="1.5" />
<line x1="1405.00" y1="736.50" x2="1408.50" y2="736.50" stroke="#222" stroke-width="1.5" />
<line x1="1405.00" y1="728.50" x2="1408.50" y2="728.50" stroke="#222" stroke-width="1.5" />
<line x1="1402.00" y1="720.50" x2="1409.00" y2="720.50" stroke="#222" stroke-width="1.2" />
<line x1="1405.00" y1="711.50" x2="1408.50" y2="711.50" stroke="#222" stroke-width="1.5" />
<line x1="1405.00" y1="703.50" x2="1408.50" y2="703.50" stroke="#222" stroke-width="1.5" />
<line x1="1405.00" y1="695.50" x2="1408.50" y2="695.50" stroke="#222" stroke-width="1.5" />
<line x1="1405.00" y1="687.50" x2="1408.50" y2="687.50" stroke="#222" stroke-width="1.5" />
<line x1="1402.00" y1="679.50" x2="1409.00" y2="679.50" stroke="#222" stroke-width="1.2" />
<line x1="1405.00" y1="670.50" x2="1408.50" y2="670.50" stroke="#222" stroke-width="1.5" />
<line x1="1405.00" y1="662.50" x2="1408.50" y2="662.50" stroke="#222" stroke-width="1.5" />
<line x1="1405.00" y1="654.50" x2="1408.50" y2="654.50" stroke="#222" stroke-width="1.5" />
<line x1="1405.00" y1="646.50" x2="1408.50" y2="646.50" stroke="#222" stroke-width="1.5" />
<line x1="1402.00" y1="638.50" x2="1409.00" y2="638.50" stroke="#222" stroke-width="1.2" />
<line x1="1405.00" y1="629.50" x2="1408.50" y2="629.50" stroke="#222" stroke-width="1.5" />
<line x1="1405.00" y1="621.50" x2="1408.50" y2="621.50" stroke="#222" stroke-width="1.5" />
<line x1="1405.00" y1="613.50" x2="1408.50" y2="613.50" stroke="#222" stroke-width="1.5" />
<line x1="1405.00" y1="605.50" x2="1408.50" y2="605.50" stroke="#222" stroke-width="1.5" />
<line x1="1402.00" y1="597.50" x2="1409.00" y2="597.50" stroke="#222" stroke-width="1.2" />
<line x1="1405.00" y1="588.50" x2="1408.50" y2="588.50" stroke="#222" stroke-width="1.5" />
<line x1="1405.00" y1="580.50" x2="1408.50" y2="580.50" stroke="#222" stroke-width="1.5" />
<line x1="1405.00" y1="572.50" x2="1408.50" y2="572.50" stroke="#222" stroke-width="1.5" />
<line x1="1405.00" y1="564.50" x2="1408.50" y2="564.50" stroke="#222" stroke-width="1.5" />
<line x1="1402.00" y1="556.50" x2="1409.00" y2="556.50" stroke="#222" stroke-width="1.2" />
<line x1="1411.50" y1="925.00" x2="1411.50" y2="932.00" stroke="#222" stroke-width="1.2" />
<line x1="1422.50" y1="926.50" x2="1422.50" y2="930.00" stroke="#222" stroke-width="1.5" />
<line x1="1433.50" y1="926.50" x2="1433.50" y2="930.00" stroke="#222" stroke-width="1.5" />
<line x1="1443.50" y1="926.50" x2="1443.50" y2="930.00" stroke="#222" stroke-width="1.5" />
<line x1="1454.50" y1="926.50" x2="1454.50" y2="930.00" stroke="#222" stroke-width="1.5" />
<line x1="1465.50" y1="925.00" x2="1465.50" y2="932.00" stroke="#222" stroke-width="1.2" />
<line x1="1475.50" y1="926.50" x2="1475.50" y2="930.00" stroke="#222" stroke-width="1.5" />
<line x1="1486.50" y1="926.50" x2="1486.50" y2="930.00" stroke="#222" stroke-width="1.5" />
<line x1="1497.50" y1="926.50" x2="1497.50" y2="930.00" stroke="#222" stroke-width="1.5" />
<line x1="1507.50" y1="926.50" x2="1507.50" y2="930.00" stroke="#222" stroke-width="1.5" />
<line x1="1518.50" y1="925.00" x2="1518.50" y2="932.00" stroke="#222" stroke-width="1.2" />
<line x1="1529.50" y1="926.50" x2="1529.50" y2="930.00" stroke="#222" stroke-width="1.5" />
<line x1="1540.50" y1="926.50" x2="1540.50" y2="930.00" stroke="#222" stroke-width="1.5" />
<line x1="1550.50" y1="926.50" x2="1550.50" y2="930.00" stroke="#222" stroke-width="1.5" />
<line x1="1561.50" y1="926.50" x2="1561.50" y2="930.00" stroke="#222" stroke-width="1.5" />
<line x1="1572.50" y1="925.00" x2="1572.50" y2="932.00" stroke="#222" stroke-width="1.2" />
<line x1="1582.50" y1="926.50" x2="1582.50" y2="930.00" stroke="#222" stroke-width="1.5" />
<line x1="1593.50" y1="926.50" x2="1593.50" y2="930.00" stroke="#222" stroke-width="1.5" />
<line x1="1604.50" y1="926.50" x2="1604.50" y2="930.00" stroke="#222" stroke-width="1.5" />
<line x1="1615.50" y1="926.50" x2="1615.50" y2="930.00" stroke="#222" stroke-width="1.5" />
<line x1="1625.50" y1="925.00" x2="1625.50" y2="932.00" stroke="#222" stroke-width="1.2" />
<line x1="1636.50" y1="926.50" x2="1636.50" y2="930.00" stroke="#222" stroke-width="1.5" />
<line x1="1647.50" y1="926.50" x2="1647.50" y2="930.00" stroke="#222" stroke-width="1.5" />
<line x1="1657.50" y1="926.50" x2="1657.50" y2="930.00" stroke="#222" stroke-width="1.5" />
<line x1="1668.50" y1="926.50" x2="1668.50" y2="930.00" stroke="#222" stroke-width="1.5" />
<line x1="1679.50" y1="925.00" x2="1679.50" y2="932.00" stroke="#222" stroke-width="1.2" />
<line x1="1689.50" y1="926.50" x2="1689.50" y2="930.00" stroke="#222" stroke-width="1.5" />
<line x1="1700.50" y1="926.50" x2="1700.50" y2="930.00" stroke="#222" stroke-width="1.5" />
<line x1="1711.50" y1="926.50" x2="1711.50" y2="930.00" stroke="#222" stroke-width="1.5" />
<line x1="1722.50" y1="926.50" x2="1722.50" y2="930.00" stroke="#222" stroke-width="1.5" />
<line x1="1732.50" y1="925.00" x2="1732.50" y2="932.00" stroke="#222" stroke-width="1.2" />
<line x1="1743.50" y1="926.50" x2="1743.50" y2="930.00" stroke="#222" stroke-width="1.5" />
<line x1="1754.50" y1="926.50" x2="1754.50" y2="930.00" stroke="#222" stroke-width="1.5" />
<line x1="1764.50" y1="926.50" x2="1764.50" y2="930.00" stroke="#222" stroke-width="1.5" />
<line x1="1775.50" y1="926.50" x2="1775.50" y2="930.00" stroke="#222" stroke-width="1.5" />
<line x1="1786.50" y1="925.00" x2="1786.50" y2="932.00" stroke="#222" stroke-width="1.2" />
<line x1="1797.50" y1="926.50" x2="1797.50" y2="930.00" stroke="#222" stroke-width="1.5" />
<line x1="1807.50" y1="926.50" x2="1807.50" y2="930.00" stroke="#222" stroke-width="1.5" />
<line x1="1818.50" y1="926.50" x2="1818.50" y2="930.00" stroke="#222" stroke-width="1.5" />
<line x1="1829.50" y1="926.50" x2="1829.50" y2="930.00" stroke="#222" stroke-width="1.5" />
<line x1="1839.50" y1="925.00" x2="1839.50" y2="932.00" stroke="#222" stroke-width="1.2" />
<line x1="1850.50" y1="926.50" x2="1850.50" y2="930.00" stroke="#222" stroke-width="1.5" />
<line x1="1861.50" y1="926.50" x2="1861.50" y2="930.00" stroke="#222" stroke-width="1.5" />
<line x1="1871.50" y1="926.50" x2="1871.50" y2="930.00" stroke="#222" stroke-width="1.5" />
<line x1="1882.50" y1="926.50" x2="1882.50" y2="930.00" stroke="#222" stroke-width="1.5" />
<line x1="1893.50" y1="925.00" x2="1893.50" y2="932.00" stroke="#222" stroke-width="1.2" />
<line x1="1409.00" y1="556.00" x2="1409.00" y2="925.00" stroke="#222" stroke-width="0.0" />
<rect x="1434.00" y="564.50" width="457.00" height="357.50" fill="#ffffff" stroke="#6e6e6e" stroke-width="1.3"/>
<text x="0" y="0" font-size="38.5" font-weight="bold" fill="#0a14e0" transform="translate(4.6,28.9) scale(0.925,1)" style="font-family:Liberation Sans">PLCTS</text>
<polygon points="92.50,2.50 99.00,2.50 99.00,7.50 94.00,7.50" fill="#e02020" />
<line x1="1764.00" y1="15.00" x2="1776.00" y2="15.00" stroke="#111" stroke-width="1.2" />
<rect x="1822.5" y="10.5" width="10" height="10" rx="1.5" fill="none" stroke="#111" stroke-width="1.2"/>
<path d="M1825,9 L1826.5,8 L1834,8 Q1835,8 1835,9 L1835,17 L1834,18" fill="none" stroke="#111" stroke-width="1.2"/>
<line x1="1881.00" y1="9.50" x2="1893.00" y2="21.50" stroke="#111" stroke-width="1.2" />
<line x1="1893.00" y1="9.50" x2="1881.00" y2="21.50" stroke="#111" stroke-width="1.2" />
<rect x="0.00" y="1018.00" width="1919.00" height="11.00" fill="#efeef4" />
<rect x="0.00" y="1018.00" width="489.00" height="1.80" fill="#7d7ba2" />
<rect x="489.00" y="1018.00" width="44.00" height="1.80" fill="#ffffff" />
<rect x="533.00" y="1018.00" width="18.00" height="1.80" fill="#f2c050" />
<rect x="551.00" y="1018.00" width="130.00" height="1.80" fill="#e8e8ec" />
<rect x="560.00" y="1018.00" width="4.00" height="1.60" fill="#222" />
<rect x="568.00" y="1018.00" width="4.00" height="1.60" fill="#222" />
<rect x="588.00" y="1018.00" width="4.00" height="1.60" fill="#222" />
<rect x="600.00" y="1018.00" width="4.00" height="1.60" fill="#222" />
<rect x="612.00" y="1018.00" width="4.00" height="1.60" fill="#222" />
<rect x="632.00" y="1018.00" width="4.00" height="1.60" fill="#222" />
<rect x="645.00" y="1018.00" width="4.00" height="1.60" fill="#222" />
<rect x="655.00" y="1018.00" width="4.00" height="1.60" fill="#222" />
<rect x="664.00" y="1018.00" width="4.00" height="1.60" fill="#222" />
<rect x="681.00" y="1018.00" width="490.00" height="1.80" fill="#d8d8dc" />
<rect x="1170.00" y="1018.00" width="749.00" height="1.80" fill="#8886a8" />
<rect x="1290.00" y="1017.50" width="6.00" height="1.80" fill="#111" />
<rect x="1300.00" y="1017.50" width="6.00" height="1.80" fill="#111" />
<rect x="1312.00" y="1017.50" width="6.00" height="1.80" fill="#111" />
<rect x="1325.00" y="1017.50" width="6.00" height="1.80" fill="#111" />
<rect x="1345.00" y="1017.50" width="6.00" height="1.80" fill="#111" />
<rect x="1362.00" y="1017.50" width="6.00" height="1.80" fill="#111" />
<rect x="1375.00" y="1017.50" width="6.00" height="1.80" fill="#111" />
<rect x="1392.00" y="1017.50" width="6.00" height="1.80" fill="#111" />
<rect x="1405.00" y="1017.50" width="6.00" height="1.80" fill="#111" /><text x="21.00" y="63.80" font-size="16.2" fill="#1a1a1a" text-anchor="start" font-weight="normal" >Spectrometer SN:</text>
<text transform="translate(162.50,63.88) scale(0.96,1)" font-size="14.2" fill="#222" text-anchor="start" font-weight="normal" >2205202412310325020011</text>
<text x="18.00" y="89.73" font-size="16" fill="#1a1a1a" text-anchor="start" font-weight="normal" >Area(mm2)</text>
<text x="104.00" y="90.23" font-size="16" fill="#1a1a1a" text-anchor="start" font-weight="normal" >Integrate(ms)</text>
<text x="211.00" y="89.73" font-size="16" fill="#1a1a1a" text-anchor="start" font-weight="normal" >Avg</text>
<text x="274.00" y="87.73" font-size="16" fill="#1a1a1a" text-anchor="start" font-weight="normal" >Boxcar</text>
<text x="25.00" y="114.73" font-size="16" fill="#1a1a1a" text-anchor="start" font-weight="normal" >0.0725</text>
<text x="111.00" y="114.73" font-size="16" fill="#1a1a1a" text-anchor="start" font-weight="normal" >17</text>
<text x="210.00" y="112.23" font-size="16" fill="#1a1a1a" text-anchor="start" font-weight="normal" >1</text>
<text x="277.00" y="112.23" font-size="16" fill="#1a1a1a" text-anchor="start" font-weight="normal" >1</text>
<text x="96.50" y="165.09" font-size="24" fill="#151515" text-anchor="middle" font-weight="normal" >Dark</text>
<text x="274.50" y="165.09" font-size="24" fill="#151515" text-anchor="middle" font-weight="normal" >Calibrate</text>
<text x="19.00" y="215.73" font-size="16" fill="#111" text-anchor="start" font-weight="bold" >EL</text>
<text x="64.00" y="218.23" font-size="16" fill="#111" text-anchor="start" font-weight="bold" >PL</text>
<text x="24.00" y="259.73" font-size="16" fill="#1a1a1a" text-anchor="start" font-weight="normal" >Keithley 2450</text>
<text x="136.00" y="253.40" font-size="9.5" fill="#222" text-anchor="start" font-weight="bold" >I</text>
<text x="139.00" y="265.90" font-size="9.5" fill="#222" text-anchor="start" font-weight="bold" >0</text>
<text transform="translate(149.00,261.73) scale(0.955,1)" font-size="16" fill="#1a1a1a" text-anchor="start" font-weight="normal" >USB0::0x05E6::0x2450:</text>
<text transform="translate(181.00,311.52) scale(0.95,1)" font-size="21" fill="#151515" text-anchor="middle" font-weight="normal" >Source Sweeping</text>
<text x="114.00" y="349.23" font-size="16" fill="#1a1a1a" text-anchor="start" font-weight="normal" >Terminal</text>
<text x="183.00" y="350.73" font-size="16" fill="#1a1a1a" text-anchor="start" font-weight="normal" >Compl I(mA)</text>
<text x="287.00" y="353.23" font-size="16" fill="#1a1a1a" text-anchor="start" font-weight="normal" >NPLC</text>
<text x="64.50" y="375.34" font-size="17" fill="#111" text-anchor="middle" font-weight="bold" >Voltage</text>
<text x="128.00" y="377.59" font-size="17" fill="#111" text-anchor="start" font-weight="bold" >Front</text>
<text x="194.00" y="376.23" font-size="16" fill="#1a1a1a" text-anchor="start" font-weight="normal" >400</text>
<text x="287.00" y="376.23" font-size="16" fill="#1a1a1a" text-anchor="start" font-weight="normal" >1</text>
<text x="61.00" y="438.09" font-size="17" fill="#1a1a1a" text-anchor="start" font-weight="normal" >Step</text>
<text x="108.00" y="421.23" font-size="16" fill="#1a1a1a" text-anchor="start" font-weight="normal" >Start(V)</text>
<text x="201.00" y="421.23" font-size="16" fill="#1a1a1a" text-anchor="start" font-weight="normal" >Stop(V)</text>
<text x="116.00" y="445.23" font-size="16" fill="#1a1a1a" text-anchor="start" font-weight="normal" >2.5</text>
<text x="197.00" y="445.23" font-size="16" fill="#1a1a1a" text-anchor="start" font-weight="normal" >2.7</text>
<text x="283.00" y="445.23" font-size="16" fill="#1a1a1a" text-anchor="start" font-weight="normal" >50</text>
<text x="42.00" y="488.73" font-size="16" fill="#1a1a1a" text-anchor="start" font-weight="normal" >Avg</text>
<text x="95.00" y="489.23" font-size="16" fill="#1a1a1a" text-anchor="start" font-weight="normal" >Delay(s)</text>
<text x="38.00" y="513.23" font-size="16" fill="#1a1a1a" text-anchor="start" font-weight="normal" >1</text>
<text x="102.00" y="513.73" font-size="16" fill="#1a1a1a" text-anchor="start" font-weight="normal" >0</text>
<text transform="translate(215.50,510.34) scale(0.96,1)" font-size="17" fill="#151515" text-anchor="middle" font-weight="normal" >Pulse OFF</text>
<text transform="translate(191.00,583.55) scale(0.96,1)" font-size="22.5" fill="#151515" text-anchor="middle" font-weight="normal" >Start Measure</text>
<text x="60.00" y="662.58" font-size="10" fill="#222" text-anchor="start" font-weight="bold" >%</text>
<text transform="translate(298.00,672.48) scale(0.93,1)" font-size="23" fill="#151515" text-anchor="middle" font-weight="normal" >Save as</text>
<text transform="translate(78.00,804.84) scale(0.95,1)" font-size="24" fill="#151515" text-anchor="middle" font-weight="normal" >EXIT</text>
<text x="155.00" y="804.19" font-size="14.5" fill="#2a58e0" text-anchor="start" font-weight="normal" >Email:</text>
<text transform="translate(338.00,804.19) scale(1.08,1)" font-size="14.5" fill="#2a58e0" text-anchor="end" font-weight="normal" >zbyan@nju.edu.cn</text>
<text x="458.50" y="426.05" font-size="15.5" fill="#1a1a1a" text-anchor="end" font-weight="normal" >0</text>
<text x="458.50" y="389.12" font-size="15.5" fill="#1a1a1a" text-anchor="end" font-weight="normal" >10000</text>
<text x="458.50" y="352.19" font-size="15.5" fill="#1a1a1a" text-anchor="end" font-weight="normal" >20000</text>
<text x="458.50" y="315.26" font-size="15.5" fill="#1a1a1a" text-anchor="end" font-weight="normal" >30000</text>
<text x="458.50" y="278.33" font-size="15.5" fill="#1a1a1a" text-anchor="end" font-weight="normal" >40000</text>
<text x="458.50" y="241.40" font-size="15.5" fill="#1a1a1a" text-anchor="end" font-weight="normal" >50000</text>
<text x="458.50" y="204.47" font-size="15.5" fill="#1a1a1a" text-anchor="end" font-weight="normal" >60000</text>
<text x="458.50" y="167.54" font-size="15.5" fill="#1a1a1a" text-anchor="end" font-weight="normal" >70000</text>
<text x="458.50" y="130.61" font-size="15.5" fill="#1a1a1a" text-anchor="end" font-weight="normal" >80000</text>
<text x="458.50" y="93.68" font-size="15.5" fill="#1a1a1a" text-anchor="end" font-weight="normal" >90000</text>
<text x="458.50" y="56.75" font-size="15.5" fill="#1a1a1a" text-anchor="end" font-weight="normal" >100000</text>
<text x="470.70" y="445.55" font-size="15.5" fill="#1a1a1a" text-anchor="middle" font-weight="normal" >2.45</text>
<text x="580.70" y="445.55" font-size="15.5" fill="#1a1a1a" text-anchor="middle" font-weight="normal" >2.5</text>
<text x="690.70" y="445.55" font-size="15.5" fill="#1a1a1a" text-anchor="middle" font-weight="normal" >2.55</text>
<text x="800.70" y="445.55" font-size="15.5" fill="#1a1a1a" text-anchor="middle" font-weight="normal" >2.6</text>
<text x="910.70" y="445.55" font-size="15.5" fill="#1a1a1a" text-anchor="middle" font-weight="normal" >2.65</text>
<text x="1020.70" y="445.55" font-size="15.5" fill="#1a1a1a" text-anchor="middle" font-weight="normal" >2.7</text>
<text x="692.00" y="469.55" font-size="15.5" fill="#1a1a1a" text-anchor="middle" font-weight="normal" >Voltage (V)</text>
<text transform="translate(392.00,238.00) rotate(-90) scale(1.0,1)" y="5.55" font-size="15.5" fill="#1a1a1a" text-anchor="middle" font-weight="normal">Current Density (mA/cm2)</text>
<text x="1030.00" y="426.05" font-size="15.5" fill="#c8412a" text-anchor="start" font-weight="normal" >0</text>
<text x="1030.00" y="392.48" font-size="15.5" fill="#c8412a" text-anchor="start" font-weight="normal" >200000</text>
<text x="1030.00" y="358.90" font-size="15.5" fill="#c8412a" text-anchor="start" font-weight="normal" >400000</text>
<text x="1030.00" y="325.33" font-size="15.5" fill="#c8412a" text-anchor="start" font-weight="normal" >600000</text>
<text x="1030.00" y="291.76" font-size="15.5" fill="#c8412a" text-anchor="start" font-weight="normal" >800000</text>
<text x="1030.00" y="258.19" font-size="15.5" fill="#c8412a" text-anchor="start" font-weight="normal" >1E+6</text>
<text x="1030.00" y="224.61" font-size="15.5" fill="#c8412a" text-anchor="start" font-weight="normal" >1.2E+6</text>
<text x="1030.00" y="191.04" font-size="15.5" fill="#c8412a" text-anchor="start" font-weight="normal" >1.4E+6</text>
<text x="1030.00" y="157.47" font-size="15.5" fill="#c8412a" text-anchor="start" font-weight="normal" >1.6E+6</text>
<text x="1030.00" y="123.89" font-size="15.5" fill="#c8412a" text-anchor="start" font-weight="normal" >1.8E+6</text>
<text x="1030.00" y="90.32" font-size="15.5" fill="#c8412a" text-anchor="start" font-weight="normal" >2E+6</text>
<text x="1030.00" y="56.75" font-size="15.5" fill="#c8412a" text-anchor="start" font-weight="normal" >2.2E+6</text>
<text transform="translate(1098.00,236.00) rotate(90) scale(1.0,1)" y="5.55" font-size="15.5" fill="#a8141a" text-anchor="middle" font-weight="bold">Luminance(cd/m2)</text>
<text x="1209.50" y="426.35" font-size="15.5" fill="#1a1a1a" text-anchor="end" font-weight="normal" >0</text>
<text x="1209.50" y="397.75" font-size="15.5" fill="#1a1a1a" text-anchor="end" font-weight="normal" >0.25</text>
<text x="1209.50" y="369.15" font-size="15.5" fill="#1a1a1a" text-anchor="end" font-weight="normal" >0.5</text>
<text x="1209.50" y="340.55" font-size="15.5" fill="#1a1a1a" text-anchor="end" font-weight="normal" >0.75</text>
<text x="1209.50" y="311.95" font-size="15.5" fill="#1a1a1a" text-anchor="end" font-weight="normal" >1</text>
<text x="1209.50" y="283.35" font-size="15.5" fill="#1a1a1a" text-anchor="end" font-weight="normal" >1.25</text>
<text x="1209.50" y="254.75" font-size="15.5" fill="#1a1a1a" text-anchor="end" font-weight="normal" >1.5</text>
<text x="1209.50" y="226.15" font-size="15.5" fill="#1a1a1a" text-anchor="end" font-weight="normal" >1.75</text>
<text x="1209.50" y="197.55" font-size="15.5" fill="#1a1a1a" text-anchor="end" font-weight="normal" >2</text>
<text x="1209.50" y="168.95" font-size="15.5" fill="#1a1a1a" text-anchor="end" font-weight="normal" >2.25</text>
<text x="1209.50" y="140.35" font-size="15.5" fill="#1a1a1a" text-anchor="end" font-weight="normal" >2.5</text>
<text x="1209.50" y="111.75" font-size="15.5" fill="#1a1a1a" text-anchor="end" font-weight="normal" >2.75</text>
<text x="1209.50" y="83.15" font-size="15.5" fill="#1a1a1a" text-anchor="end" font-weight="normal" >3</text>
<text x="1209.50" y="54.55" font-size="15.5" fill="#1a1a1a" text-anchor="end" font-weight="normal" >3.25</text>
<text x="1221.90" y="446.55" font-size="15.5" fill="#1a1a1a" text-anchor="middle" font-weight="normal" >2.475</text>
<text x="1287.17" y="446.55" font-size="15.5" fill="#1a1a1a" text-anchor="middle" font-weight="normal" >2.5</text>
<text x="1352.44" y="446.55" font-size="15.5" fill="#1a1a1a" text-anchor="middle" font-weight="normal" >2.525</text>
<text x="1417.71" y="446.55" font-size="15.5" fill="#1a1a1a" text-anchor="middle" font-weight="normal" >2.55</text>
<text x="1482.98" y="446.55" font-size="15.5" fill="#1a1a1a" text-anchor="middle" font-weight="normal" >2.575</text>
<text x="1548.25" y="446.55" font-size="15.5" fill="#1a1a1a" text-anchor="middle" font-weight="normal" >2.6</text>
<text x="1613.52" y="446.55" font-size="15.5" fill="#1a1a1a" text-anchor="middle" font-weight="normal" >2.625</text>
<text x="1678.79" y="446.55" font-size="15.5" fill="#1a1a1a" text-anchor="middle" font-weight="normal" >2.65</text>
<text x="1744.06" y="446.55" font-size="15.5" fill="#1a1a1a" text-anchor="middle" font-weight="normal" >2.675</text>
<text x="1809.33" y="446.55" font-size="15.5" fill="#1a1a1a" text-anchor="middle" font-weight="normal" >2.7</text>
<text x="1509.00" y="470.55" font-size="15.5" fill="#1a1a1a" text-anchor="middle" font-weight="normal" >Voltage (V)</text>
<text transform="translate(1165.00,236.00) rotate(-90) scale(1.0,1)" y="5.37" font-size="15" fill="#111" text-anchor="middle" font-weight="bold">EQE (%)</text>
<text x="1820.50" y="426.55" font-size="15.5" fill="#c8412a" text-anchor="start" font-weight="normal" >0</text>
<text x="1820.50" y="392.84" font-size="15.5" fill="#c8412a" text-anchor="start" font-weight="normal" >1000</text>
<text x="1820.50" y="359.13" font-size="15.5" fill="#c8412a" text-anchor="start" font-weight="normal" >2000</text>
<text x="1820.50" y="325.42" font-size="15.5" fill="#c8412a" text-anchor="start" font-weight="normal" >3000</text>
<text x="1820.50" y="291.71" font-size="15.5" fill="#c8412a" text-anchor="start" font-weight="normal" >4000</text>
<text x="1820.50" y="258.00" font-size="15.5" fill="#c8412a" text-anchor="start" font-weight="normal" >5000</text>
<text x="1820.50" y="224.29" font-size="15.5" fill="#c8412a" text-anchor="start" font-weight="normal" >6000</text>
<text x="1820.50" y="190.59" font-size="15.5" fill="#c8412a" text-anchor="start" font-weight="normal" >7000</text>
<text x="1820.50" y="156.88" font-size="15.5" fill="#c8412a" text-anchor="start" font-weight="normal" >8000</text>
<text x="1820.50" y="123.17" font-size="15.5" fill="#c8412a" text-anchor="start" font-weight="normal" >9000</text>
<text x="1820.50" y="89.46" font-size="15.5" fill="#c8412a" text-anchor="start" font-weight="normal" >10000</text>
<text x="1820.50" y="55.75" font-size="15.5" fill="#c8412a" text-anchor="start" font-weight="normal" >11000</text>
<text transform="translate(1880.00,236.00) rotate(90) scale(1.0,1)" y="5.55" font-size="15.5" fill="#a8141a" text-anchor="middle" font-weight="bold">Irradiance</text>
<text x="438.00" y="903.15" font-size="15.5" fill="#1a1a1a" text-anchor="end" font-weight="normal" >-5.00</text>
<text x="438.00" y="866.75" font-size="15.5" fill="#1a1a1a" text-anchor="end" font-weight="normal" >0.00</text>
<text x="438.00" y="830.35" font-size="15.5" fill="#1a1a1a" text-anchor="end" font-weight="normal" >5.00</text>
<text x="438.00" y="793.95" font-size="15.5" fill="#1a1a1a" text-anchor="end" font-weight="normal" >10.00</text>
<text x="438.00" y="757.55" font-size="15.5" fill="#1a1a1a" text-anchor="end" font-weight="normal" >15.00</text>
<text x="438.00" y="721.15" font-size="15.5" fill="#1a1a1a" text-anchor="end" font-weight="normal" >20.00</text>
<text x="438.00" y="684.75" font-size="15.5" fill="#1a1a1a" text-anchor="end" font-weight="normal" >25.00</text>
<text x="438.00" y="648.35" font-size="15.5" fill="#1a1a1a" text-anchor="end" font-weight="normal" >30.00</text>
<text x="438.00" y="611.95" font-size="15.5" fill="#1a1a1a" text-anchor="end" font-weight="normal" >35.00</text>
<text x="438.00" y="575.55" font-size="15.5" fill="#1a1a1a" text-anchor="end" font-weight="normal" >40.00</text>
<text x="438.00" y="539.15" font-size="15.5" fill="#1a1a1a" text-anchor="end" font-weight="normal" >45.00</text>
<text x="438.00" y="502.75" font-size="15.5" fill="#1a1a1a" text-anchor="end" font-weight="normal" >50.00</text>
<text x="449.60" y="923.55" font-size="15.5" fill="#1a1a1a" text-anchor="middle" font-weight="normal" >550</text>
<text x="486.60" y="923.55" font-size="15.5" fill="#1a1a1a" text-anchor="middle" font-weight="normal" >570</text>
<text x="523.60" y="923.55" font-size="15.5" fill="#1a1a1a" text-anchor="middle" font-weight="normal" >590</text>
<text x="560.60" y="923.55" font-size="15.5" fill="#1a1a1a" text-anchor="middle" font-weight="normal" >610</text>
<text x="597.60" y="923.55" font-size="15.5" fill="#1a1a1a" text-anchor="middle" font-weight="normal" >630</text>
<text x="634.60" y="923.55" font-size="15.5" fill="#1a1a1a" text-anchor="middle" font-weight="normal" >650</text>
<text x="671.60" y="923.55" font-size="15.5" fill="#1a1a1a" text-anchor="middle" font-weight="normal" >670</text>
<text x="708.60" y="923.55" font-size="15.5" fill="#1a1a1a" text-anchor="middle" font-weight="normal" >690</text>
<text x="745.60" y="923.55" font-size="15.5" fill="#1a1a1a" text-anchor="middle" font-weight="normal" >710</text>
<text x="782.60" y="923.55" font-size="15.5" fill="#1a1a1a" text-anchor="middle" font-weight="normal" >730</text>
<text x="819.60" y="923.55" font-size="15.5" fill="#1a1a1a" text-anchor="middle" font-weight="normal" >750</text>
<text x="856.60" y="923.55" font-size="15.5" fill="#1a1a1a" text-anchor="middle" font-weight="normal" >770</text>
<text x="893.60" y="923.55" font-size="15.5" fill="#1a1a1a" text-anchor="middle" font-weight="normal" >790</text>
<text x="930.60" y="923.55" font-size="15.5" fill="#1a1a1a" text-anchor="middle" font-weight="normal" >810</text>
<text x="967.60" y="923.55" font-size="15.5" fill="#1a1a1a" text-anchor="middle" font-weight="normal" >830</text>
<text x="1004.60" y="923.55" font-size="15.5" fill="#1a1a1a" text-anchor="middle" font-weight="normal" >850</text>
<text x="1041.60" y="923.55" font-size="15.5" fill="#1a1a1a" text-anchor="middle" font-weight="normal" >870</text>
<text x="1078.60" y="923.55" font-size="15.5" fill="#1a1a1a" text-anchor="middle" font-weight="normal" >890</text>
<text x="1115.60" y="923.55" font-size="15.5" fill="#1a1a1a" text-anchor="middle" font-weight="normal" >910</text>
<text x="1152.60" y="923.55" font-size="15.5" fill="#1a1a1a" text-anchor="middle" font-weight="normal" >930</text>
<text x="1189.60" y="923.55" font-size="15.5" fill="#1a1a1a" text-anchor="middle" font-weight="normal" >950</text>
<text x="1226.60" y="923.55" font-size="15.5" fill="#1a1a1a" text-anchor="middle" font-weight="normal" >970</text>
<text x="1263.60" y="923.55" font-size="15.5" fill="#1a1a1a" text-anchor="middle" font-weight="normal" >990</text>
<text x="1300.60" y="923.55" font-size="15.5" fill="#1a1a1a" text-anchor="middle" font-weight="normal" >1010</text>
<text x="862.00" y="947.55" font-size="15.5" fill="#1a1a1a" text-anchor="middle" font-weight="normal" >WaveLength (nm)</text>
<text transform="translate(384.00,773.00) rotate(-90) scale(1.0,1)" y="5.55" font-size="15.5" fill="#1a1a1a" text-anchor="middle" font-weight="normal">Intensity (uW/nm)</text>
<text x="497.00" y="971.73" font-size="16" fill="#1a1a1a" text-anchor="start" font-weight="normal" >2.59388V</text>
<text x="497.00" y="1002.73" font-size="16" fill="#1a1a1a" text-anchor="start" font-weight="normal" >2.59796V</text>
<text x="1106.00" y="989.73" font-size="16" fill="#1a1a1a" text-anchor="start" font-weight="normal" >Cursor</text>
<text x="1167.00" y="989.73" font-size="16" fill="#1a1a1a" text-anchor="start" font-weight="normal" >550</text>
<text x="1233.00" y="989.73" font-size="16" fill="#1a1a1a" text-anchor="start" font-weight="normal" >0.00</text>
<text x="1481.25" y="526.48" font-size="16" fill="#151515" text-anchor="middle" font-weight="normal" >Luminance</text>
<text x="1641.75" y="526.48" font-size="16" fill="#151515" text-anchor="middle" font-weight="normal" >Irradiance</text>
<text x="1399.50" y="930.55" font-size="15.5" fill="#1a1a1a" text-anchor="end" font-weight="normal" >0.0</text>
<text x="1399.50" y="889.55" font-size="15.5" fill="#1a1a1a" text-anchor="end" font-weight="normal" >0.1</text>
<text x="1399.50" y="848.55" font-size="15.5" fill="#1a1a1a" text-anchor="end" font-weight="normal" >0.2</text>
<text x="1399.50" y="807.55" font-size="15.5" fill="#1a1a1a" text-anchor="end" font-weight="normal" >0.3</text>
<text x="1399.50" y="766.55" font-size="15.5" fill="#1a1a1a" text-anchor="end" font-weight="normal" >0.4</text>
<text x="1399.50" y="725.55" font-size="15.5" fill="#1a1a1a" text-anchor="end" font-weight="normal" >0.5</text>
<text x="1399.50" y="684.55" font-size="15.5" fill="#1a1a1a" text-anchor="end" font-weight="normal" >0.6</text>
<text x="1399.50" y="643.55" font-size="15.5" fill="#1a1a1a" text-anchor="end" font-weight="normal" >0.7</text>
<text x="1399.50" y="602.55" font-size="15.5" fill="#1a1a1a" text-anchor="end" font-weight="normal" >0.8</text>
<text x="1399.50" y="561.55" font-size="15.5" fill="#1a1a1a" text-anchor="end" font-weight="normal" >0.9</text>
<text x="1411.60" y="950.55" font-size="15.5" fill="#1a1a1a" text-anchor="middle" font-weight="normal" >0.0</text>
<text x="1465.13" y="950.55" font-size="15.5" fill="#1a1a1a" text-anchor="middle" font-weight="normal" >0.1</text>
<text x="1518.66" y="950.55" font-size="15.5" fill="#1a1a1a" text-anchor="middle" font-weight="normal" >0.2</text>
<text x="1572.19" y="950.55" font-size="15.5" fill="#1a1a1a" text-anchor="middle" font-weight="normal" >0.3</text>
<text x="1625.72" y="950.55" font-size="15.5" fill="#1a1a1a" text-anchor="middle" font-weight="normal" >0.4</text>
<text x="1679.25" y="950.55" font-size="15.5" fill="#1a1a1a" text-anchor="middle" font-weight="normal" >0.5</text>
<text x="1732.78" y="950.55" font-size="15.5" fill="#1a1a1a" text-anchor="middle" font-weight="normal" >0.6</text>
<text x="1786.31" y="950.55" font-size="15.5" fill="#1a1a1a" text-anchor="middle" font-weight="normal" >0.7</text>
<text x="1839.84" y="950.55" font-size="15.5" fill="#1a1a1a" text-anchor="middle" font-weight="normal" >0.8</text>
<text x="1893.37" y="950.55" font-size="15.5" fill="#1a1a1a" text-anchor="middle" font-weight="normal" >0.9</text>
<text x="1645.00" y="975.05" font-size="15.5" fill="#1a1a1a" text-anchor="middle" font-weight="normal" >CIE x</text>
<text transform="translate(1364.00,742.00) rotate(-90) scale(1.0,1)" y="5.55" font-size="15.5" fill="#1a1a1a" text-anchor="middle" font-weight="normal">CIE y</text>
<text x="1632.00" y="576.05" font-size="15.5" fill="#1a1a1a" text-anchor="middle" font-weight="normal" >CIE Graph</text>
<path transform="translate(129.50,8.30) scale(1.950)" d="M0.9,0.8 L2,2 M0.6,3.8 L2,3.8 L2,8.6 L3.2,7.4 M4.6,0.3 L5.2,1.1 M8.3,0.3 L7.6,1.1 M3.6,1.6 L9.6,1.6 M5.6,1.6 L5.6,4.4 M7.6,1.6 L7.6,4.4 M4.2,2.6 L4.8,3.8 M9,2.6 L8.4,3.8 M3.4,4.5 L9.8,4.5 M4.4,5.6 L8.8,5.6 L8.8,9.6 L4.4,9.6 Z M4.4,7.6 L8.8,7.6" fill="none" stroke="#111" stroke-width="1.282" stroke-linecap="square" stroke-linejoin="miter"/>
<path transform="translate(152.10,8.30) scale(1.950)" d="M2.6,0.5 L7.4,0.5 L7.4,3.4 L2.6,3.4 Z M2.6,1.95 L7.4,1.95 M0.5,4.4 L9.5,4.4 M2,5.2 L8,5.2 L8,7.6 L2,7.6 Z M2,6.4 L8,6.4 M5,5.2 L5,9.5 M2,8.5 L8,8.5 M0.5,9.6 L9.5,9.6" fill="none" stroke="#111" stroke-width="0.974" stroke-linecap="square" stroke-linejoin="miter"/>
<path transform="translate(174.70,8.30) scale(1.950)" d="M2,1.2 L3,3.2 M5,0.4 L5,4 M8.2,1 L7,3.2 M0.6,4.6 L9.4,4.6 M3.8,4.6 L3.7,6.8 Q3.2,8.8 0.8,9.8 M6.2,4.6 L6.2,8.8 Q6.3,9.3 7,9.3 L9.3,9.3 L9.5,7.6" fill="none" stroke="#111" stroke-width="1.282" stroke-linecap="square" stroke-linejoin="miter"/>
<path transform="translate(197.30,8.30) scale(1.950)" d="M1.8,2.2 L8.4,2.2 L8.4,7.6 L1.8,7.6 Z M1.8,4.9 L8.4,4.9 M5.1,0.3 L5.1,8.8 Q5.1,9.4 5.9,9.4 L9.4,9.4 L9.6,8" fill="none" stroke="#111" stroke-width="1.282" stroke-linecap="square" stroke-linejoin="miter"/>
<path transform="translate(288.00,408.50) scale(1.350)" d="M4.6,0.2 L4.6,3 M4.6,1.6 L8.2,1.6 M2,3.2 L8,3.2 L8,6.2 L2,6.2 Z M1.6,7.6 L0.8,9.4 M4,7.8 L4.4,9.3 M6,7.8 L6.6,9.3 M8.4,7.5 L9.4,9.2" fill="none" stroke="#1a1a1a" stroke-width="1.111" stroke-linecap="square" stroke-linejoin="miter"/>
<path transform="translate(303.00,408.50) scale(1.350)" d="M2.6,0.2 L2.6,4 M1.1,0.9 L1.6,1.9 M4.1,0.9 L3.6,1.9 M0.5,2.5 L4.6,2.5 M2.6,2.6 L0.8,4.2 M2.6,2.6 L4.4,4 M0.4,6 L4.9,6 M2.6,4.6 L1.6,7.4 L4.2,9.6 M3.9,5 Q3.4,8 0.6,9.6 M6.6,0.2 L5.6,3.6 M6,2 L9.6,2 M9,2 Q8.4,6.5 5.4,9.6 M6.4,4.2 Q7.5,7.5 9.7,9.6" fill="none" stroke="#1a1a1a" stroke-width="1.111" stroke-linecap="square" stroke-linejoin="miter"/>
<text x="74.00" y="659.15" font-size="13" fill="#1a1a1a" text-anchor="start" font-weight="normal" >&lt;</text>
<path transform="translate(82.00,648.20) scale(1.250)" d="M4,0.4 L4,9.6 M6.1,0.4 L6.1,9.6 M1,2.6 L4,2.6 M1,5 L4,5 M0.5,8.2 L4,7 M6.1,2.6 L9.2,2.6 M6.1,5 L9.2,5 M6.1,7.6 L9.6,7.6" fill="none" stroke="#1a1a1a" stroke-width="1.040" stroke-linecap="square" stroke-linejoin="miter"/>
<path transform="translate(97.30,648.20) scale(1.250)" d="M0.9,1 L2,2 M0.7,4 L1.8,5 M0.5,9.2 L2.1,6.6 M4,3 L9,3 M6.5,0.4 L6.5,5.6 M3,5.6 L9.7,5.6 M6,6 L4.2,9 M4.2,9 L9,8.5 M8,7.4 L9.2,9.4" fill="none" stroke="#1a1a1a" stroke-width="1.040" stroke-linecap="square" stroke-linejoin="miter"/>
<path transform="translate(112.60,648.20) scale(1.250)" d="M0.6,0.6 L4,0.6 L4,3.4 L0.6,3.4 Z M2.3,3.4 L2.3,8.4 M2.3,6 L4,6 M0.8,5 L0.8,8.8 L4.5,8 M6.6,0.3 L5,3 M6,1.6 L9,1.6 Q7.8,3.8 5.4,5 M7,3 L9.8,5 M6,6 L9.5,6 L9.5,9.5 L6,9.5 Z" fill="none" stroke="#1a1a1a" stroke-width="1.040" stroke-linecap="square" stroke-linejoin="miter"/>
<path transform="translate(127.90,648.20) scale(1.250)" d="M3,0.3 L0.5,3 M3,3.5 L0.5,6 M2,5 L2,9.8 M4.6,1 L9,1 Q7.5,3.5 5,4.6 M6,2.6 L9.6,4.8 M5,6.2 L9.5,6.2 M7.2,6.2 L7.2,9.2 M4.6,9.4 L10,9.4" fill="none" stroke="#1a1a1a" stroke-width="1.040" stroke-linecap="square" stroke-linejoin="miter"/>
<text x="144.50" y="659.15" font-size="13" fill="#1a1a1a" text-anchor="start" font-weight="normal" >&gt;</text>
<path transform="translate(768.00,977.50) scale(1.350)" d="M2,1.2 L3,3.2 M5,0.4 L5,4 M8.2,1 L7,3.2 M0.6,4.6 L9.4,4.6 M3.8,4.6 L3.7,6.8 Q3.2,8.8 0.8,9.8 M6.2,4.6 L6.2,8.8 Q6.3,9.3 7,9.3 L9.3,9.3 L9.5,7.6" fill="none" stroke="#111" stroke-width="1.481" stroke-linecap="square" stroke-linejoin="miter"/>
<path transform="translate(783.50,977.50) scale(1.350)" d="M0.6,1 L3.6,1 L3.6,3.6 L1,3.6 L0.8,6 L3.8,6 Q3.8,9.5 2.6,9.3 M5.6,0.5 L9,0.5 L9,3 L5.6,3 Z M5,4.5 L9.5,4.5 L9.5,7.4 L5,7.4 Z M7.25,3.6 L7.25,9.3 M4.8,9.6 L9.8,9 M8.6,8.2 L9.6,9.8" fill="none" stroke="#111" stroke-width="1.481" stroke-linecap="square" stroke-linejoin="miter"/></svg><div style="position:absolute;left:1434px;top:564px;width:457px;height:358px;background:radial-gradient(ellipse 165px 100px at 175.0px 233.0px, rgba(255,255,255,1) 0%, rgba(255,255,255,0.92) 8%, rgba(255,255,255,0.62) 25%, rgba(255,255,255,0.28) 50%, rgba(255,255,255,0.08) 76%, rgba(255,255,255,0) 100%),conic-gradient(from 0deg at 183.0px 233.0px, #40ff00 0deg, #90ff00 20deg, #ffff00 44deg, #ffc000 60deg, #ff7000 75deg, #ff0000 96deg, #ff0060 118deg, #ff00ff 152deg, #c000ff 182deg, #8000ff 200deg, #5000ff 215deg, #0000ff 232deg, #0070ff 246deg, #00d0ff 259deg, #00ffff 274deg, #00ff90 299deg, #00ff20 325deg, #10ff00 342deg, #40ff00 360deg);clip-path:polygon(88.4px 356.0px, 88.3px 356.0px, 88.1px 356.1px, 87.8px 356.2px, 87.5px 356.1px, 87.0px 356.0px, 86.5px 355.7px, 85.8px 355.2px, 85.0px 354.7px, 84.3px 354.2px, 83.5px 353.7px, 82.8px 353.2px, 82.0px 352.7px, 81.3px 352.2px, 80.5px 351.6px, 79.5px 351.0px, 78.4px 350.1px, 77.0px 349.2px, 75.6px 348.1px, 74.3px 347.1px, 73.1px 346.2px, 72.1px 345.4px, 71.3px 344.7px, 70.5px 343.9px, 69.7px 343.1px, 68.8px 342.1px, 67.8px 341.0px, 66.7px 339.7px, 65.5px 338.3px, 64.3px 336.8px, 63.0px 335.0px, 61.7px 333.1px, 60.3px 331.0px, 58.8px 328.8px, 57.3px 326.3px, 55.7px 323.5px, 54.0px 320.4px, 52.2px 317.1px, 50.3px 313.5px, 48.4px 309.5px, 46.4px 305.2px, 44.2px 300.5px, 41.9px 295.5px, 39.6px 290.2px, 37.2px 284.4px, 34.9px 278.2px, 32.5px 271.5px, 30.1px 264.4px, 27.8px 256.8px, 25.4px 248.9px, 23.1px 240.7px, 20.7px 231.9px, 18.4px 222.8px, 16.1px 213.2px, 13.9px 203.6px, 11.9px 193.8px, 10.1px 184.0px, 8.3px 173.9px, 6.7px 163.7px, 5.3px 153.7px, 4.2px 143.8px, 3.3px 134.2px, 2.5px 124.6px, 2.1px 115.3px, 1.9px 106.2px, 2.0px 97.5px, 2.4px 89.2px, 3.1px 81.1px, 4.1px 73.4px, 5.4px 66.2px, 7.1px 59.6px, 9.0px 53.6px, 11.3px 48.0px, 13.9px 43.1px, 16.8px 38.7px, 19.8px 35.0px, 23.0px 32.1px, 26.5px 29.8px, 30.1px 28.2px, 33.9px 27.1px, 37.7px 26.3px, 41.6px 26.1px, 45.7px 26.5px, 49.8px 27.2px, 53.9px 28.2px, 58.0px 29.4px, 62.1px 30.6px, 66.2px 32.1px, 70.4px 33.8px, 74.5px 35.6px, 78.6px 37.4px, 82.5px 39.2px, 86.4px 41.1px, 90.3px 43.1px, 94.1px 45.1px, 98.0px 47.1px, 101.7px 49.2px, 105.5px 51.3px, 109.2px 53.5px, 112.9px 55.7px, 116.6px 58.0px, 120.3px 60.3px, 124.0px 62.6px, 127.6px 65.0px, 131.3px 67.4px, 135.0px 69.9px, 138.6px 72.4px, 142.3px 74.9px, 145.9px 77.4px, 149.5px 80.0px, 153.1px 82.6px, 156.8px 85.2px, 160.4px 87.9px, 164.0px 90.5px, 167.6px 93.2px, 171.3px 95.9px, 174.9px 98.6px, 178.5px 101.3px, 182.2px 104.1px, 185.8px 106.8px, 189.5px 109.6px, 193.1px 112.4px, 196.7px 115.1px, 200.3px 117.9px, 203.9px 120.7px, 207.5px 123.5px, 211.1px 126.2px, 214.7px 129.0px, 218.3px 131.8px, 221.9px 134.6px, 225.5px 137.4px, 229.1px 140.1px, 232.6px 142.9px, 236.1px 145.6px, 239.6px 148.4px, 243.1px 151.1px, 246.6px 153.8px, 250.0px 156.5px, 253.5px 159.2px, 256.9px 161.8px, 260.2px 164.4px, 263.6px 167.1px, 266.9px 169.6px, 270.2px 172.2px, 273.4px 174.7px, 276.6px 177.2px, 279.8px 179.7px, 282.9px 182.2px, 286.0px 184.6px, 289.1px 186.9px, 292.1px 189.3px, 295.0px 191.6px, 297.9px 193.8px, 300.7px 196.0px, 303.5px 198.2px, 306.1px 200.3px, 308.6px 202.2px, 310.8px 203.9px, 313.0px 205.7px, 315.5px 207.6px, 318.4px 209.8px, 321.9px 212.6px, 326.0px 215.8px, 330.3px 219.1px, 334.4px 222.3px, 338.1px 225.1px, 341.2px 227.6px, 344.0px 229.8px, 346.6px 231.8px, 348.9px 233.6px, 351.1px 235.4px, 353.1px 236.9px, 354.9px 238.3px, 356.5px 239.6px, 358.0px 240.7px, 359.5px 241.8px, 360.8px 242.9px, 362.0px 243.8px, 363.1px 244.7px, 364.1px 245.5px, 365.1px 246.3px, 366.0px 246.9px, 366.7px 247.5px, 367.4px 248.1px, 368.1px 248.6px, 368.6px 249.0px, 369.2px 249.4px, 369.6px 249.7px, 370.0px 250.0px, 370.3px 250.3px, 370.7px 250.6px, 371.1px 250.9px, 371.4px 251.2px, 371.8px 251.5px, 372.1px 251.7px, 372.4px 252.0px, 372.6px 252.1px, 372.8px 252.2px, 372.9px 252.3px, 373.0px 252.4px, 373.1px 252.5px);"></div><svg width="1919" height="1029" viewBox="0 0 1919 1029" style="position:absolute;left:0;top:0"><polyline points="1562.4,821.4 1562.9,820.9 1563.4,820.4 1564.0,819.8 1564.6,819.1 1565.3,818.4 1566.0,817.7 1566.8,816.8 1567.6,816.0 1568.6,815.0 1569.6,814.0 1570.7,812.9 1571.9,811.7 1573.2,810.5 1574.6,809.1 1576.1,807.7 1577.8,806.2 1579.6,804.5 1581.6,802.8 1583.7,800.9 1586.1,799.0 1588.6,796.9 1591.3,794.7 1594.3,792.4 1597.4,790.1 1600.9,787.6 1604.6,785.1 1608.6,782.5 1612.8,779.9 1617.4,777.3 1622.2,774.7 1627.3,772.1 1632.7,769.6 1638.3,767.2 1644.1,764.9 1650.0,762.9 1656.2,761.1 1662.5,759.6 1669.0,758.3 1675.6,757.5 1682.3,756.9 1689.1,756.8 1695.8,757.1 1702.4,757.7 1708.8,758.8 1715.0,760.1 1720.7,761.7 1737.9,768.5 1751.3,775.8 1765.4,784.9" fill="none" stroke="#3a3a3a" stroke-width="1"/>
<rect x="1624.5" y="837.4" width="8.4" height="8.4" fill="none" stroke="#000" stroke-width="1.3"/>
<rect x="1646.1" y="830.2" width="8.4" height="8.4" fill="none" stroke="#000" stroke-width="1.3"/>
<rect x="1673.6" y="821.1" width="8.4" height="8.4" fill="none" stroke="#000" stroke-width="1.3"/>
<rect x="1689.8" y="816.4" width="8.4" height="8.4" fill="none" stroke="#000" stroke-width="1.3"/>
<rect x="1704.8" y="811.1" width="8.4" height="8.4" fill="none" stroke="#000" stroke-width="1.3"/>
<rect x="1708.8" y="810.2" width="8.4" height="8.4" fill="none" stroke="#000" stroke-width="1.3"/>
<rect x="1718.3" y="806.8" width="8.4" height="8.4" fill="none" stroke="#000" stroke-width="1.3"/>
<rect x="1719.3" y="808.3" width="8.4" height="8.4" fill="none" stroke="#000" stroke-width="1.3"/>
<rect x="1729.8" y="803.3" width="8.4" height="8.4" fill="none" stroke="#000" stroke-width="1.3"/>
<rect x="1734.5" y="801.1" width="8.4" height="8.4" fill="none" stroke="#000" stroke-width="1.3"/>
<rect x="1740.8" y="800.2" width="8.4" height="8.4" fill="none" stroke="#000" stroke-width="1.3"/>
<rect x="1743.8" y="796.8" width="8.4" height="8.4" fill="none" stroke="#000" stroke-width="1.3"/>
<rect x="1747.8" y="795.3" width="8.4" height="8.4" fill="none" stroke="#000" stroke-width="1.3"/>
<rect x="1751.8" y="793.8" width="8.4" height="8.4" fill="none" stroke="#000" stroke-width="1.3"/>
<rect x="1754.8" y="792.8" width="8.4" height="8.4" fill="none" stroke="#000" stroke-width="1.3"/>
<rect x="1757.8" y="791.8" width="8.4" height="8.4" fill="none" stroke="#000" stroke-width="1.3"/>
<rect x="1760.8" y="790.3" width="8.4" height="8.4" fill="none" stroke="#000" stroke-width="1.3"/>
<rect x="1763.8" y="788.8" width="8.4" height="8.4" fill="none" stroke="#000" stroke-width="1.3"/>
<rect x="1766.8" y="786.8" width="8.4" height="8.4" fill="none" stroke="#000" stroke-width="1.3"/>
<rect x="1769.8" y="786.3" width="8.4" height="8.4" fill="none" stroke="#000" stroke-width="1.3"/>
<rect x="1772.8" y="784.8" width="8.4" height="8.4" fill="none" stroke="#000" stroke-width="1.3"/>
<rect x="1775.8" y="787.3" width="8.4" height="8.4" fill="none" stroke="#000" stroke-width="1.3"/>
<rect x="1777.8" y="782.8" width="8.4" height="8.4" fill="none" stroke="#000" stroke-width="1.3"/>
<rect x="1780.8" y="781.8" width="8.4" height="8.4" fill="none" stroke="#000" stroke-width="1.3"/>
<rect x="1783.8" y="779.8" width="8.4" height="8.4" fill="none" stroke="#000" stroke-width="1.3"/>
<rect x="1785.8" y="778.8" width="8.4" height="8.4" fill="none" stroke="#000" stroke-width="1.3"/>
<rect x="1788.8" y="779.8" width="8.4" height="8.4" fill="none" stroke="#000" stroke-width="1.3"/>
<rect x="1790.8" y="778.8" width="8.4" height="8.4" fill="none" stroke="#000" stroke-width="1.3"/>
<rect x="1796.8" y="778.3" width="8.4" height="8.4" fill="none" stroke="#000" stroke-width="1.3"/>
<rect x="1804.8" y="776.8" width="8.4" height="8.4" fill="none" stroke="#000" stroke-width="1.3"/>
<rect x="1817.3" y="771.3" width="8.4" height="8.4" fill="none" stroke="#000" stroke-width="1.3"/></svg></body></html>
